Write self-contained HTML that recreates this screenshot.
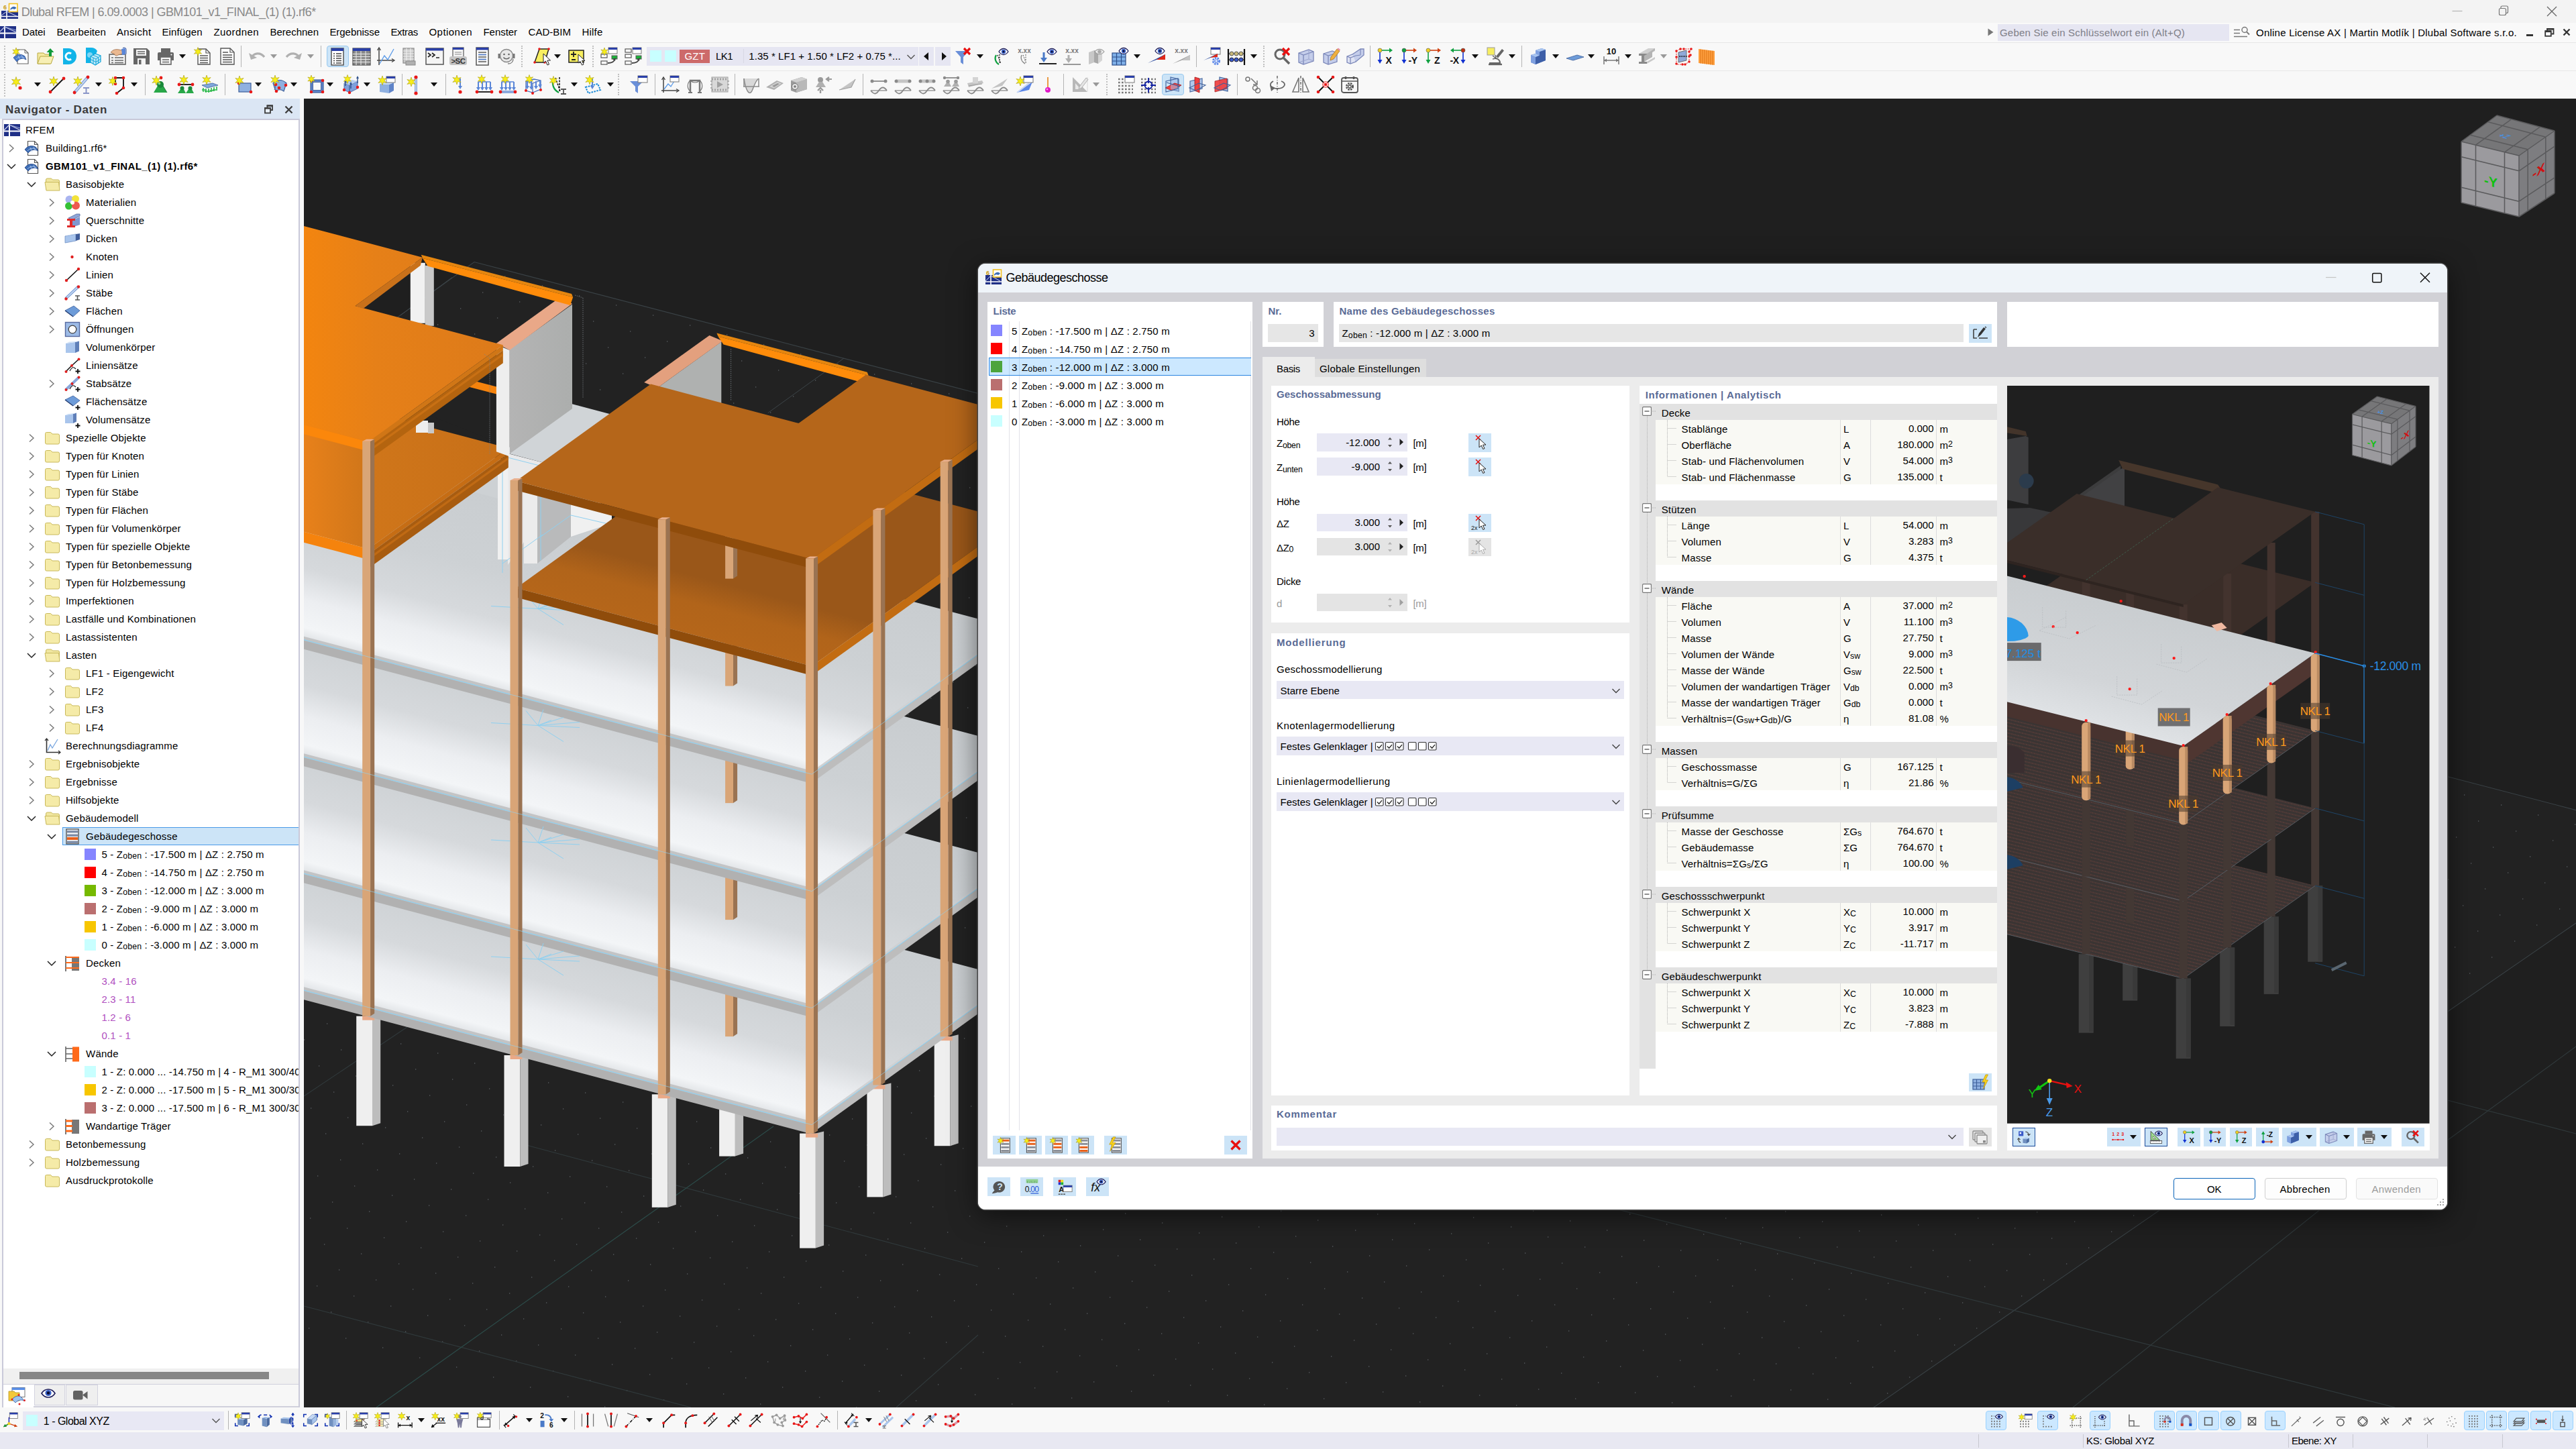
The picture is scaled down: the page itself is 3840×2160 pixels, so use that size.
<!DOCTYPE html>
<html lang="de"><head><meta charset="utf-8"><title>Dlubal RFEM</title><style>
html,body{margin:0;padding:0;background:#202020;}
body{width:3840px;height:2160px;position:relative;overflow:hidden;font-family:"Liberation Sans",sans-serif;}
.a{position:absolute;display:block;}
.t{position:absolute;white-space:pre;display:block;}
.t sub{font-size:82%;vertical-align:baseline;position:relative;top:0.12em;}
.t sup{font-size:82%;vertical-align:baseline;position:relative;top:-0.22em;}
svg{overflow:visible;}
svg text{font-family:"Liberation Sans",sans-serif;}
</style></head><body>
<!-- chrome -->
<div class="a" style="left:0px;top:0px;width:3840px;height:34px;background:#f3f3f3;"></div>
<div class="a" style="left:0px;top:34px;width:3840px;height:30px;background:#f9f9f9;"></div>
<div class="a" style="left:0px;top:63px;width:3840px;height:1px;background:#e6e6e6;"></div>
<div class="a" style="left:0px;top:64px;width:3840px;height:83px;background:#f8f8f8;"></div>
<div class="a" style="left:0px;top:105px;width:3840px;height:1px;background:#e9e9e9;"></div>
<svg class="a" style="left:2px;top:4px;width:26px;height:26px" viewBox="0 0 26 26"><rect x="0" y="12" width="25" height="12" fill="#1f2f86"/><path d="M0 20.500h25M8 12v12" stroke="#fff" stroke-width="1.600"/><path d="M8 13l15 7M8 13L0 19" stroke="#cfd6f0" stroke-width="1"/><rect x="11.500" y="1.500" width="12.500" height="12" fill="#fff" stroke="#f0c020" stroke-width="1.600"/><path d="M13.500 9c3-4 7-4 9-1l-3 2c-2-1-4-1-6 1z" fill="#3d6db5"/><text x="3" y="10" font-size="9" font-weight="bold" fill="#c89a10">6</text></svg>
<svg class="a" style="left:0px;top:39px;width:25px;height:19px" viewBox="0 0 25 19"><rect x="0" y="0" width="24" height="18" fill="#1f2f86"/><path d="M0 10.500h24M7 0v18" stroke="#fff" stroke-width="1.800"/><path d="M7 1l17 8M7 1L0 8" stroke="#cfd6f0" stroke-width="1.100"/><path d="M7 1l17 5" stroke="#9fb0e0" stroke-width=".9"/></svg>
<span class="t" style="left:31.8px;top:5.66px;font-size:18px;line-height:24px;height:24px;color:#8a8a8a;letter-spacing:-0.568px;">Dlubal RFEM | 6.09.0003 | GBM101_v1_FINAL_(1) (1).rf6*</span>
<svg class="a" style="left:3640px;top:0;width:200px;height:34px" viewBox="0 0 200 34"><path d="M15.5 16.5h15" stroke="#b5b5b5" stroke-width="1.2" fill="none"/><rect x="85.5" y="12.5" width="10" height="10" rx="2" fill="none" stroke="#777" stroke-width="1.2"/><path d="M88 12.5v-1.5a2 2 0 0 1 2-2h6.5a2 2 0 0 1 2 2v6.5a2 2 0 0 1-2 2h-1" fill="none" stroke="#777" stroke-width="1.2"/><path d="M157 10l14 14M171 10l-14 14" stroke="#666" stroke-width="1.3" fill="none"/></svg>
<span class="t" style="left:33px;top:38.4px;font-size:15px;line-height:20px;height:20px;color:#000;letter-spacing:-0.103px;">Datei</span>
<span class="t" style="left:84.5px;top:38.4px;font-size:15px;line-height:20px;height:20px;color:#000;letter-spacing:0.094px;">Bearbeiten</span>
<span class="t" style="left:174px;top:38.4px;font-size:15px;line-height:20px;height:20px;color:#000;letter-spacing:0.330px;">Ansicht</span>
<span class="t" style="left:241.5px;top:38.4px;font-size:15px;line-height:20px;height:20px;color:#000;letter-spacing:0.110px;">Einfügen</span>
<span class="t" style="left:318.5px;top:38.4px;font-size:15px;line-height:20px;height:20px;color:#000;letter-spacing:0.410px;">Zuordnen</span>
<span class="t" style="left:402.5px;top:38.4px;font-size:15px;line-height:20px;height:20px;color:#000;letter-spacing:-0.007px;">Berechnen</span>
<span class="t" style="left:491.4px;top:38.4px;font-size:15px;line-height:20px;height:20px;color:#000;letter-spacing:-0.045px;">Ergebnisse</span>
<span class="t" style="left:582.4px;top:38.4px;font-size:15px;line-height:20px;height:20px;color:#000;letter-spacing:-0.319px;">Extras</span>
<span class="t" style="left:639.5px;top:38.4px;font-size:15px;line-height:20px;height:20px;color:#000;letter-spacing:0.451px;">Optionen</span>
<span class="t" style="left:720.5px;top:38.4px;font-size:15px;line-height:20px;height:20px;color:#000;letter-spacing:-0.051px;">Fenster</span>
<span class="t" style="left:787.6px;top:38.4px;font-size:15px;line-height:20px;height:20px;color:#000;letter-spacing:0.010px;">CAD-BIM</span>
<span class="t" style="left:867.6px;top:38.4px;font-size:15px;line-height:20px;height:20px;color:#000;letter-spacing:0.160px;">Hilfe</span>
<svg class="a" style="left:2962px;top:41px;width:12px;height:14px" viewBox="0 0 12 14"><path d="M1.5 1.5l8 5.5-8 5.5z" fill="#777"/></svg>
<div class="a" style="left:2977.5px;top:35.5px;width:345px;height:25px;background:#e6e6f2;"></div>
<span class="t" style="left:2981px;top:38.8px;font-size:15px;line-height:20px;height:20px;color:#7f7f88;letter-spacing:0.203px;">Geben Sie ein Schlüsselwort ein (Alt+Q)</span>
<svg class="a" style="left:3328px;top:38px;width:28px;height:22px" viewBox="0 0 28 22"><path d="M2 6.5h9M2 11.5h9M2 16.5h20" stroke="#777" stroke-width="1.6" fill="none"/><circle cx="18" cy="6.5" r="4" fill="none" stroke="#777" stroke-width="1.5"/><path d="M21 9.5l4 4" stroke="#777" stroke-width="1.8"/></svg>
<span class="t" style="left:3363px;top:38.8px;font-size:15px;line-height:20px;height:20px;color:#000;letter-spacing:0.232px;">Online License AX | Martin Motlík | Dlubal Software s.r.o.</span>
<svg class="a" style="left:3760px;top:38px;width:80px;height:22px" viewBox="0 0 80 22"><rect x="6" y="13" width="10" height="3" fill="#333"/><rect x="34.2" y="8.2" width="8.6" height="7.6" fill="none" stroke="#333" stroke-width="1.8"/><path d="M37 8V5h9.5v7.5h-3" fill="none" stroke="#333" stroke-width="1.8"/><rect x="34" y="7.5" width="9" height="2.6" fill="#333"/><rect x="37" y="4" width="10" height="2.6" fill="#333"/><path d="M61.5 5.5l9 9M70.5 5.5l-9 9" stroke="#333" stroke-width="2.4"/></svg>
<!-- nav -->
<div class="a" style="left:0px;top:147px;width:5px;height:1951px;background:#f8f8f8;"></div>
<div class="a" style="left:0px;top:147px;width:447px;height:30px;background:#dbe6f4;"></div>
<span class="t" style="left:8px;top:151.81px;font-size:17px;line-height:23px;height:23px;color:#3a3a3a;letter-spacing:0.663px;font-weight:bold;">Navigator - Daten</span>
<svg class="a" style="left:390px;top:152px;width:52px;height:22px" viewBox="0 0 52 22"><rect x="5" y="9" width="8" height="7.500" fill="#e8f0fa" stroke="#3c3c3c" stroke-width="1.800"/><path d="M8.500 9V5.500h7.500V12h-3" fill="none" stroke="#3c3c3c" stroke-width="1.800"/><rect x="4.100" y="8" width="9.800" height="2.600" fill="#3c3c3c"/><rect x="7.600" y="4.500" width="9.300" height="2.400" fill="#3c3c3c"/><path d="M35.500 6.500l10 10M45.500 6.500l-10 10" stroke="#3c3c3c" stroke-width="2.300"/></svg>
<div class="a" style="left:3px;top:177px;width:444px;height:1921px;background:#c9c9d9;"></div>
<div class="a" style="left:5px;top:178.5px;width:440px;height:1884.5px;background:#fff;"></div>
<div class="a" style="left:5px;top:2040px;width:440px;height:23.5px;background:#f0f0f0;"></div>
<div class="a" style="left:29px;top:2045px;width:372px;height:11px;background:#878787;"></div>
<div class="a" style="left:5px;top:2063.5px;width:440px;height:33px;background:#f7f7f7;"></div>
<div class="a" style="left:5px;top:2063px;width:440px;height:1px;background:#d0d0dc;"></div>
<div class="a" style="left:5px;top:2064px;width:45.5px;height:33.5px;background:#fff;"></div>
<div class="a" style="left:50.5px;top:2064px;width:46px;height:30.5px;background:#efefef;border:1px solid #d3d3df;box-sizing:border-box;"></div>
<div class="a" style="left:97.5px;top:2064px;width:48.5px;height:30.5px;background:#efefef;border:1px solid #d3d3df;box-sizing:border-box;"></div>
<div class="a" style="left:50px;top:2096px;width:395px;height:1.5px;background:#d0d0dc;"></div>
<svg class="a" style="left:12px;top:2067px;width:28px;height:28px" viewBox="0 0 28 28"><rect x="6" y="1.500" width="19" height="14" fill="#fff" stroke="#777"/><rect x="6" y="1.500" width="19" height="3.500" fill="#5a8fe8"/><path d="M1 7h8l2 2h6v12H1z" fill="#f3c83a" stroke="#b8941f" stroke-width=".8"/><path d="M6 19c5-6 11-6 14-3l4 5c-4-2-9-1-13 3z" fill="#9cc3ee" stroke="#36589a" stroke-width=".8"/><circle cx="6" cy="19" r="1.500" fill="#e02020"/><circle cx="16" cy="12.500" r="1.500" fill="#e02020"/><circle cx="24.500" cy="20.500" r="1.500" fill="#e02020"/><circle cx="17" cy="26" r="1.500" fill="#e02020"/></svg>
<svg class="a" style="left:61px;top:2069px;width:22px;height:16px" viewBox="0 0 22 16"><path d="M1 8c5-8 15-8 20 0-5 8-15 8-20 0z" fill="#fff" stroke="#1d1d5a" stroke-width="1.600"/><circle cx="11" cy="7.500" r="4.600" fill="#3a62c8"/><circle cx="11" cy="7.500" r="2.300" fill="#0a0a30"/></svg>
<svg class="a" style="left:108px;top:2072px;width:24px;height:16px" viewBox="0 0 24 16"><rect x="1" y="1" width="14.500" height="13.500" rx="2.500" fill="#616161"/><path d="M15 7.500l7.500-5.500v11.500z" fill="#616161"/></svg>
<svg class="a" style="left:6px;top:181.5px;width:24px;height:24px" viewBox="0 0 24 24"><rect x="0" y="3" width="24" height="18" fill="#1f2f86"/><path d="M0 13.5h24M8 3v18" stroke="#fff" stroke-width="2"/><path d="M8 4L24 12M8 4L0 12" stroke="#cfd6f0" stroke-width="1.2"/><path d="M8 4l16 5" stroke="#9fb0e0" stroke-width="1"/></svg>
<span class="t" style="left:38px;top:183.8px;font-size:15px;line-height:20px;height:20px;color:#000;letter-spacing:0.266px;">RFEM</span>
<svg class="a" style="left:11px;top:212.5px;width:12px;height:16px" viewBox="0 0 12 16"><path d="M3 2.500l6 5.500-6 5.500" fill="none" stroke="#777" stroke-width="1.400"/></svg>
<svg class="a" style="left:36px;top:208.5px;width:24px;height:24px" viewBox="0 0 24 24"><path d="M5.5 1.5h10l5 5v16h-15z" fill="#fff" stroke="#555" stroke-width="1.2"/><path d="M15.5 1.5v5h5" fill="none" stroke="#555" stroke-width="1.2"/><path d="M1 14c4-6 12-7 17-3l3 5c-5-3-11-2-15 3z" fill="#3d6db5" stroke="#1d3f80" stroke-width=".8"/><path d="M5 16c3-4 9-5 13-2M9 11l3 7M14 10l3 6" stroke="#bcd3f2" stroke-width=".8" fill="none"/></svg>
<span class="t" style="left:68px;top:210.8px;font-size:15px;line-height:20px;height:20px;color:#000;letter-spacing:0.159px;">Building1.rf6*</span>
<svg class="a" style="left:9px;top:241.5px;width:16px;height:12px" viewBox="0 0 16 12"><path d="M2 3l6 6 6-6" fill="none" stroke="#222" stroke-width="1.500"/></svg>
<svg class="a" style="left:36px;top:235.5px;width:24px;height:24px" viewBox="0 0 24 24"><path d="M5.5 1.5h10l5 5v16h-15z" fill="#fff" stroke="#555" stroke-width="1.2"/><path d="M15.5 1.5v5h5" fill="none" stroke="#555" stroke-width="1.2"/><path d="M1 14c4-6 12-7 17-3l3 5c-5-3-11-2-15 3z" fill="#3d6db5" stroke="#1d3f80" stroke-width=".8"/><path d="M5 16c3-4 9-5 13-2M9 11l3 7M14 10l3 6" stroke="#bcd3f2" stroke-width=".8" fill="none"/></svg>
<span class="t" style="left:68px;top:237.8px;font-size:15px;line-height:20px;height:20px;color:#000;letter-spacing:0.386px;font-weight:bold;">GBM101_v1_FINAL_(1) (1).rf6*</span>
<svg class="a" style="left:39px;top:268.5px;width:16px;height:12px" viewBox="0 0 16 12"><path d="M2 3l6 6 6-6" fill="none" stroke="#222" stroke-width="1.500"/></svg>
<svg class="a" style="left:66px;top:262.5px;width:24px;height:24px" viewBox="0 0 24 24"><path d="M2.5 5a2 2 0 0 1 2-2h6l2 2h8a2 2 0 0 1 2 2v12h-20z" fill="#f0e6a0" stroke="#c9b95a"/><path d="M1 8.5h20.5l1.5 12.5h-20z" fill="#f5eba8" stroke="#c9b95a" stroke-linejoin="round"/></svg>
<span class="t" style="left:98px;top:264.8px;font-size:15px;line-height:20px;height:20px;color:#000;letter-spacing:0.177px;">Basisobjekte</span>
<svg class="a" style="left:71px;top:293.5px;width:12px;height:16px" viewBox="0 0 12 16"><path d="M3 2.500l6 5.500-6 5.500" fill="none" stroke="#777" stroke-width="1.400"/></svg>
<svg class="a" style="left:96px;top:289.5px;width:24px;height:24px" viewBox="0 0 24 24"><circle cx="7.5" cy="7.5" r="6" fill="#a9b4f0"/><circle cx="16.5" cy="6.5" r="5.5" fill="#f3e33a"/><circle cx="6.5" cy="17" r="5.5" fill="#35c135"/><circle cx="17" cy="16.5" r="6" fill="#ee5a4f"/><circle cx="12" cy="12" r="3" fill="#fff"/></svg>
<span class="t" style="left:128px;top:291.8px;font-size:15px;line-height:20px;height:20px;color:#000;letter-spacing:0.167px;">Materialien</span>
<svg class="a" style="left:71px;top:320.5px;width:12px;height:16px" viewBox="0 0 12 16"><path d="M3 2.500l6 5.500-6 5.500" fill="none" stroke="#777" stroke-width="1.400"/></svg>
<svg class="a" style="left:96px;top:316.5px;width:24px;height:24px" viewBox="0 0 24 24"><path d="M6 8l12-6h5v3l-12 6z" fill="#8ea5d8" stroke="#56699e" stroke-width=".8"/><path d="M11 12l12-6v12l-12 4z" fill="#7f97cf"/><path d="M4 9h12v3h-4v7h4v3H4v-3h4v-7H4z" fill="#e02a2a"/></svg>
<span class="t" style="left:128px;top:318.8px;font-size:15px;line-height:20px;height:20px;color:#000;letter-spacing:0.177px;">Querschnitte</span>
<svg class="a" style="left:71px;top:347.5px;width:12px;height:16px" viewBox="0 0 12 16"><path d="M3 2.500l6 5.500-6 5.500" fill="none" stroke="#777" stroke-width="1.400"/></svg>
<svg class="a" style="left:96px;top:343.5px;width:24px;height:24px" viewBox="0 0 24 24"><path d="M1 8l16-3v10L1 18z" fill="#a9c5ec" stroke="#6f8fc4" stroke-width=".8"/><path d="M17 5l6-1v9l-6 2z" fill="#3f5d9a"/><path d="M1 8l6-2 16-2-6 1z" fill="#d4e4f7"/></svg>
<span class="t" style="left:128px;top:345.8px;font-size:15px;line-height:20px;height:20px;color:#000;letter-spacing:0.191px;">Dicken</span>
<svg class="a" style="left:71px;top:374.5px;width:12px;height:16px" viewBox="0 0 12 16"><path d="M3 2.500l6 5.500-6 5.500" fill="none" stroke="#777" stroke-width="1.400"/></svg>
<svg class="a" style="left:96px;top:370.5px;width:24px;height:24px" viewBox="0 0 24 24"><circle cx="11.5" cy="12" r="2.2" fill="#e02020"/></svg>
<span class="t" style="left:128px;top:372.8px;font-size:15px;line-height:20px;height:20px;color:#000;letter-spacing:0.198px;">Knoten</span>
<svg class="a" style="left:71px;top:401.5px;width:12px;height:16px" viewBox="0 0 12 16"><path d="M3 2.500l6 5.500-6 5.500" fill="none" stroke="#777" stroke-width="1.400"/></svg>
<svg class="a" style="left:96px;top:397.5px;width:24px;height:24px" viewBox="0 0 24 24"><path d="M3 20L21 3" stroke="#111" stroke-width="1.6"/><circle cx="3" cy="20" r="2.2" fill="#e02020"/><circle cx="21" cy="3" r="2.2" fill="#e02020"/></svg>
<span class="t" style="left:128px;top:399.8px;font-size:15px;line-height:20px;height:20px;color:#000;letter-spacing:0.167px;">Linien</span>
<svg class="a" style="left:71px;top:428.5px;width:12px;height:16px" viewBox="0 0 12 16"><path d="M3 2.500l6 5.500-6 5.500" fill="none" stroke="#777" stroke-width="1.400"/></svg>
<svg class="a" style="left:96px;top:424.5px;width:24px;height:24px" viewBox="0 0 24 24"><path d="M2 20L21 2" stroke="#7ea0d8" stroke-width="4"/><path d="M2 20L21 2" stroke="#cfe0f5" stroke-width="1.5"/><circle cx="2.5" cy="20.5" r="2.2" fill="#e02020"/><circle cx="21" cy="2.5" r="2.2" fill="#e02020"/><path d="M16 16h7M16 22h7M19.5 16v6" stroke="#555" stroke-width="1.6"/></svg>
<span class="t" style="left:128px;top:426.8px;font-size:15px;line-height:20px;height:20px;color:#000;letter-spacing:0.196px;">Stäbe</span>
<svg class="a" style="left:71px;top:455.5px;width:12px;height:16px" viewBox="0 0 12 16"><path d="M3 2.500l6 5.500-6 5.500" fill="none" stroke="#777" stroke-width="1.400"/></svg>
<svg class="a" style="left:96px;top:451.5px;width:24px;height:24px" viewBox="0 0 24 24"><path d="M1 11l13-7 9 7-10 9z" fill="#6d9bd8" stroke="#3d5f9a" stroke-width=".8"/><path d="M1 11l12 9" stroke="#2d4578" stroke-width="1.5"/></svg>
<span class="t" style="left:128px;top:453.8px;font-size:15px;line-height:20px;height:20px;color:#000;letter-spacing:0.191px;">Flächen</span>
<svg class="a" style="left:71px;top:482.5px;width:12px;height:16px" viewBox="0 0 12 16"><path d="M3 2.500l6 5.500-6 5.500" fill="none" stroke="#777" stroke-width="1.400"/></svg>
<svg class="a" style="left:96px;top:478.5px;width:24px;height:24px" viewBox="0 0 24 24"><rect x="1.500" y="1.500" width="21" height="21" fill="#9dbbe6" stroke="#56699e" stroke-width="1.4"/><circle cx="12" cy="12" r="5.8" fill="#fff" stroke="#444" stroke-width="1.3"/></svg>
<span class="t" style="left:128px;top:480.8px;font-size:15px;line-height:20px;height:20px;color:#000;letter-spacing:0.194px;">Öffnungen</span>
<svg class="a" style="left:96px;top:505.5px;width:24px;height:24px" viewBox="0 0 24 24"><path d="M2 6l14-2v16H2z" fill="#a9c5ec"/><path d="M16 4l6-1.500v15L16 20z" fill="#5f7fb8"/><path d="M2 6l5-2.500 15-1-6 1.500z" fill="#d4e4f7"/></svg>
<span class="t" style="left:128px;top:507.8px;font-size:15px;line-height:20px;height:20px;color:#000;letter-spacing:0.194px;">Volumenkörper</span>
<svg class="a" style="left:96px;top:532.5px;width:24px;height:24px" viewBox="0 0 24 24"><path d="M2 21L11 12 22 2" stroke="#111" stroke-width="1.5" fill="none"/><path d="M8 20c4-8 7-5 9-3" stroke="#111" stroke-width="1.2" fill="none"/><circle cx="2.500" cy="21" r="2" fill="#e02020"/><circle cx="11" cy="12" r="2" fill="#e02020"/><circle cx="21.500" cy="2.500" r="2" fill="#e02020"/><path d="M16.500 20.500h7M20 17v7" stroke="#111" stroke-width="1.8"/></svg>
<span class="t" style="left:128px;top:534.8px;font-size:15px;line-height:20px;height:20px;color:#000;letter-spacing:0.172px;">Liniensätze</span>
<svg class="a" style="left:71px;top:563.5px;width:12px;height:16px" viewBox="0 0 12 16"><path d="M3 2.500l6 5.500-6 5.500" fill="none" stroke="#777" stroke-width="1.400"/></svg>
<svg class="a" style="left:96px;top:559.5px;width:24px;height:24px" viewBox="0 0 24 24"><path d="M2 21L21 3" stroke="#8aa8dc" stroke-width="4"/><path d="M8 20c4-8 7-5 9-3" stroke="#111" stroke-width="1.2" fill="none"/><circle cx="2.500" cy="21" r="2" fill="#e02020"/><circle cx="11.500" cy="12" r="2" fill="#e02020"/><circle cx="21.500" cy="2.500" r="2" fill="#e02020"/><path d="M16.500 20.500h7M20 17v7" stroke="#111" stroke-width="1.800"/></svg>
<span class="t" style="left:128px;top:561.8px;font-size:15px;line-height:20px;height:20px;color:#000;letter-spacing:0.185px;">Stabsätze</span>
<svg class="a" style="left:96px;top:586.5px;width:24px;height:24px" viewBox="0 0 24 24"><path d="M1 9l12-6 10 7-10 8z" fill="#6d9bd8" stroke="#3d5f9a" stroke-width=".8"/><path d="M1 9l12 9" stroke="#2d4578" stroke-width="1.500"/><path d="M16.500 20.500h7M20 17v7" stroke="#111" stroke-width="1.800"/></svg>
<span class="t" style="left:128px;top:588.8px;font-size:15px;line-height:20px;height:20px;color:#000;letter-spacing:0.186px;">Flächensätze</span>
<svg class="a" style="left:96px;top:613.5px;width:24px;height:24px" viewBox="0 0 24 24"><path d="M1 5l12-2v14H1z" fill="#a9c5ec"/><path d="M13 3l5-1.500v13L13 17z" fill="#5f7fb8"/><path d="M1 5l4-2 13-1.500-5 1.500z" fill="#d4e4f7"/><path d="M16.500 20.500h7M20 17v7" stroke="#111" stroke-width="1.800"/></svg>
<span class="t" style="left:128px;top:615.8px;font-size:15px;line-height:20px;height:20px;color:#000;letter-spacing:0.196px;">Volumensätze</span>
<svg class="a" style="left:41px;top:644.5px;width:12px;height:16px" viewBox="0 0 12 16"><path d="M3 2.500l6 5.500-6 5.500" fill="none" stroke="#777" stroke-width="1.400"/></svg>
<svg class="a" style="left:66px;top:640.5px;width:24px;height:24px" viewBox="0 0 24 24"><path d="M1.5 5.5a2 2 0 0 1 2-2h6l2.5 2.5h8.5a2 2 0 0 1 2 2V19a2 2 0 0 1-2 2h-17a2 2 0 0 1-2-2z" fill="#f5eba8" stroke="#c9b95a" stroke-width="1"/></svg>
<span class="t" style="left:98px;top:642.8px;font-size:15px;line-height:20px;height:20px;color:#000;letter-spacing:0.172px;">Spezielle Objekte</span>
<svg class="a" style="left:41px;top:671.5px;width:12px;height:16px" viewBox="0 0 12 16"><path d="M3 2.500l6 5.500-6 5.500" fill="none" stroke="#777" stroke-width="1.400"/></svg>
<svg class="a" style="left:66px;top:667.5px;width:24px;height:24px" viewBox="0 0 24 24"><path d="M1.5 5.5a2 2 0 0 1 2-2h6l2.5 2.5h8.5a2 2 0 0 1 2 2V19a2 2 0 0 1-2 2h-17a2 2 0 0 1-2-2z" fill="#f5eba8" stroke="#c9b95a" stroke-width="1"/></svg>
<span class="t" style="left:98px;top:669.8px;font-size:15px;line-height:20px;height:20px;color:#000;letter-spacing:0.179px;">Typen für Knoten</span>
<svg class="a" style="left:41px;top:698.5px;width:12px;height:16px" viewBox="0 0 12 16"><path d="M3 2.500l6 5.500-6 5.500" fill="none" stroke="#777" stroke-width="1.400"/></svg>
<svg class="a" style="left:66px;top:694.5px;width:24px;height:24px" viewBox="0 0 24 24"><path d="M1.5 5.5a2 2 0 0 1 2-2h6l2.5 2.5h8.5a2 2 0 0 1 2 2V19a2 2 0 0 1-2 2h-17a2 2 0 0 1-2-2z" fill="#f5eba8" stroke="#c9b95a" stroke-width="1"/></svg>
<span class="t" style="left:98px;top:696.8px;font-size:15px;line-height:20px;height:20px;color:#000;letter-spacing:0.167px;">Typen für Linien</span>
<svg class="a" style="left:41px;top:725.5px;width:12px;height:16px" viewBox="0 0 12 16"><path d="M3 2.500l6 5.500-6 5.500" fill="none" stroke="#777" stroke-width="1.400"/></svg>
<svg class="a" style="left:66px;top:721.5px;width:24px;height:24px" viewBox="0 0 24 24"><path d="M1.5 5.5a2 2 0 0 1 2-2h6l2.5 2.5h8.5a2 2 0 0 1 2 2V19a2 2 0 0 1-2 2h-17a2 2 0 0 1-2-2z" fill="#f5eba8" stroke="#c9b95a" stroke-width="1"/></svg>
<span class="t" style="left:98px;top:723.8px;font-size:15px;line-height:20px;height:20px;color:#000;letter-spacing:0.177px;">Typen für Stäbe</span>
<svg class="a" style="left:41px;top:752.5px;width:12px;height:16px" viewBox="0 0 12 16"><path d="M3 2.500l6 5.500-6 5.500" fill="none" stroke="#777" stroke-width="1.400"/></svg>
<svg class="a" style="left:66px;top:748.5px;width:24px;height:24px" viewBox="0 0 24 24"><path d="M1.5 5.5a2 2 0 0 1 2-2h6l2.5 2.5h8.5a2 2 0 0 1 2 2V19a2 2 0 0 1-2 2h-17a2 2 0 0 1-2-2z" fill="#f5eba8" stroke="#c9b95a" stroke-width="1"/></svg>
<span class="t" style="left:98px;top:750.8px;font-size:15px;line-height:20px;height:20px;color:#000;letter-spacing:0.177px;">Typen für Flächen</span>
<svg class="a" style="left:41px;top:779.5px;width:12px;height:16px" viewBox="0 0 12 16"><path d="M3 2.500l6 5.500-6 5.500" fill="none" stroke="#777" stroke-width="1.400"/></svg>
<svg class="a" style="left:66px;top:775.5px;width:24px;height:24px" viewBox="0 0 24 24"><path d="M1.5 5.5a2 2 0 0 1 2-2h6l2.5 2.5h8.5a2 2 0 0 1 2 2V19a2 2 0 0 1-2 2h-17a2 2 0 0 1-2-2z" fill="#f5eba8" stroke="#c9b95a" stroke-width="1"/></svg>
<span class="t" style="left:98px;top:777.8px;font-size:15px;line-height:20px;height:20px;color:#000;letter-spacing:0.182px;">Typen für Volumenkörper</span>
<svg class="a" style="left:41px;top:806.5px;width:12px;height:16px" viewBox="0 0 12 16"><path d="M3 2.500l6 5.500-6 5.500" fill="none" stroke="#777" stroke-width="1.400"/></svg>
<svg class="a" style="left:66px;top:802.5px;width:24px;height:24px" viewBox="0 0 24 24"><path d="M1.5 5.5a2 2 0 0 1 2-2h6l2.5 2.5h8.5a2 2 0 0 1 2 2V19a2 2 0 0 1-2 2h-17a2 2 0 0 1-2-2z" fill="#f5eba8" stroke="#c9b95a" stroke-width="1"/></svg>
<span class="t" style="left:98px;top:804.8px;font-size:15px;line-height:20px;height:20px;color:#000;letter-spacing:0.168px;">Typen für spezielle Objekte</span>
<svg class="a" style="left:41px;top:833.5px;width:12px;height:16px" viewBox="0 0 12 16"><path d="M3 2.500l6 5.500-6 5.500" fill="none" stroke="#777" stroke-width="1.400"/></svg>
<svg class="a" style="left:66px;top:829.5px;width:24px;height:24px" viewBox="0 0 24 24"><path d="M1.5 5.5a2 2 0 0 1 2-2h6l2.5 2.5h8.5a2 2 0 0 1 2 2V19a2 2 0 0 1-2 2h-17a2 2 0 0 1-2-2z" fill="#f5eba8" stroke="#c9b95a" stroke-width="1"/></svg>
<span class="t" style="left:98px;top:831.8px;font-size:15px;line-height:20px;height:20px;color:#000;letter-spacing:0.191px;">Typen für Betonbemessung</span>
<svg class="a" style="left:41px;top:860.5px;width:12px;height:16px" viewBox="0 0 12 16"><path d="M3 2.500l6 5.500-6 5.500" fill="none" stroke="#777" stroke-width="1.400"/></svg>
<svg class="a" style="left:66px;top:856.5px;width:24px;height:24px" viewBox="0 0 24 24"><path d="M1.5 5.5a2 2 0 0 1 2-2h6l2.5 2.5h8.5a2 2 0 0 1 2 2V19a2 2 0 0 1-2 2h-17a2 2 0 0 1-2-2z" fill="#f5eba8" stroke="#c9b95a" stroke-width="1"/></svg>
<span class="t" style="left:98px;top:858.8px;font-size:15px;line-height:20px;height:20px;color:#000;letter-spacing:0.189px;">Typen für Holzbemessung</span>
<svg class="a" style="left:41px;top:887.5px;width:12px;height:16px" viewBox="0 0 12 16"><path d="M3 2.500l6 5.500-6 5.500" fill="none" stroke="#777" stroke-width="1.400"/></svg>
<svg class="a" style="left:66px;top:883.5px;width:24px;height:24px" viewBox="0 0 24 24"><path d="M1.5 5.5a2 2 0 0 1 2-2h6l2.5 2.5h8.5a2 2 0 0 1 2 2V19a2 2 0 0 1-2 2h-17a2 2 0 0 1-2-2z" fill="#f5eba8" stroke="#c9b95a" stroke-width="1"/></svg>
<span class="t" style="left:98px;top:885.8px;font-size:15px;line-height:20px;height:20px;color:#000;letter-spacing:0.177px;">Imperfektionen</span>
<svg class="a" style="left:41px;top:914.5px;width:12px;height:16px" viewBox="0 0 12 16"><path d="M3 2.500l6 5.500-6 5.500" fill="none" stroke="#777" stroke-width="1.400"/></svg>
<svg class="a" style="left:66px;top:910.5px;width:24px;height:24px" viewBox="0 0 24 24"><path d="M1.5 5.5a2 2 0 0 1 2-2h6l2.5 2.5h8.5a2 2 0 0 1 2 2V19a2 2 0 0 1-2 2h-17a2 2 0 0 1-2-2z" fill="#f5eba8" stroke="#c9b95a" stroke-width="1"/></svg>
<span class="t" style="left:98px;top:912.8px;font-size:15px;line-height:20px;height:20px;color:#000;letter-spacing:0.175px;">Lastfälle und Kombinationen</span>
<svg class="a" style="left:41px;top:941.5px;width:12px;height:16px" viewBox="0 0 12 16"><path d="M3 2.500l6 5.500-6 5.500" fill="none" stroke="#777" stroke-width="1.400"/></svg>
<svg class="a" style="left:66px;top:937.5px;width:24px;height:24px" viewBox="0 0 24 24"><path d="M1.5 5.5a2 2 0 0 1 2-2h6l2.5 2.5h8.5a2 2 0 0 1 2 2V19a2 2 0 0 1-2 2h-17a2 2 0 0 1-2-2z" fill="#f5eba8" stroke="#c9b95a" stroke-width="1"/></svg>
<span class="t" style="left:98px;top:939.8px;font-size:15px;line-height:20px;height:20px;color:#000;letter-spacing:0.174px;">Lastassistenten</span>
<svg class="a" style="left:39px;top:970.5px;width:16px;height:12px" viewBox="0 0 16 12"><path d="M2 3l6 6 6-6" fill="none" stroke="#222" stroke-width="1.500"/></svg>
<svg class="a" style="left:66px;top:964.5px;width:24px;height:24px" viewBox="0 0 24 24"><path d="M2.5 5a2 2 0 0 1 2-2h6l2 2h8a2 2 0 0 1 2 2v12h-20z" fill="#f0e6a0" stroke="#c9b95a"/><path d="M1 8.5h20.5l1.5 12.5h-20z" fill="#f5eba8" stroke="#c9b95a" stroke-linejoin="round"/></svg>
<span class="t" style="left:98px;top:966.8px;font-size:15px;line-height:20px;height:20px;color:#000;letter-spacing:0.188px;">Lasten</span>
<svg class="a" style="left:71px;top:995.5px;width:12px;height:16px" viewBox="0 0 12 16"><path d="M3 2.500l6 5.500-6 5.500" fill="none" stroke="#777" stroke-width="1.400"/></svg>
<svg class="a" style="left:96px;top:991.5px;width:24px;height:24px" viewBox="0 0 24 24"><path d="M1.5 5.5a2 2 0 0 1 2-2h6l2.5 2.5h8.5a2 2 0 0 1 2 2V19a2 2 0 0 1-2 2h-17a2 2 0 0 1-2-2z" fill="#f5eba8" stroke="#c9b95a" stroke-width="1"/></svg>
<span class="t" style="left:128px;top:993.8px;font-size:15px;line-height:20px;height:20px;color:#000;letter-spacing:0.178px;">LF1 - Eigengewicht</span>
<svg class="a" style="left:71px;top:1022.5px;width:12px;height:16px" viewBox="0 0 12 16"><path d="M3 2.500l6 5.500-6 5.500" fill="none" stroke="#777" stroke-width="1.400"/></svg>
<svg class="a" style="left:96px;top:1018.5px;width:24px;height:24px" viewBox="0 0 24 24"><path d="M1.5 5.5a2 2 0 0 1 2-2h6l2.5 2.5h8.5a2 2 0 0 1 2 2V19a2 2 0 0 1-2 2h-17a2 2 0 0 1-2-2z" fill="#f5eba8" stroke="#c9b95a" stroke-width="1"/></svg>
<span class="t" style="left:128px;top:1020.8px;font-size:15px;line-height:20px;height:20px;color:#000;letter-spacing:0.215px;">LF2</span>
<svg class="a" style="left:71px;top:1049.5px;width:12px;height:16px" viewBox="0 0 12 16"><path d="M3 2.500l6 5.500-6 5.500" fill="none" stroke="#777" stroke-width="1.400"/></svg>
<svg class="a" style="left:96px;top:1045.5px;width:24px;height:24px" viewBox="0 0 24 24"><path d="M1.5 5.5a2 2 0 0 1 2-2h6l2.5 2.5h8.5a2 2 0 0 1 2 2V19a2 2 0 0 1-2 2h-17a2 2 0 0 1-2-2z" fill="#f5eba8" stroke="#c9b95a" stroke-width="1"/></svg>
<span class="t" style="left:128px;top:1047.8px;font-size:15px;line-height:20px;height:20px;color:#000;letter-spacing:0.215px;">LF3</span>
<svg class="a" style="left:71px;top:1076.5px;width:12px;height:16px" viewBox="0 0 12 16"><path d="M3 2.500l6 5.500-6 5.500" fill="none" stroke="#777" stroke-width="1.400"/></svg>
<svg class="a" style="left:96px;top:1072.5px;width:24px;height:24px" viewBox="0 0 24 24"><path d="M1.5 5.5a2 2 0 0 1 2-2h6l2.5 2.5h8.5a2 2 0 0 1 2 2V19a2 2 0 0 1-2 2h-17a2 2 0 0 1-2-2z" fill="#f5eba8" stroke="#c9b95a" stroke-width="1"/></svg>
<span class="t" style="left:128px;top:1074.8px;font-size:15px;line-height:20px;height:20px;color:#000;letter-spacing:0.215px;">LF4</span>
<svg class="a" style="left:66px;top:1099.5px;width:24px;height:24px" viewBox="0 0 24 24"><path d="M3.500 1v20.500H24" stroke="#333" stroke-width="1.600" fill="none"/><path d="M1 4l2.500-3 2.500 3M21 19l3 2.500-3 2.500" stroke="#333" stroke-width="1.200" fill="none"/><path d="M5 19l4-9 3 5 8-13" stroke="#7aa7e0" stroke-width="1.300" fill="none"/></svg>
<span class="t" style="left:98px;top:1101.8px;font-size:15px;line-height:20px;height:20px;color:#000;letter-spacing:0.204px;">Berechnungsdiagramme</span>
<svg class="a" style="left:41px;top:1130.5px;width:12px;height:16px" viewBox="0 0 12 16"><path d="M3 2.500l6 5.500-6 5.500" fill="none" stroke="#777" stroke-width="1.400"/></svg>
<svg class="a" style="left:66px;top:1126.5px;width:24px;height:24px" viewBox="0 0 24 24"><path d="M1.5 5.5a2 2 0 0 1 2-2h6l2.5 2.5h8.5a2 2 0 0 1 2 2V19a2 2 0 0 1-2 2h-17a2 2 0 0 1-2-2z" fill="#f5eba8" stroke="#c9b95a" stroke-width="1"/></svg>
<span class="t" style="left:98px;top:1128.8px;font-size:15px;line-height:20px;height:20px;color:#000;letter-spacing:0.179px;">Ergebnisobjekte</span>
<svg class="a" style="left:41px;top:1157.5px;width:12px;height:16px" viewBox="0 0 12 16"><path d="M3 2.500l6 5.500-6 5.500" fill="none" stroke="#777" stroke-width="1.400"/></svg>
<svg class="a" style="left:66px;top:1153.5px;width:24px;height:24px" viewBox="0 0 24 24"><path d="M1.5 5.5a2 2 0 0 1 2-2h6l2.5 2.5h8.5a2 2 0 0 1 2 2V19a2 2 0 0 1-2 2h-17a2 2 0 0 1-2-2z" fill="#f5eba8" stroke="#c9b95a" stroke-width="1"/></svg>
<span class="t" style="left:98px;top:1155.8px;font-size:15px;line-height:20px;height:20px;color:#000;letter-spacing:0.188px;">Ergebnisse</span>
<svg class="a" style="left:41px;top:1184.5px;width:12px;height:16px" viewBox="0 0 12 16"><path d="M3 2.500l6 5.500-6 5.500" fill="none" stroke="#777" stroke-width="1.400"/></svg>
<svg class="a" style="left:66px;top:1180.5px;width:24px;height:24px" viewBox="0 0 24 24"><path d="M1.5 5.5a2 2 0 0 1 2-2h6l2.5 2.5h8.5a2 2 0 0 1 2 2V19a2 2 0 0 1-2 2h-17a2 2 0 0 1-2-2z" fill="#f5eba8" stroke="#c9b95a" stroke-width="1"/></svg>
<span class="t" style="left:98px;top:1182.8px;font-size:15px;line-height:20px;height:20px;color:#000;letter-spacing:0.162px;">Hilfsobjekte</span>
<svg class="a" style="left:39px;top:1213.5px;width:16px;height:12px" viewBox="0 0 16 12"><path d="M2 3l6 6 6-6" fill="none" stroke="#222" stroke-width="1.500"/></svg>
<svg class="a" style="left:66px;top:1207.5px;width:24px;height:24px" viewBox="0 0 24 24"><path d="M2.5 5a2 2 0 0 1 2-2h6l2 2h8a2 2 0 0 1 2 2v12h-20z" fill="#f0e6a0" stroke="#c9b95a"/><path d="M1 8.5h20.5l1.5 12.5h-20z" fill="#f5eba8" stroke="#c9b95a" stroke-linejoin="round"/></svg>
<span class="t" style="left:98px;top:1209.8px;font-size:15px;line-height:20px;height:20px;color:#000;letter-spacing:0.204px;">Gebäudemodell</span>
<div class="a" style="left:93px;top:1233px;width:352px;height:27px;background:#cce4f7;border:1px solid #4a9ae8;border-right:none;box-sizing:border-box;"></div>
<svg class="a" style="left:69px;top:1240.5px;width:16px;height:12px" viewBox="0 0 16 12"><path d="M2 3l6 6 6-6" fill="none" stroke="#222" stroke-width="1.500"/></svg>
<svg class="a" style="left:96px;top:1234.5px;width:24px;height:24px" viewBox="0 0 24 24"><rect x="3" y="1" width="18" height="22" fill="#fff" stroke="#555" stroke-width="1.400"/><rect x="4" y="3" width="16" height="3.500" fill="#7f8ea8"/><rect x="4" y="8.500" width="16" height="3.500" fill="#7f8ea8"/><rect x="4" y="13" width="16" height="4" fill="#e8601a"/><rect x="4" y="18.500" width="16" height="3.500" fill="#7f8ea8"/></svg>
<span class="t" style="left:128px;top:1236.8px;font-size:15px;line-height:20px;height:20px;color:#000;letter-spacing:0.209px;">Gebäudegeschosse</span>
<div class="a" style="left:125.8px;top:1265px;width:17px;height:17px;background:#8585ff;"></div>
<span class="t" style="left:151.5px;top:1263.8px;font-size:15px;line-height:20px;height:20px;color:#000;letter-spacing:0.164px;">5 - Z<sub>oben</sub> : -17.500 m | ΔZ : 2.750 m</span>
<div class="a" style="left:125.8px;top:1292px;width:17px;height:17px;background:#ff0000;"></div>
<span class="t" style="left:151.5px;top:1290.8px;font-size:15px;line-height:20px;height:20px;color:#000;letter-spacing:0.164px;">4 - Z<sub>oben</sub> : -14.750 m | ΔZ : 2.750 m</span>
<div class="a" style="left:125.8px;top:1319px;width:17px;height:17px;background:#76b900;"></div>
<span class="t" style="left:151.5px;top:1317.8px;font-size:15px;line-height:20px;height:20px;color:#000;letter-spacing:0.164px;">3 - Z<sub>oben</sub> : -12.000 m | ΔZ : 3.000 m</span>
<div class="a" style="left:125.8px;top:1346px;width:17px;height:17px;background:#ba6f6f;"></div>
<span class="t" style="left:151.5px;top:1344.8px;font-size:15px;line-height:20px;height:20px;color:#000;letter-spacing:0.163px;">2 - Z<sub>oben</sub> : -9.000 m | ΔZ : 3.000 m</span>
<div class="a" style="left:125.8px;top:1373px;width:17px;height:17px;background:#f7c600;"></div>
<span class="t" style="left:151.5px;top:1371.8px;font-size:15px;line-height:20px;height:20px;color:#000;letter-spacing:0.163px;">1 - Z<sub>oben</sub> : -6.000 m | ΔZ : 3.000 m</span>
<div class="a" style="left:125.8px;top:1400px;width:17px;height:17px;background:#c8ffff;"></div>
<span class="t" style="left:151.5px;top:1398.8px;font-size:15px;line-height:20px;height:20px;color:#000;letter-spacing:0.163px;">0 - Z<sub>oben</sub> : -3.000 m | ΔZ : 3.000 m</span>
<svg class="a" style="left:69px;top:1429.5px;width:16px;height:12px" viewBox="0 0 16 12"><path d="M2 3l6 6 6-6" fill="none" stroke="#222" stroke-width="1.500"/></svg>
<svg class="a" style="left:96px;top:1423.5px;width:24px;height:24px" viewBox="0 0 24 24"><rect x="11" y="2" width="11" height="21" fill="#777"/><path d="M2 1v23" stroke="#555" stroke-width="1.600"/><path d="M2 3h20M2 11h20M2 19h20" stroke="#ff6a1a" stroke-width="2.200"/></svg>
<span class="t" style="left:128px;top:1425.8px;font-size:15px;line-height:20px;height:20px;color:#000;letter-spacing:0.212px;">Decken</span>
<span class="t" style="left:151.5px;top:1452.8px;font-size:15px;line-height:20px;height:20px;color:#b050c0;letter-spacing:0.159px;">3.4 - 16</span>
<span class="t" style="left:151.5px;top:1479.8px;font-size:15px;line-height:20px;height:20px;color:#b050c0;letter-spacing:0.156px;">2.3 - 11</span>
<span class="t" style="left:151.5px;top:1506.8px;font-size:15px;line-height:20px;height:20px;color:#b050c0;letter-spacing:0.152px;">1.2 - 6</span>
<span class="t" style="left:151.5px;top:1533.8px;font-size:15px;line-height:20px;height:20px;color:#b050c0;letter-spacing:0.152px;">0.1 - 1</span>
<svg class="a" style="left:69px;top:1564.5px;width:16px;height:12px" viewBox="0 0 16 12"><path d="M2 3l6 6 6-6" fill="none" stroke="#222" stroke-width="1.500"/></svg>
<svg class="a" style="left:96px;top:1558.5px;width:24px;height:24px" viewBox="0 0 24 24"><path d="M2 1v23M2 4h10M2 12h10M2 19h10" stroke="#666" stroke-width="1.600" fill="none"/><rect x="12" y="1.500" width="10" height="22" fill="#ff6a1a"/></svg>
<span class="t" style="left:128px;top:1560.8px;font-size:15px;line-height:20px;height:20px;color:#000;letter-spacing:0.238px;">Wände</span>
<div class="a" style="left:125.8px;top:1589px;width:17px;height:17px;background:#c8ffff;"></div>
<span class="t" style="left:151.5px;top:1587.8px;font-size:15px;line-height:20px;height:20px;color:#000;letter-spacing:0.165px;">1 - Z: 0.000 ... -14.750 m | 4 - R_M1 300/400</span>
<div class="a" style="left:125.8px;top:1616px;width:17px;height:17px;background:#f7c600;"></div>
<span class="t" style="left:151.5px;top:1614.8px;font-size:15px;line-height:20px;height:20px;color:#000;letter-spacing:0.165px;">2 - Z: 0.000 ... -17.500 m | 5 - R_M1 300/300</span>
<div class="a" style="left:125.8px;top:1643px;width:17px;height:17px;background:#ba6f6f;"></div>
<span class="t" style="left:151.5px;top:1641.8px;font-size:15px;line-height:20px;height:20px;color:#000;letter-spacing:0.165px;">3 - Z: 0.000 ... -17.500 m | 6 - R_M1 300/300</span>
<svg class="a" style="left:71px;top:1670.5px;width:12px;height:16px" viewBox="0 0 12 16"><path d="M3 2.500l6 5.500-6 5.500" fill="none" stroke="#777" stroke-width="1.400"/></svg>
<svg class="a" style="left:96px;top:1666.5px;width:24px;height:24px" viewBox="0 0 24 24"><path d="M2 1v23" stroke="#555" stroke-width="1.600"/><rect x="11" y="2" width="11" height="21" fill="#777"/><path d="M2 4h10M2 11.500h10M2 19h10" stroke="#ff6a1a" stroke-width="3"/></svg>
<span class="t" style="left:128px;top:1668.8px;font-size:15px;line-height:20px;height:20px;color:#000;letter-spacing:0.182px;">Wandartige Träger</span>
<svg class="a" style="left:41px;top:1697.5px;width:12px;height:16px" viewBox="0 0 12 16"><path d="M3 2.500l6 5.500-6 5.500" fill="none" stroke="#777" stroke-width="1.400"/></svg>
<svg class="a" style="left:66px;top:1693.5px;width:24px;height:24px" viewBox="0 0 24 24"><path d="M1.5 5.5a2 2 0 0 1 2-2h6l2.5 2.5h8.5a2 2 0 0 1 2 2V19a2 2 0 0 1-2 2h-17a2 2 0 0 1-2-2z" fill="#f5eba8" stroke="#c9b95a" stroke-width="1"/></svg>
<span class="t" style="left:98px;top:1695.8px;font-size:15px;line-height:20px;height:20px;color:#000;letter-spacing:0.209px;">Betonbemessung</span>
<svg class="a" style="left:41px;top:1724.5px;width:12px;height:16px" viewBox="0 0 12 16"><path d="M3 2.500l6 5.500-6 5.500" fill="none" stroke="#777" stroke-width="1.400"/></svg>
<svg class="a" style="left:66px;top:1720.5px;width:24px;height:24px" viewBox="0 0 24 24"><path d="M1.5 5.5a2 2 0 0 1 2-2h6l2.5 2.5h8.5a2 2 0 0 1 2 2V19a2 2 0 0 1-2 2h-17a2 2 0 0 1-2-2z" fill="#f5eba8" stroke="#c9b95a" stroke-width="1"/></svg>
<span class="t" style="left:98px;top:1722.8px;font-size:15px;line-height:20px;height:20px;color:#000;letter-spacing:0.207px;">Holzbemessung</span>
<svg class="a" style="left:66px;top:1747.5px;width:24px;height:24px" viewBox="0 0 24 24"><path d="M1.5 5.5a2 2 0 0 1 2-2h6l2.5 2.5h8.5a2 2 0 0 1 2 2V19a2 2 0 0 1-2 2h-17a2 2 0 0 1-2-2z" fill="#f5eba8" stroke="#c9b95a" stroke-width="1"/></svg>
<span class="t" style="left:98px;top:1749.8px;font-size:15px;line-height:20px;height:20px;color:#000;letter-spacing:0.177px;">Ausdruckprotokolle</span>
<div class="a" style="left:445px;top:178.5px;width:2px;height:1919px;background:#c9c9d9;"></div>
<div class="a" style="left:447px;top:147px;width:6px;height:1951px;background:#f8f8f8;"></div>
<!-- view -->
<svg class="a" style="left:453px;top:147px;width:3387px;height:1951px;overflow:hidden" viewBox="453 147 3387 1951">
<defs>
<linearGradient id="gf0" gradientUnits="userSpaceOnUse" x1="769.5" y1="717.0" x2="842.7" y2="440.5"><stop offset="0" stop-color="#dfe2e5"/><stop offset="0.06" stop-color="#f3f5f7"/><stop offset="0.2" stop-color="#eceef1"/><stop offset="0.36" stop-color="#d6d9dc"/><stop offset="0.6" stop-color="#cdd1d4"/><stop offset="1" stop-color="#c9cdd0"/></linearGradient>
<linearGradient id="go0" gradientUnits="userSpaceOnUse" x1="769.5" y1="717.0" x2="842.7" y2="440.5"><stop offset="0" stop-color="#b5661a"/><stop offset="0.16" stop-color="#b1641a"/><stop offset="0.3" stop-color="#9a5719"/><stop offset="1" stop-color="#9a5719"/></linearGradient>
<linearGradient id="gf1" gradientUnits="userSpaceOnUse" x1="769.5" y1="876.5" x2="842.7" y2="600.0"><stop offset="0" stop-color="#dfe2e5"/><stop offset="0.06" stop-color="#f3f5f7"/><stop offset="0.2" stop-color="#eceef1"/><stop offset="0.36" stop-color="#d6d9dc"/><stop offset="0.6" stop-color="#cdd1d4"/><stop offset="1" stop-color="#c9cdd0"/></linearGradient>
<linearGradient id="go1" gradientUnits="userSpaceOnUse" x1="769.5" y1="876.5" x2="842.7" y2="600.0"><stop offset="0" stop-color="#b5661a"/><stop offset="0.16" stop-color="#b1641a"/><stop offset="0.3" stop-color="#9a5719"/><stop offset="1" stop-color="#9a5719"/></linearGradient>
<linearGradient id="gf2" gradientUnits="userSpaceOnUse" x1="769.5" y1="1036.5" x2="842.7" y2="760.0"><stop offset="0" stop-color="#dfe2e5"/><stop offset="0.06" stop-color="#f3f5f7"/><stop offset="0.2" stop-color="#eceef1"/><stop offset="0.36" stop-color="#d6d9dc"/><stop offset="0.6" stop-color="#cdd1d4"/><stop offset="1" stop-color="#c9cdd0"/></linearGradient>
<linearGradient id="go2" gradientUnits="userSpaceOnUse" x1="769.5" y1="1036.5" x2="842.7" y2="760.0"><stop offset="0" stop-color="#b5661a"/><stop offset="0.16" stop-color="#b1641a"/><stop offset="0.3" stop-color="#9a5719"/><stop offset="1" stop-color="#9a5719"/></linearGradient>
<linearGradient id="gf3" gradientUnits="userSpaceOnUse" x1="769.5" y1="1211.0" x2="842.7" y2="934.5"><stop offset="0" stop-color="#dfe2e5"/><stop offset="0.06" stop-color="#f3f5f7"/><stop offset="0.2" stop-color="#eceef1"/><stop offset="0.36" stop-color="#d6d9dc"/><stop offset="0.6" stop-color="#cdd1d4"/><stop offset="1" stop-color="#c9cdd0"/></linearGradient>
<linearGradient id="go3" gradientUnits="userSpaceOnUse" x1="769.5" y1="1211.0" x2="842.7" y2="934.5"><stop offset="0" stop-color="#b5661a"/><stop offset="0.16" stop-color="#b1641a"/><stop offset="0.3" stop-color="#9a5719"/><stop offset="1" stop-color="#9a5719"/></linearGradient>
<linearGradient id="gf4" gradientUnits="userSpaceOnUse" x1="769.5" y1="1385.0" x2="842.7" y2="1108.5"><stop offset="0" stop-color="#dfe2e5"/><stop offset="0.06" stop-color="#f3f5f7"/><stop offset="0.2" stop-color="#eceef1"/><stop offset="0.36" stop-color="#d6d9dc"/><stop offset="0.6" stop-color="#cdd1d4"/><stop offset="1" stop-color="#c9cdd0"/></linearGradient>
<linearGradient id="go4" gradientUnits="userSpaceOnUse" x1="769.5" y1="1385.0" x2="842.7" y2="1108.5"><stop offset="0" stop-color="#b5661a"/><stop offset="0.16" stop-color="#b1641a"/><stop offset="0.3" stop-color="#9a5719"/><stop offset="1" stop-color="#9a5719"/></linearGradient>
<linearGradient id="gf5" gradientUnits="userSpaceOnUse" x1="769.5" y1="1559.0" x2="842.7" y2="1282.5"><stop offset="0" stop-color="#dfe2e5"/><stop offset="0.06" stop-color="#f3f5f7"/><stop offset="0.2" stop-color="#eceef1"/><stop offset="0.36" stop-color="#d6d9dc"/><stop offset="0.6" stop-color="#cdd1d4"/><stop offset="1" stop-color="#c9cdd0"/></linearGradient>
<linearGradient id="go5" gradientUnits="userSpaceOnUse" x1="769.5" y1="1559.0" x2="842.7" y2="1282.5"><stop offset="0" stop-color="#b5661a"/><stop offset="0.16" stop-color="#b1641a"/><stop offset="0.3" stop-color="#9a5719"/><stop offset="1" stop-color="#9a5719"/></linearGradient>
<linearGradient id="lroof" gradientUnits="userSpaceOnUse" x1="453" y1="0" x2="760" y2="0"><stop offset="0" stop-color="#f3850f"/><stop offset="0.35" stop-color="#e68018"/><stop offset="1" stop-color="#dc7a1a"/></linearGradient>
<linearGradient id="lsl1" gradientUnits="userSpaceOnUse" x1="453" y1="0" x2="760" y2="0"><stop offset="0" stop-color="#e8811a"/><stop offset="0.3" stop-color="#d0761a"/><stop offset="1" stop-color="#c66f18"/></linearGradient>
<linearGradient id="wallg" x1="0" y1="0" x2="1" y2="0"><stop offset="0" stop-color="#b4b4b4"/><stop offset="1" stop-color="#acaead"/></linearGradient>
<linearGradient id="rroof" gradientUnits="userSpaceOnUse" x1="1380" y1="0" x2="1460" y2="0"><stop offset="0" stop-color="#b5661a"/><stop offset="1" stop-color="#a85f1a"/></linearGradient>
</defs>
<rect x="453" y="147" width="3387" height="1951" fill="#1f1f1f"/>
<polygon points="707,390.5 3840,1207.6 3840,1376 2793,2098 453,2098 453,573.4" fill="#222222"/>
<path d="M453 573.4L707 390.5L3840 1207.6M3840 1376L2793 2098" stroke="#3a4246" stroke-width="1.1" fill="none"/>
<path d="M673.8 413.6L597 470M1258 534L1144.7 615.6" stroke="#3c4448" stroke-width="1" fill="none"/>
<path d="M485 604h1.3M519 580h1.3M552 556h1.3M585 532h1.3M619 508h1.3M652 484h1.3M686 460h1.3M719 436h1.3M752 412h1.3M474 667h1.3M507 643h1.3M540 619h1.3M574 595h1.3M607 571h1.3M640 547h1.3M674 522h1.3M707 498h1.3M741 474h1.3M774 450h1.3M808 426h1.3M462 730h1.3M495 706h1.3M529 681h1.3M562 657h1.3M595 633h1.3M629 609h1.3M662 585h1.3M696 561h1.3M729 537h1.3M762 513h1.3M796 489h1.3M829 465h1.3M863 441h1.3M484 768h1.3M517 744h1.3M550 720h1.3M584 696h1.3M617 672h1.3M650 648h1.3M684 624h1.3M717 600h1.3M751 576h1.3M784 552h1.3M818 528h1.3M851 504h1.3M884 479h1.3M918 455h1.3M472 831h1.3M505 807h1.3M539 783h1.3M572 759h1.3M605 735h1.3M639 711h1.3M672 687h1.3M706 663h1.3M739 638h1.3M772 614h1.3M806 590h1.3M839 566h1.3M873 542h1.3M906 518h1.3M939 494h1.3M973 470h1.3M460 894h1.3M493 870h1.3M527 846h1.3M560 822h1.3M594 798h1.3M627 773h1.3M660 749h1.3M694 725h1.3M727 701h1.3M761 677h1.3M794 653h1.3M827 629h1.3M861 605h1.3M894 581h1.3M928 557h1.3M961 533h1.3M994 509h1.3M1028 485h1.3M482 932h1.3M515 908h1.3M549 884h1.3M582 860h1.3M615 836h1.3M649 812h1.3M682 788h1.3M716 764h1.3M749 740h1.3M782 716h1.3M816 692h1.3M849 668h1.3M883 644h1.3M916 620h1.3M949 595h1.3M983 571h1.3M1016 547h1.3M1050 523h1.3M1083 499h1.3M470 995h1.3M503 971h1.3M537 947h1.3M570 923h1.3M604 899h1.3M637 875h1.3M670 851h1.3M704 827h1.3M737 803h1.3M771 779h1.3M804 754h1.3M837 730h1.3M871 706h1.3M904 682h1.3M938 658h1.3M971 634h1.3M1004 610h1.3M1038 586h1.3M1071 562h1.3M1105 538h1.3M1138 514h1.3M458 1058h1.3M492 1034h1.3M525 1010h1.3M559 986h1.3M592 962h1.3M625 938h1.3M659 914h1.3M692 889h1.3M726 865h1.3M759 841h1.3M792 817h1.3M826 793h1.3M859 769h1.3M893 745h1.3M926 721h1.3M959 697h1.3M993 673h1.3M1026 649h1.3M1060 625h1.3M1093 601h1.3M1126 577h1.3M1160 552h1.3M1193 528h1.3M480 1097h1.3M513 1073h1.3M547 1048h1.3M580 1024h1.3M614 1000h1.3M647 976h1.3M680 952h1.3M714 928h1.3M747 904h1.3M781 880h1.3M814 856h1.3M847 832h1.3M881 808h1.3M914 784h1.3M948 760h1.3M981 736h1.3M1014 711h1.3M1048 687h1.3M1081 663h1.3M1115 639h1.3M1148 615h1.3M1182 591h1.3M1215 567h1.3M1248 543h1.3M468 1159h1.3M502 1135h1.3M535 1111h1.3M569 1087h1.3M602 1063h1.3M635 1039h1.3M669 1015h1.3M702 991h1.3M736 967h1.3M769 943h1.3M802 919h1.3M836 895h1.3M869 871h1.3M903 846h1.3M936 822h1.3M969 798h1.3M1003 774h1.3M1036 750h1.3M1070 726h1.3M1103 702h1.3M1136 678h1.3M1170 654h1.3M1203 630h1.3M1237 606h1.3M1270 582h1.3M1303 558h1.3M457 1222h1.3M490 1198h1.3M524 1174h1.3M557 1150h1.3M590 1126h1.3M624 1102h1.3M657 1078h1.3M690 1054h1.3M724 1030h1.3M757 1005h1.3M791 981h1.3M824 957h1.3M858 933h1.3M891 909h1.3M924 885h1.3M958 861h1.3M991 837h1.3M1024 813h1.3M1058 789h1.3M1091 765h1.3M1125 741h1.3M1158 717h1.3M1192 693h1.3M1225 668h1.3M1258 644h1.3M1292 620h1.3M1325 596h1.3M1358 572h1.3M478 1261h1.3M512 1237h1.3M545 1213h1.3M579 1189h1.3M612 1164h1.3M645 1140h1.3M679 1116h1.3M712 1092h1.3M746 1068h1.3M779 1044h1.3M812 1020h1.3M846 996h1.3M879 972h1.3M913 948h1.3M946 924h1.3M979 900h1.3M1013 876h1.3M1046 852h1.3M1080 827h1.3M1113 803h1.3M1146 779h1.3M1180 755h1.3M1213 731h1.3M1247 707h1.3M1280 683h1.3M1313 659h1.3M1347 635h1.3M1380 611h1.3M1414 587h1.3M467 1324h1.3M500 1299h1.3M534 1275h1.3M567 1251h1.3M600 1227h1.3M634 1203h1.3M667 1179h1.3M700 1155h1.3M734 1131h1.3M767 1107h1.3M801 1083h1.3M834 1059h1.3M868 1035h1.3M901 1011h1.3M934 987h1.3M968 962h1.3M1001 938h1.3M1034 914h1.3M1068 890h1.3M1101 866h1.3M1135 842h1.3M1168 818h1.3M1202 794h1.3M1235 770h1.3M1268 746h1.3M1302 722h1.3M1335 698h1.3M1368 674h1.3M1402 650h1.3M1435 625h1.3M1469 601h1.3M455 1386h1.3M488 1362h1.3M522 1338h1.3M555 1314h1.3M589 1290h1.3M622 1266h1.3M655 1242h1.3M689 1218h1.3M722 1194h1.3M756 1170h1.3M789 1146h1.3M822 1121h1.3M856 1097h1.3M889 1073h1.3M923 1049h1.3M956 1025h1.3M989 1001h1.3M1023 977h1.3M1056 953h1.3M1090 929h1.3M1123 905h1.3M1156 881h1.3M1190 857h1.3M1223 833h1.3M1257 809h1.3M1290 784h1.3M1323 760h1.3M1357 736h1.3M1390 712h1.3M1424 688h1.3M1457 664h1.3M1490 640h1.3M1524 616h1.3M477 1425h1.3M510 1401h1.3M543 1377h1.3M577 1353h1.3M610 1329h1.3M644 1305h1.3M677 1280h1.3M710 1256h1.3M744 1232h1.3M777 1208h1.3M811 1184h1.3M844 1160h1.3M877 1136h1.3M911 1112h1.3M944 1088h1.3M978 1064h1.3M1011 1040h1.3M1044 1016h1.3M1078 992h1.3M1111 968h1.3M1145 944h1.3M1178 919h1.3M1211 895h1.3M1245 871h1.3M1278 847h1.3M1312 823h1.3M1345 799h1.3M1378 775h1.3M1412 751h1.3M1445 727h1.3M1479 703h1.3M1512 679h1.3M1545 655h1.3M1579 631h1.3M465 1488h1.3M498 1464h1.3M532 1440h1.3M565 1415h1.3M599 1391h1.3M632 1367h1.3M665 1343h1.3M699 1319h1.3M732 1295h1.3M766 1271h1.3M799 1247h1.3M832 1223h1.3M866 1199h1.3M899 1175h1.3M933 1151h1.3M966 1127h1.3M999 1103h1.3M1033 1078h1.3M1066 1054h1.3M1100 1030h1.3M1133 1006h1.3M1166 982h1.3M1200 958h1.3M1233 934h1.3M1267 910h1.3M1300 886h1.3M1333 862h1.3M1367 838h1.3M1400 814h1.3M1434 790h1.3M1467 766h1.3M1500 741h1.3M1534 717h1.3M1567 693h1.3M1601 669h1.3M1634 645h1.3M453 1550h1.3M487 1526h1.3M520 1502h1.3M553 1478h1.3M587 1454h1.3M620 1430h1.3M654 1406h1.3M687 1382h1.3M720 1358h1.3M754 1334h1.3M787 1310h1.3M821 1286h1.3M854 1262h1.3M887 1237h1.3M921 1213h1.3M954 1189h1.3M988 1165h1.3M1021 1141h1.3M1054 1117h1.3M1088 1093h1.3M1121 1069h1.3M1155 1045h1.3M1188 1021h1.3M1222 997h1.3M1255 973h1.3M1288 949h1.3M1322 925h1.3M1355 900h1.3M1388 876h1.3M1422 852h1.3M1455 828h1.3M1489 804h1.3M1522 780h1.3M1555 756h1.3M1589 732h1.3M1622 708h1.3M1656 684h1.3M1689 660h1.3M475 1589h1.3M508 1565h1.3M542 1541h1.3M575 1517h1.3M609 1493h1.3M642 1469h1.3M675 1445h1.3M709 1421h1.3M742 1396h1.3M776 1372h1.3M809 1348h1.3M842 1324h1.3M876 1300h1.3M909 1276h1.3M943 1252h1.3M976 1228h1.3M1009 1204h1.3M1043 1180h1.3M1076 1156h1.3M1110 1132h1.3M1143 1108h1.3M1176 1084h1.3M1210 1060h1.3M1243 1035h1.3M1277 1011h1.3M1310 987h1.3M1343 963h1.3M1377 939h1.3M1410 915h1.3M1444 891h1.3M1477 867h1.3M1510 843h1.3M1544 819h1.3M1577 795h1.3M1611 771h1.3M1644 747h1.3M1677 723h1.3M1711 698h1.3M1744 674h1.3M463 1652h1.3M497 1628h1.3M530 1604h1.3M564 1580h1.3M597 1556h1.3M630 1531h1.3M664 1507h1.3M697 1483h1.3M730 1459h1.3M764 1435h1.3M797 1411h1.3M831 1387h1.3M864 1363h1.3M898 1339h1.3M931 1315h1.3M964 1291h1.3M998 1267h1.3M1031 1243h1.3M1064 1219h1.3M1098 1194h1.3M1131 1170h1.3M1165 1146h1.3M1198 1122h1.3M1232 1098h1.3M1265 1074h1.3M1298 1050h1.3M1332 1026h1.3M1365 1002h1.3M1398 978h1.3M1432 954h1.3M1465 930h1.3M1499 906h1.3M1532 882h1.3M1566 857h1.3M1599 833h1.3M1632 809h1.3M1666 785h1.3M1699 761h1.3M1732 737h1.3M1766 713h1.3M1799 689h1.3M485 1690h1.3M518 1666h1.3M552 1642h1.3M585 1618h1.3M619 1594h1.3M652 1570h1.3M685 1546h1.3M719 1522h1.3M752 1498h1.3M786 1474h1.3M819 1450h1.3M852 1426h1.3M886 1402h1.3M919 1378h1.3M953 1353h1.3M986 1329h1.3M1019 1305h1.3M1053 1281h1.3M1086 1257h1.3M1120 1233h1.3M1153 1209h1.3M1186 1185h1.3M1220 1161h1.3M1253 1137h1.3M1287 1113h1.3M1320 1089h1.3M1353 1065h1.3M1387 1041h1.3M1420 1017h1.3M1454 992h1.3M1487 968h1.3M1520 944h1.3M1554 920h1.3M1587 896h1.3M1621 872h1.3M1654 848h1.3M1687 824h1.3M1721 800h1.3M1754 776h1.3M1788 752h1.3M1821 728h1.3M1854 704h1.3M473 1753h1.3M507 1729h1.3M540 1705h1.3M574 1681h1.3M607 1657h1.3M640 1633h1.3M674 1609h1.3M707 1585h1.3M740 1561h1.3M774 1537h1.3M807 1513h1.3M841 1488h1.3M874 1464h1.3M908 1440h1.3M941 1416h1.3M974 1392h1.3M1008 1368h1.3M1041 1344h1.3M1074 1320h1.3M1108 1296h1.3M1141 1272h1.3M1175 1248h1.3M1208 1224h1.3M1242 1200h1.3M1275 1176h1.3M1308 1151h1.3M1342 1127h1.3M1375 1103h1.3M1408 1079h1.3M1442 1055h1.3M1475 1031h1.3M1509 1007h1.3M1542 983h1.3M1576 959h1.3M1609 935h1.3M1642 911h1.3M1676 887h1.3M1709 863h1.3M1742 839h1.3M1776 814h1.3M1809 790h1.3M1843 766h1.3M1876 742h1.3M1910 718h1.3M462 1816h1.3M495 1792h1.3M528 1768h1.3M562 1744h1.3M595 1720h1.3M629 1696h1.3M662 1672h1.3M695 1647h1.3M729 1623h1.3M762 1599h1.3M796 1575h1.3M829 1551h1.3M862 1527h1.3M896 1503h1.3M929 1479h1.3M963 1455h1.3M996 1431h1.3M1029 1407h1.3M1063 1383h1.3M1096 1359h1.3M1130 1335h1.3M1163 1310h1.3M1196 1286h1.3M1230 1262h1.3M1263 1238h1.3M1297 1214h1.3M1330 1190h1.3M1363 1166h1.3M1397 1142h1.3M1430 1118h1.3M1464 1094h1.3M1497 1070h1.3M1530 1046h1.3M1564 1022h1.3M1597 998h1.3M1631 973h1.3M1664 949h1.3M1697 925h1.3M1731 901h1.3M1764 877h1.3M1798 853h1.3M1831 829h1.3M1864 805h1.3M1898 781h1.3M1931 757h1.3M1965 733h1.3M483 1855h1.3M517 1831h1.3M550 1806h1.3M584 1782h1.3M617 1758h1.3M650 1734h1.3M684 1710h1.3M717 1686h1.3M750 1662h1.3M784 1638h1.3M817 1614h1.3M851 1590h1.3M884 1566h1.3M917 1542h1.3M951 1518h1.3M984 1494h1.3M1018 1470h1.3M1051 1445h1.3M1084 1421h1.3M1118 1397h1.3M1151 1373h1.3M1185 1349h1.3M1218 1325h1.3M1252 1301h1.3M1285 1277h1.3M1318 1253h1.3M1352 1229h1.3M1385 1205h1.3M1418 1181h1.3M1452 1157h1.3M1485 1133h1.3M1519 1108h1.3M1552 1084h1.3M1586 1060h1.3M1619 1036h1.3M1652 1012h1.3M1686 988h1.3M1719 964h1.3M1752 940h1.3M1786 916h1.3M1819 892h1.3M1853 868h1.3M1886 844h1.3M1920 820h1.3M1953 796h1.3M1986 771h1.3M2020 747h1.3M472 1917h1.3M505 1893h1.3M538 1869h1.3M572 1845h1.3M605 1821h1.3M639 1797h1.3M672 1773h1.3M705 1749h1.3M739 1725h1.3M772 1701h1.3M806 1677h1.3M839 1653h1.3M872 1629h1.3M906 1604h1.3M939 1580h1.3M973 1556h1.3M1006 1532h1.3M1039 1508h1.3M1073 1484h1.3M1106 1460h1.3M1140 1436h1.3M1173 1412h1.3M1206 1388h1.3M1240 1364h1.3M1273 1340h1.3M1307 1316h1.3M1340 1292h1.3M1373 1267h1.3M1407 1243h1.3M1440 1219h1.3M1474 1195h1.3M1507 1171h1.3M1540 1147h1.3M1574 1123h1.3M1607 1099h1.3M1641 1075h1.3M1674 1051h1.3M1707 1027h1.3M1741 1003h1.3M1774 979h1.3M1808 955h1.3M1841 930h1.3M1874 906h1.3M1908 882h1.3M1941 858h1.3M1975 834h1.3M2008 810h1.3M2041 786h1.3M2075 762h1.3M460 1980h1.3M493 1956h1.3M527 1932h1.3M560 1908h1.3M594 1884h1.3M627 1860h1.3M660 1836h1.3M694 1812h1.3M727 1788h1.3M760 1763h1.3M794 1739h1.3M827 1715h1.3M861 1691h1.3M894 1667h1.3M928 1643h1.3M961 1619h1.3M994 1595h1.3M1028 1571h1.3M1061 1547h1.3M1094 1523h1.3M1128 1499h1.3M1161 1475h1.3M1195 1451h1.3M1228 1426h1.3M1262 1402h1.3M1295 1378h1.3M1328 1354h1.3M1362 1330h1.3M1395 1306h1.3M1428 1282h1.3M1462 1258h1.3M1495 1234h1.3M1529 1210h1.3M1562 1186h1.3M1596 1162h1.3M1629 1138h1.3M1662 1114h1.3M1696 1090h1.3M1729 1065h1.3M1762 1041h1.3M1796 1017h1.3M1829 993h1.3M1863 969h1.3M1896 945h1.3M1930 921h1.3M1963 897h1.3M1996 873h1.3M2030 849h1.3M2063 825h1.3M2096 801h1.3M2130 777h1.3M515 1995h1.3M548 1971h1.3M582 1947h1.3M615 1922h1.3M649 1898h1.3M682 1874h1.3M715 1850h1.3M749 1826h1.3M782 1802h1.3M816 1778h1.3M849 1754h1.3M882 1730h1.3M916 1706h1.3M949 1682h1.3M983 1658h1.3M1016 1634h1.3M1049 1610h1.3M1083 1586h1.3M1116 1561h1.3M1150 1537h1.3M1183 1513h1.3M1216 1489h1.3M1250 1465h1.3M1283 1441h1.3M1317 1417h1.3M1350 1393h1.3M1383 1369h1.3M1417 1345h1.3M1450 1321h1.3M1484 1297h1.3M1517 1273h1.3M1550 1249h1.3M1584 1224h1.3M1617 1200h1.3M1651 1176h1.3M1684 1152h1.3M1717 1128h1.3M1751 1104h1.3M1784 1080h1.3M1818 1056h1.3M1851 1032h1.3M1884 1008h1.3M1918 984h1.3M1951 960h1.3M1985 936h1.3M2018 912h1.3M2051 887h1.3M2085 863h1.3M2118 839h1.3M2152 815h1.3M2185 791h1.3M570 2009h1.3M604 1985h1.3M637 1961h1.3M670 1937h1.3M704 1913h1.3M737 1889h1.3M770 1865h1.3M804 1841h1.3M837 1817h1.3M871 1793h1.3M904 1769h1.3M937 1745h1.3M971 1720h1.3M1004 1696h1.3M1038 1672h1.3M1071 1648h1.3M1104 1624h1.3M1138 1600h1.3M1171 1576h1.3M1205 1552h1.3M1238 1528h1.3M1272 1504h1.3M1305 1480h1.3M1338 1456h1.3M1372 1432h1.3M1405 1408h1.3M1438 1383h1.3M1472 1359h1.3M1505 1335h1.3M1539 1311h1.3M1572 1287h1.3M1606 1263h1.3M1639 1239h1.3M1672 1215h1.3M1706 1191h1.3M1739 1167h1.3M1772 1143h1.3M1806 1119h1.3M1839 1095h1.3M1873 1071h1.3M1906 1046h1.3M1939 1022h1.3M1973 998h1.3M2006 974h1.3M2040 950h1.3M2073 926h1.3M2106 902h1.3M2140 878h1.3M2173 854h1.3M2207 830h1.3M2240 806h1.3M625 2024h1.3M659 2000h1.3M692 1976h1.3M725 1952h1.3M759 1928h1.3M792 1904h1.3M826 1879h1.3M859 1855h1.3M892 1831h1.3M926 1807h1.3M959 1783h1.3M993 1759h1.3M1026 1735h1.3M1059 1711h1.3M1093 1687h1.3M1126 1663h1.3M1160 1639h1.3M1193 1615h1.3M1226 1591h1.3M1260 1567h1.3M1293 1542h1.3M1327 1518h1.3M1360 1494h1.3M1393 1470h1.3M1427 1446h1.3M1460 1422h1.3M1494 1398h1.3M1527 1374h1.3M1560 1350h1.3M1594 1326h1.3M1627 1302h1.3M1661 1278h1.3M1694 1254h1.3M1727 1230h1.3M1761 1206h1.3M1794 1181h1.3M1828 1157h1.3M1861 1133h1.3M1894 1109h1.3M1928 1085h1.3M1961 1061h1.3M1995 1037h1.3M2028 1013h1.3M2061 989h1.3M2095 965h1.3M2128 941h1.3M2162 917h1.3M2195 893h1.3M2228 869h1.3M2262 844h1.3M2295 820h1.3M680 2038h1.3M714 2014h1.3M747 1990h1.3M780 1966h1.3M814 1942h1.3M847 1918h1.3M881 1894h1.3M914 1870h1.3M948 1846h1.3M981 1822h1.3M1014 1798h1.3M1048 1774h1.3M1081 1750h1.3M1114 1726h1.3M1148 1702h1.3M1181 1677h1.3M1215 1653h1.3M1248 1629h1.3M1282 1605h1.3M1315 1581h1.3M1348 1557h1.3M1382 1533h1.3M1415 1509h1.3M1448 1485h1.3M1482 1461h1.3M1515 1437h1.3M1549 1413h1.3M1582 1389h1.3M1616 1365h1.3M1649 1340h1.3M1682 1316h1.3M1716 1292h1.3M1749 1268h1.3M1782 1244h1.3M1816 1220h1.3M1849 1196h1.3M1883 1172h1.3M1916 1148h1.3M1950 1124h1.3M1983 1100h1.3M2016 1076h1.3M2050 1052h1.3M2083 1028h1.3M2116 1003h1.3M2150 979h1.3M2183 955h1.3M2217 931h1.3M2250 907h1.3M2284 883h1.3M2317 859h1.3M2350 835h1.3M735 2053h1.3M769 2029h1.3M802 2005h1.3M836 1981h1.3M869 1957h1.3M902 1933h1.3M936 1909h1.3M969 1885h1.3M1003 1861h1.3M1036 1836h1.3M1069 1812h1.3M1103 1788h1.3M1136 1764h1.3M1170 1740h1.3M1203 1716h1.3M1236 1692h1.3M1270 1668h1.3M1303 1644h1.3M1337 1620h1.3M1370 1596h1.3M1403 1572h1.3M1437 1548h1.3M1470 1524h1.3M1504 1499h1.3M1537 1475h1.3M1570 1451h1.3M1604 1427h1.3M1637 1403h1.3M1671 1379h1.3M1704 1355h1.3M1737 1331h1.3M1771 1307h1.3M1804 1283h1.3M1838 1259h1.3M1871 1235h1.3M1904 1211h1.3M1938 1187h1.3M1971 1163h1.3M2005 1138h1.3M2038 1114h1.3M2071 1090h1.3M2105 1066h1.3M2138 1042h1.3M2172 1018h1.3M2205 994h1.3M2238 970h1.3M2272 946h1.3M2305 922h1.3M2339 898h1.3M2372 874h1.3M2405 850h1.3M790 2068h1.3M824 2044h1.3M857 2020h1.3M891 1995h1.3M924 1971h1.3M958 1947h1.3M991 1923h1.3M1024 1899h1.3M1058 1875h1.3M1091 1851h1.3M1124 1827h1.3M1158 1803h1.3M1191 1779h1.3M1225 1755h1.3M1258 1731h1.3M1292 1707h1.3M1325 1683h1.3M1358 1659h1.3M1392 1634h1.3M1425 1610h1.3M1458 1586h1.3M1492 1562h1.3M1525 1538h1.3M1559 1514h1.3M1592 1490h1.3M1626 1466h1.3M1659 1442h1.3M1692 1418h1.3M1726 1394h1.3M1759 1370h1.3M1792 1346h1.3M1826 1322h1.3M1859 1297h1.3M1893 1273h1.3M1926 1249h1.3M1960 1225h1.3M1993 1201h1.3M2026 1177h1.3M2060 1153h1.3M2093 1129h1.3M2126 1105h1.3M2160 1081h1.3M2193 1057h1.3M2227 1033h1.3M2260 1009h1.3M2294 985h1.3M2327 960h1.3M2360 936h1.3M2394 912h1.3M2427 888h1.3M2460 864h1.3M846 2082h1.3M879 2058h1.3M912 2034h1.3M946 2010h1.3M979 1986h1.3M1013 1962h1.3M1046 1938h1.3M1079 1914h1.3M1113 1890h1.3M1146 1866h1.3M1180 1842h1.3M1213 1818h1.3M1246 1793h1.3M1280 1769h1.3M1313 1745h1.3M1347 1721h1.3M1380 1697h1.3M1413 1673h1.3M1447 1649h1.3M1480 1625h1.3M1514 1601h1.3M1547 1577h1.3M1580 1553h1.3M1614 1529h1.3M1647 1505h1.3M1681 1481h1.3M1714 1456h1.3M1747 1432h1.3M1781 1408h1.3M1814 1384h1.3M1848 1360h1.3M1881 1336h1.3M1914 1312h1.3M1948 1288h1.3M1981 1264h1.3M2015 1240h1.3M2048 1216h1.3M2081 1192h1.3M2115 1168h1.3M2148 1144h1.3M2182 1120h1.3M2215 1095h1.3M2248 1071h1.3M2282 1047h1.3M2315 1023h1.3M2349 999h1.3M2382 975h1.3M2415 951h1.3M2449 927h1.3M2482 903h1.3M2516 879h1.3M901 2097h1.3M934 2073h1.3M968 2049h1.3M1001 2025h1.3M1034 2001h1.3M1068 1977h1.3M1101 1952h1.3M1134 1928h1.3M1168 1904h1.3M1201 1880h1.3M1235 1856h1.3M1268 1832h1.3M1302 1808h1.3M1335 1784h1.3M1368 1760h1.3M1402 1736h1.3M1435 1712h1.3M1468 1688h1.3M1502 1664h1.3M1535 1640h1.3M1569 1616h1.3M1602 1591h1.3M1636 1567h1.3M1669 1543h1.3M1702 1519h1.3M1736 1495h1.3M1769 1471h1.3M1802 1447h1.3M1836 1423h1.3M1869 1399h1.3M1903 1375h1.3M1936 1351h1.3M1970 1327h1.3M2003 1303h1.3M2036 1279h1.3M2070 1254h1.3M2103 1230h1.3M2136 1206h1.3M2170 1182h1.3M2203 1158h1.3M2237 1134h1.3M2270 1110h1.3M2304 1086h1.3M2337 1062h1.3M2370 1038h1.3M2404 1014h1.3M2437 990h1.3M2470 966h1.3M2504 942h1.3M2537 917h1.3M2571 893h1.3M989 2087h1.3M1023 2063h1.3M1056 2039h1.3M1089 2015h1.3M1123 1991h1.3M1156 1967h1.3M1190 1943h1.3M1223 1919h1.3M1256 1895h1.3M1290 1871h1.3M1323 1847h1.3M1357 1823h1.3M1390 1799h1.3M1423 1775h1.3M1457 1750h1.3M1490 1726h1.3M1524 1702h1.3M1557 1678h1.3M1590 1654h1.3M1624 1630h1.3M1657 1606h1.3M1691 1582h1.3M1724 1558h1.3M1757 1534h1.3M1791 1510h1.3M1824 1486h1.3M1858 1462h1.3M1891 1438h1.3M1924 1413h1.3M1958 1389h1.3M1991 1365h1.3M2025 1341h1.3M2058 1317h1.3M2091 1293h1.3M2125 1269h1.3M2158 1245h1.3M2192 1221h1.3M2225 1197h1.3M2258 1173h1.3M2292 1149h1.3M2325 1125h1.3M2359 1101h1.3M2392 1076h1.3M2425 1052h1.3M2459 1028h1.3M2492 1004h1.3M2526 980h1.3M2559 956h1.3M2592 932h1.3M2626 908h1.3M1078 2078h1.3M1111 2054h1.3M1144 2030h1.3M1178 2006h1.3M1211 1982h1.3M1245 1958h1.3M1278 1934h1.3M1312 1909h1.3M1345 1885h1.3M1378 1861h1.3M1412 1837h1.3M1445 1813h1.3M1478 1789h1.3M1512 1765h1.3M1545 1741h1.3M1579 1717h1.3M1612 1693h1.3M1646 1669h1.3M1679 1645h1.3M1712 1621h1.3M1746 1597h1.3M1779 1572h1.3M1812 1548h1.3M1846 1524h1.3M1879 1500h1.3M1913 1476h1.3M1946 1452h1.3M1980 1428h1.3M2013 1404h1.3M2046 1380h1.3M2080 1356h1.3M2113 1332h1.3M2146 1308h1.3M2180 1284h1.3M2213 1260h1.3M2247 1236h1.3M2280 1211h1.3M2314 1187h1.3M2347 1163h1.3M2380 1139h1.3M2414 1115h1.3M2447 1091h1.3M2480 1067h1.3M2514 1043h1.3M2547 1019h1.3M2581 995h1.3M2614 971h1.3M2648 947h1.3M2681 923h1.3M1133 2093h1.3M1166 2068h1.3M1200 2044h1.3M1233 2020h1.3M1266 1996h1.3M1300 1972h1.3M1333 1948h1.3M1367 1924h1.3M1400 1900h1.3M1433 1876h1.3M1467 1852h1.3M1500 1828h1.3M1534 1804h1.3M1567 1780h1.3M1600 1756h1.3M1634 1732h1.3M1667 1707h1.3M1701 1683h1.3M1734 1659h1.3M1767 1635h1.3M1801 1611h1.3M1834 1587h1.3M1868 1563h1.3M1901 1539h1.3M1934 1515h1.3M1968 1491h1.3M2001 1467h1.3M2035 1443h1.3M2068 1419h1.3M2101 1395h1.3M2135 1370h1.3M2168 1346h1.3M2202 1322h1.3M2235 1298h1.3M2268 1274h1.3M2302 1250h1.3M2335 1226h1.3M2369 1202h1.3M2402 1178h1.3M2435 1154h1.3M2469 1130h1.3M2502 1106h1.3M2536 1082h1.3M2569 1058h1.3M2602 1033h1.3M2636 1009h1.3M2669 985h1.3M2703 961h1.3M2736 937h1.3M1221 2083h1.3M1255 2059h1.3M1288 2035h1.3M1322 2011h1.3M1355 1987h1.3M1388 1963h1.3M1422 1939h1.3M1455 1915h1.3M1488 1891h1.3M1522 1866h1.3M1555 1842h1.3M1589 1818h1.3M1622 1794h1.3M1656 1770h1.3M1689 1746h1.3M1722 1722h1.3M1756 1698h1.3M1789 1674h1.3M1822 1650h1.3M1856 1626h1.3M1889 1602h1.3M1923 1578h1.3M1956 1554h1.3M1990 1529h1.3M2023 1505h1.3M2056 1481h1.3M2090 1457h1.3M2123 1433h1.3M2156 1409h1.3M2190 1385h1.3M2223 1361h1.3M2257 1337h1.3M2290 1313h1.3M2324 1289h1.3M2357 1265h1.3M2390 1241h1.3M2424 1217h1.3M2457 1192h1.3M2490 1168h1.3M2524 1144h1.3M2557 1120h1.3M2591 1096h1.3M2624 1072h1.3M2658 1048h1.3M2691 1024h1.3M2724 1000h1.3M2758 976h1.3M2791 952h1.3M1276 2098h1.3M1310 2074h1.3M1343 2050h1.3M1377 2025h1.3M1410 2001h1.3M1443 1977h1.3M1477 1953h1.3M1510 1929h1.3M1544 1905h1.3M1577 1881h1.3M1610 1857h1.3M1644 1833h1.3M1677 1809h1.3M1711 1785h1.3M1744 1761h1.3M1777 1737h1.3M1811 1713h1.3M1844 1688h1.3M1878 1664h1.3M1911 1640h1.3M1944 1616h1.3M1978 1592h1.3M2011 1568h1.3M2045 1544h1.3M2078 1520h1.3M2111 1496h1.3M2145 1472h1.3M2178 1448h1.3M2212 1424h1.3M2245 1400h1.3M2278 1376h1.3M2312 1352h1.3M2345 1327h1.3M2379 1303h1.3M2412 1279h1.3M2445 1255h1.3M2479 1231h1.3M2512 1207h1.3M2546 1183h1.3M2579 1159h1.3M2612 1135h1.3M2646 1111h1.3M2679 1087h1.3M2713 1063h1.3M2746 1039h1.3M2779 1015h1.3M2813 990h1.3M2846 966h1.3M1365 2088h1.3M1398 2064h1.3M1432 2040h1.3M1465 2016h1.3M1498 1992h1.3M1532 1968h1.3M1565 1944h1.3M1599 1920h1.3M1632 1896h1.3M1666 1872h1.3M1699 1848h1.3M1732 1823h1.3M1766 1799h1.3M1799 1775h1.3M1832 1751h1.3M1866 1727h1.3M1899 1703h1.3M1933 1679h1.3M1966 1655h1.3M2000 1631h1.3M2033 1607h1.3M2066 1583h1.3M2100 1559h1.3M2133 1535h1.3M2166 1511h1.3M2200 1486h1.3M2233 1462h1.3M2267 1438h1.3M2300 1414h1.3M2334 1390h1.3M2367 1366h1.3M2400 1342h1.3M2434 1318h1.3M2467 1294h1.3M2500 1270h1.3M2534 1246h1.3M2567 1222h1.3M2601 1198h1.3M2634 1174h1.3M2668 1149h1.3M2701 1125h1.3M2734 1101h1.3M2768 1077h1.3M2801 1053h1.3M2834 1029h1.3M2868 1005h1.3M2901 981h1.3M1453 2079h1.3M1487 2055h1.3M1520 2031h1.3M1554 2007h1.3M1587 1982h1.3M1620 1958h1.3M1654 1934h1.3M1687 1910h1.3M1721 1886h1.3M1754 1862h1.3M1787 1838h1.3M1821 1814h1.3M1854 1790h1.3M1888 1766h1.3M1921 1742h1.3M1954 1718h1.3M1988 1694h1.3M2021 1670h1.3M2055 1645h1.3M2088 1621h1.3M2121 1597h1.3M2155 1573h1.3M2188 1549h1.3M2222 1525h1.3M2255 1501h1.3M2288 1477h1.3M2322 1453h1.3M2355 1429h1.3M2389 1405h1.3M2422 1381h1.3M2455 1357h1.3M2489 1333h1.3M2522 1309h1.3M2556 1284h1.3M2589 1260h1.3M2622 1236h1.3M2656 1212h1.3M2689 1188h1.3M2723 1164h1.3M2756 1140h1.3M2789 1116h1.3M2823 1092h1.3M2856 1068h1.3M2890 1044h1.3M2923 1020h1.3M2956 996h1.3M1508 2093h1.3M1542 2069h1.3M1575 2045h1.3M1609 2021h1.3M1642 1997h1.3M1676 1973h1.3M1709 1949h1.3M1742 1925h1.3M1776 1901h1.3M1809 1877h1.3M1842 1853h1.3M1876 1829h1.3M1909 1805h1.3M1943 1780h1.3M1976 1756h1.3M2010 1732h1.3M2043 1708h1.3M2076 1684h1.3M2110 1660h1.3M2143 1636h1.3M2176 1612h1.3M2210 1588h1.3M2243 1564h1.3M2277 1540h1.3M2310 1516h1.3M2344 1492h1.3M2377 1468h1.3M2410 1443h1.3M2444 1419h1.3M2477 1395h1.3M2510 1371h1.3M2544 1347h1.3M2577 1323h1.3M2611 1299h1.3M2644 1275h1.3M2678 1251h1.3M2711 1227h1.3M2744 1203h1.3M2778 1179h1.3M2811 1155h1.3M2844 1131h1.3M2878 1106h1.3M2911 1082h1.3M2945 1058h1.3M2978 1034h1.3M3012 1010h1.3M1597 2084h1.3M1630 2060h1.3M1664 2036h1.3M1697 2012h1.3M1731 1988h1.3M1764 1964h1.3M1797 1939h1.3M1831 1915h1.3M1864 1891h1.3M1898 1867h1.3M1931 1843h1.3M1964 1819h1.3M1998 1795h1.3M2031 1771h1.3M2065 1747h1.3M2098 1723h1.3M2131 1699h1.3M2165 1675h1.3M2198 1651h1.3M2232 1627h1.3M2265 1602h1.3M2298 1578h1.3M2332 1554h1.3M2365 1530h1.3M2399 1506h1.3M2432 1482h1.3M2465 1458h1.3M2499 1434h1.3M2532 1410h1.3M2566 1386h1.3M2599 1362h1.3M2632 1338h1.3M2666 1314h1.3M2699 1290h1.3M2733 1266h1.3M2766 1241h1.3M2799 1217h1.3M2833 1193h1.3M2866 1169h1.3M2900 1145h1.3M2933 1121h1.3M2966 1097h1.3M3000 1073h1.3M3033 1049h1.3M3067 1025h1.3M1686 2074h1.3M1719 2050h1.3M1752 2026h1.3M1786 2002h1.3M1819 1978h1.3M1852 1954h1.3M1886 1930h1.3M1919 1906h1.3M1953 1882h1.3M1986 1858h1.3M2020 1834h1.3M2053 1810h1.3M2086 1786h1.3M2120 1762h1.3M2153 1737h1.3M2186 1713h1.3M2220 1689h1.3M2253 1665h1.3M2287 1641h1.3M2320 1617h1.3M2354 1593h1.3M2387 1569h1.3M2420 1545h1.3M2454 1521h1.3M2487 1497h1.3M2520 1473h1.3M2554 1449h1.3M2587 1425h1.3M2621 1400h1.3M2654 1376h1.3M2688 1352h1.3M2721 1328h1.3M2754 1304h1.3M2788 1280h1.3M2821 1256h1.3M2854 1232h1.3M2888 1208h1.3M2921 1184h1.3M2955 1160h1.3M2988 1136h1.3M3022 1112h1.3M3055 1088h1.3M3088 1063h1.3M3122 1039h1.3M1741 2089h1.3M1774 2065h1.3M1807 2041h1.3M1841 2017h1.3M1874 1993h1.3M1908 1969h1.3M1941 1945h1.3M1974 1921h1.3M2008 1896h1.3M2041 1872h1.3M2075 1848h1.3M2108 1824h1.3M2141 1800h1.3M2175 1776h1.3M2208 1752h1.3M2242 1728h1.3M2275 1704h1.3M2308 1680h1.3M2342 1656h1.3M2375 1632h1.3M2409 1608h1.3M2442 1584h1.3M2475 1559h1.3M2509 1535h1.3M2542 1511h1.3M2576 1487h1.3M2609 1463h1.3M2642 1439h1.3M2676 1415h1.3M2709 1391h1.3M2743 1367h1.3M2776 1343h1.3M2809 1319h1.3M2843 1295h1.3M2876 1271h1.3M2910 1247h1.3M2943 1222h1.3M2976 1198h1.3M3010 1174h1.3M3043 1150h1.3M3077 1126h1.3M3110 1102h1.3M3143 1078h1.3M3177 1054h1.3M1829 2080h1.3M1862 2055h1.3M1896 2031h1.3M1929 2007h1.3M1963 1983h1.3M1996 1959h1.3M2030 1935h1.3M2063 1911h1.3M2096 1887h1.3M2130 1863h1.3M2163 1839h1.3M2196 1815h1.3M2230 1791h1.3M2263 1767h1.3M2297 1743h1.3M2330 1718h1.3M2364 1694h1.3M2397 1670h1.3M2430 1646h1.3M2464 1622h1.3M2497 1598h1.3M2530 1574h1.3M2564 1550h1.3M2597 1526h1.3M2631 1502h1.3M2664 1478h1.3M2698 1454h1.3M2731 1430h1.3M2764 1406h1.3M2798 1382h1.3M2831 1357h1.3M2864 1333h1.3M2898 1309h1.3M2931 1285h1.3M2965 1261h1.3M2998 1237h1.3M3032 1213h1.3M3065 1189h1.3M3098 1165h1.3M3132 1141h1.3M3165 1117h1.3M3198 1093h1.3M3232 1069h1.3M1884 2094h1.3M1918 2070h1.3M1951 2046h1.3M1984 2022h1.3M2018 1998h1.3M2051 1974h1.3M2085 1950h1.3M2118 1926h1.3M2151 1902h1.3M2185 1878h1.3M2218 1853h1.3M2252 1829h1.3M2285 1805h1.3M2318 1781h1.3M2352 1757h1.3M2385 1733h1.3M2419 1709h1.3M2452 1685h1.3M2485 1661h1.3M2519 1637h1.3M2552 1613h1.3M2586 1589h1.3M2619 1565h1.3M2652 1541h1.3M2686 1516h1.3M2719 1492h1.3M2753 1468h1.3M2786 1444h1.3M2819 1420h1.3M2853 1396h1.3M2886 1372h1.3M2920 1348h1.3M2953 1324h1.3M2986 1300h1.3M3020 1276h1.3M3053 1252h1.3M3087 1228h1.3M3120 1204h1.3M3153 1179h1.3M3187 1155h1.3M3220 1131h1.3M3254 1107h1.3M3287 1083h1.3M1973 2085h1.3M2006 2061h1.3M2040 2037h1.3M2073 2012h1.3M2106 1988h1.3M2140 1964h1.3M2173 1940h1.3M2206 1916h1.3M2240 1892h1.3M2273 1868h1.3M2307 1844h1.3M2340 1820h1.3M2374 1796h1.3M2407 1772h1.3M2440 1748h1.3M2474 1724h1.3M2507 1700h1.3M2540 1675h1.3M2574 1651h1.3M2607 1627h1.3M2641 1603h1.3M2674 1579h1.3M2708 1555h1.3M2741 1531h1.3M2774 1507h1.3M2808 1483h1.3M2841 1459h1.3M2874 1435h1.3M2908 1411h1.3M2941 1387h1.3M2975 1363h1.3M3008 1338h1.3M3042 1314h1.3M3075 1290h1.3M3108 1266h1.3M3142 1242h1.3M3175 1218h1.3M3208 1194h1.3M3242 1170h1.3M3275 1146h1.3M3309 1122h1.3M3342 1098h1.3M2061 2075h1.3M2095 2051h1.3M2128 2027h1.3M2161 2003h1.3M2195 1979h1.3M2228 1955h1.3M2262 1931h1.3M2295 1907h1.3M2328 1883h1.3M2362 1859h1.3M2395 1834h1.3M2429 1810h1.3M2462 1786h1.3M2495 1762h1.3M2529 1738h1.3M2562 1714h1.3M2596 1690h1.3M2629 1666h1.3M2662 1642h1.3M2696 1618h1.3M2729 1594h1.3M2763 1570h1.3M2796 1546h1.3M2829 1522h1.3M2863 1498h1.3M2896 1473h1.3M2930 1449h1.3M2963 1425h1.3M2996 1401h1.3M3030 1377h1.3M3063 1353h1.3M3097 1329h1.3M3130 1305h1.3M3163 1281h1.3M3197 1257h1.3M3230 1233h1.3M3264 1209h1.3M3297 1185h1.3M3330 1161h1.3M3364 1136h1.3M3397 1112h1.3M2116 2090h1.3M2150 2066h1.3M2183 2042h1.3M2216 2018h1.3M2250 1994h1.3M2283 1969h1.3M2317 1945h1.3M2350 1921h1.3M2384 1897h1.3M2417 1873h1.3M2450 1849h1.3M2484 1825h1.3M2517 1801h1.3M2550 1777h1.3M2584 1753h1.3M2617 1729h1.3M2651 1705h1.3M2684 1681h1.3M2718 1657h1.3M2751 1632h1.3M2784 1608h1.3M2818 1584h1.3M2851 1560h1.3M2884 1536h1.3M2918 1512h1.3M2951 1488h1.3M2985 1464h1.3M3018 1440h1.3M3052 1416h1.3M3085 1392h1.3M3118 1368h1.3M3152 1344h1.3M3185 1320h1.3M3218 1295h1.3M3252 1271h1.3M3285 1247h1.3M3319 1223h1.3M3352 1199h1.3M3386 1175h1.3M3419 1151h1.3M3452 1127h1.3M2205 2080h1.3M2238 2056h1.3M2272 2032h1.3M2305 2008h1.3M2338 1984h1.3M2372 1960h1.3M2405 1936h1.3M2439 1912h1.3M2472 1888h1.3M2505 1864h1.3M2539 1840h1.3M2572 1816h1.3M2606 1791h1.3M2639 1767h1.3M2672 1743h1.3M2706 1719h1.3M2739 1695h1.3M2773 1671h1.3M2806 1647h1.3M2839 1623h1.3M2873 1599h1.3M2906 1575h1.3M2940 1551h1.3M2973 1527h1.3M3006 1503h1.3M3040 1479h1.3M3073 1455h1.3M3107 1430h1.3M3140 1406h1.3M3173 1382h1.3M3207 1358h1.3M3240 1334h1.3M3274 1310h1.3M3307 1286h1.3M3340 1262h1.3M3374 1238h1.3M3407 1214h1.3M3441 1190h1.3M3474 1166h1.3M3507 1142h1.3M2260 2095h1.3M2293 2071h1.3M2327 2047h1.3M2360 2023h1.3M2394 1999h1.3M2427 1975h1.3M2460 1951h1.3M2494 1926h1.3M2527 1902h1.3M2560 1878h1.3M2594 1854h1.3M2627 1830h1.3M2661 1806h1.3M2694 1782h1.3M2728 1758h1.3M2761 1734h1.3M2794 1710h1.3M2828 1686h1.3M2861 1662h1.3M2894 1638h1.3M2928 1614h1.3M2961 1589h1.3M2995 1565h1.3M3028 1541h1.3M3062 1517h1.3M3095 1493h1.3M3128 1469h1.3M3162 1445h1.3M3195 1421h1.3M3228 1397h1.3M3262 1373h1.3M3295 1349h1.3M3329 1325h1.3M3362 1301h1.3M3396 1277h1.3M3429 1252h1.3M3462 1228h1.3M3496 1204h1.3M3529 1180h1.3M3562 1156h1.3M2348 2085h1.3M2382 2061h1.3M2415 2037h1.3M2449 2013h1.3M2482 1989h1.3M2515 1965h1.3M2549 1941h1.3M2582 1917h1.3M2616 1893h1.3M2649 1869h1.3M2682 1845h1.3M2716 1821h1.3M2749 1797h1.3M2783 1773h1.3M2816 1748h1.3M2849 1724h1.3M2883 1700h1.3M2916 1676h1.3M2950 1652h1.3M2983 1628h1.3M3016 1604h1.3M3050 1580h1.3M3083 1556h1.3M3117 1532h1.3M3150 1508h1.3M3183 1484h1.3M3217 1460h1.3M3250 1436h1.3M3284 1412h1.3M3317 1387h1.3M3350 1363h1.3M3384 1339h1.3M3417 1315h1.3M3451 1291h1.3M3484 1267h1.3M3517 1243h1.3M3551 1219h1.3M3584 1195h1.3M3618 1171h1.3M2437 2076h1.3M2470 2052h1.3M2504 2028h1.3M2537 2004h1.3M2570 1980h1.3M2604 1956h1.3M2637 1932h1.3M2671 1907h1.3M2704 1883h1.3M2738 1859h1.3M2771 1835h1.3M2804 1811h1.3M2838 1787h1.3M2871 1763h1.3M2904 1739h1.3M2938 1715h1.3M2971 1691h1.3M3005 1667h1.3M3038 1643h1.3M3072 1619h1.3M3105 1595h1.3M3138 1571h1.3M3172 1546h1.3M3205 1522h1.3M3238 1498h1.3M3272 1474h1.3M3305 1450h1.3M3339 1426h1.3M3372 1402h1.3M3406 1378h1.3M3439 1354h1.3M3472 1330h1.3M3506 1306h1.3M3539 1282h1.3M3572 1258h1.3M3606 1234h1.3M3639 1209h1.3M3673 1185h1.3M2492 2091h1.3M2525 2067h1.3M2559 2042h1.3M2592 2018h1.3M2626 1994h1.3M2659 1970h1.3M2692 1946h1.3M2726 1922h1.3M2759 1898h1.3M2793 1874h1.3M2826 1850h1.3M2859 1826h1.3M2893 1802h1.3M2926 1778h1.3M2960 1754h1.3M2993 1730h1.3M3026 1705h1.3M3060 1681h1.3M3093 1657h1.3M3127 1633h1.3M3160 1609h1.3M3193 1585h1.3M3227 1561h1.3M3260 1537h1.3M3294 1513h1.3M3327 1489h1.3M3360 1465h1.3M3394 1441h1.3M3427 1417h1.3M3461 1393h1.3M3494 1368h1.3M3527 1344h1.3M3561 1320h1.3M3594 1296h1.3M3628 1272h1.3M3661 1248h1.3M3694 1224h1.3M3728 1200h1.3M2580 2081h1.3M2614 2057h1.3M2647 2033h1.3M2681 2009h1.3M2714 1985h1.3M2748 1961h1.3M2781 1937h1.3M2814 1913h1.3M2848 1889h1.3M2881 1864h1.3M2914 1840h1.3M2948 1816h1.3M2981 1792h1.3M3015 1768h1.3M3048 1744h1.3M3082 1720h1.3M3115 1696h1.3M3148 1672h1.3M3182 1648h1.3M3215 1624h1.3M3248 1600h1.3M3282 1576h1.3M3315 1552h1.3M3349 1528h1.3M3382 1503h1.3M3416 1479h1.3M3449 1455h1.3M3482 1431h1.3M3516 1407h1.3M3549 1383h1.3M3582 1359h1.3M3616 1335h1.3M3649 1311h1.3M3683 1287h1.3M3716 1263h1.3M3750 1239h1.3M3783 1215h1.3M2636 2096h1.3M2669 2072h1.3M2702 2048h1.3M2736 2024h1.3M2769 1999h1.3M2803 1975h1.3M2836 1951h1.3M2869 1927h1.3M2903 1903h1.3M2936 1879h1.3M2970 1855h1.3M3003 1831h1.3M3036 1807h1.3M3070 1783h1.3M3103 1759h1.3M3137 1735h1.3M3170 1711h1.3M3203 1687h1.3M3237 1662h1.3M3270 1638h1.3M3304 1614h1.3M3337 1590h1.3M3370 1566h1.3M3404 1542h1.3M3437 1518h1.3M3471 1494h1.3M3504 1470h1.3M3537 1446h1.3M3571 1422h1.3M3604 1398h1.3M3638 1374h1.3M3671 1350h1.3M3704 1325h1.3M3738 1301h1.3M3771 1277h1.3M3805 1253h1.3M3838 1229h1.3M2724 2086h1.3M2758 2062h1.3M2791 2038h1.3M2824 2014h1.3M2858 1990h1.3M2891 1966h1.3M2925 1942h1.3M2958 1918h1.3M2991 1894h1.3M3025 1870h1.3M3058 1846h1.3M3092 1821h1.3M3125 1797h1.3M3158 1773h1.3M3192 1749h1.3M3225 1725h1.3M3259 1701h1.3M3292 1677h1.3M3325 1653h1.3M3359 1629h1.3M3392 1605h1.3M3426 1581h1.3M3459 1557h1.3M3492 1533h1.3M3526 1509h1.3M3559 1484h1.3M3592 1460h1.3M3626 1436h1.3M3659 1412h1.3M3693 1388h1.3M3726 1364h1.3M3760 1340h1.3M3793 1316h1.3M3826 1292h1.3M2813 2077h1.3M2846 2053h1.3M2879 2029h1.3M2913 2005h1.3M2946 1980h1.3M2980 1956h1.3M3013 1932h1.3M3046 1908h1.3M3080 1884h1.3M3113 1860h1.3M3147 1836h1.3M3180 1812h1.3M3213 1788h1.3M3247 1764h1.3M3280 1740h1.3M3314 1716h1.3M3347 1692h1.3M3380 1668h1.3M3414 1644h1.3M3447 1619h1.3M3481 1595h1.3M3514 1571h1.3M3547 1547h1.3M3581 1523h1.3M3614 1499h1.3M3648 1475h1.3M3681 1451h1.3M3714 1427h1.3M3748 1403h1.3M3781 1379h1.3M3815 1355h1.3" stroke="#6d7278" stroke-width="1.2" fill="none"/>
<path d="M453 1947L1030 2098" stroke="#30393b" stroke-width="1.2"/>
<path d="M453 1634L607 1531" stroke="#30393b" stroke-width="1.2"/>
<path d="M781 1706L1458 1888" stroke="#30393b" stroke-width="1.2"/>
<path d="M1458 1560L3570 2098" stroke="#30393b" stroke-width="1.2"/>
<path d="M1458 1990L1336 2098" stroke="#30393b" stroke-width="1.2"/>
<path d="M3090 2098L3460 1802" stroke="#30393b" stroke-width="1.2"/>
<path d="M3648 1640L3840 1690" stroke="#30393b" stroke-width="1.2"/>
<path d="M3648 1700L3840 1560" stroke="#30393b" stroke-width="1.2"/>
<path d="M561 2098L1153 1679" stroke="#2c4a48" stroke-width="1.3"/>
<rect x="1493.0" y="1473.0" width="23.8" height="159.0" fill="#efefef"/><polygon points="1516.8,1473.0 1529.0,1470.0 1529.0,1628.0 1516.8,1632.0" fill="#bdbdbd"/>
<rect x="1502.0" y="1473.0" width="18" height="6" fill="#e9a987"/>
<rect x="1392.7" y="1545.2" width="23.8" height="163.0" fill="#efefef"/><polygon points="1416.5,1545.2 1428.7,1542.2 1428.7,1704.2 1416.5,1708.2" fill="#bdbdbd"/>
<rect x="1401.7" y="1545.2" width="18" height="6" fill="#e9a987"/>
<rect x="1072.1" y="1559.1" width="23.8" height="164.5" fill="#efefef"/><polygon points="1095.9,1559.1 1108.1,1556.1 1108.1,1719.6 1095.9,1723.6" fill="#bdbdbd"/>
<rect x="1081.1" y="1559.1" width="18" height="6" fill="#e9a987"/>
<rect x="1292.4" y="1617.4" width="23.8" height="167.0" fill="#efefef"/><polygon points="1316.2,1617.4 1328.4,1614.4 1328.4,1780.4 1316.2,1784.4" fill="#bdbdbd"/>
<rect x="1301.4" y="1617.4" width="18" height="6" fill="#e9a987"/>
<rect x="531.2" y="1514.7" width="23.8" height="163.5" fill="#efefef"/><polygon points="555.0,1514.7 567.2,1511.7 567.2,1674.2 555.0,1678.2" fill="#bdbdbd"/>
<rect x="540.2" y="1514.7" width="18" height="6" fill="#e9a987"/>
<rect x="751.5" y="1573.0" width="23.8" height="166.0" fill="#efefef"/><polygon points="775.3,1573.0 787.5,1570.0 787.5,1735.0 775.3,1739.0" fill="#bdbdbd"/>
<rect x="760.5" y="1573.0" width="18" height="6" fill="#e9a987"/>
<rect x="971.8" y="1631.3" width="23.8" height="168.5" fill="#efefef"/><polygon points="995.6,1631.3 1007.8,1628.3 1007.8,1795.8 995.6,1799.8" fill="#bdbdbd"/>
<rect x="980.8" y="1631.3" width="18" height="6" fill="#e9a987"/>
<rect x="1192.1" y="1689.6" width="23.8" height="171.0" fill="#efefef"/><polygon points="1215.9,1689.6 1228.1,1686.6 1228.1,1856.6 1215.9,1860.6" fill="#bdbdbd"/>
<rect x="1201.1" y="1689.6" width="18" height="6" fill="#e9a987"/>
<polygon points="64.5,1372.4 1210.1,1675.6 1511.0,1459.0 365.4,1155.8" fill="url(#gf5)" />
<polygon points="64.5,1372.4 1210.1,1675.6 1210.1,1690.6 64.5,1387.4" fill="#b1b1b1" />
<polygon points="64.5,1368.4 1210.1,1671.6 1210.1,1677.6 64.5,1374.4" fill="#c3c4c5" />
<polygon points="1210.1,1675.6 1511.0,1459.0 1511.0,1473.0 1210.1,1689.6" fill="#bdbdbd" />
<polygon points="1210.1,1672.6 1511.0,1456.0 1511.0,1460.0 1210.1,1676.6" fill="#cfd1d3" />
<path d="M64.5 1373.4L1210.1 1676.6L1511.0 1460.0" stroke="#8fd0f0" stroke-width="1" fill="none"/>
<rect x="1081.1" y="1371.1" width="11.9" height="174.0" fill="#d9a577"/><polygon points="1093.0,1371.1 1099.1,1368.1 1099.1,1541.1 1093.0,1545.1" fill="#9a7352"/>
<polygon points="64.5,1198.4 1210.1,1501.6 1511.0,1285.0 365.4,981.8" fill="url(#gf4)" />
<polygon points="64.5,1198.4 1210.1,1501.6 1210.1,1516.6 64.5,1213.4" fill="#b1b1b1" />
<polygon points="64.5,1194.4 1210.1,1497.6 1210.1,1503.6 64.5,1200.4" fill="#c3c4c5" />
<polygon points="1210.1,1501.6 1511.0,1285.0 1511.0,1299.0 1210.1,1515.6" fill="#bdbdbd" />
<polygon points="1210.1,1498.6 1511.0,1282.0 1511.0,1286.0 1210.1,1502.6" fill="#cfd1d3" />
<path d="M64.5 1199.4L1210.1 1502.6L1511.0 1286.0" stroke="#8fd0f0" stroke-width="1" fill="none"/>
<rect x="1081.1" y="1197.1" width="11.9" height="174.0" fill="#d9a577"/><polygon points="1093.0,1197.1 1099.1,1194.1 1099.1,1367.1 1093.0,1371.1" fill="#9a7352"/>
<polygon points="64.5,1024.4 1210.1,1327.6 1511.0,1111.0 365.4,807.8" fill="url(#gf3)" />
<polygon points="64.5,1024.4 1210.1,1327.6 1210.1,1342.6 64.5,1039.4" fill="#b1b1b1" />
<polygon points="64.5,1020.4 1210.1,1323.6 1210.1,1329.6 64.5,1026.4" fill="#c3c4c5" />
<polygon points="1210.1,1327.6 1511.0,1111.0 1511.0,1125.0 1210.1,1341.6" fill="#bdbdbd" />
<polygon points="1210.1,1324.6 1511.0,1108.0 1511.0,1112.0 1210.1,1328.6" fill="#cfd1d3" />
<path d="M64.5 1025.4L1210.1 1328.6L1511.0 1112.0" stroke="#8fd0f0" stroke-width="1" fill="none"/>
<rect x="1081.1" y="1022.6" width="11.9" height="174.5" fill="#d9a577"/><polygon points="1093.0,1022.6 1099.1,1019.6 1099.1,1193.1 1093.0,1197.1" fill="#9a7352"/>
<polygon points="64.5,849.9 1210.1,1153.1 1511.0,936.5 365.4,633.3" fill="url(#gf2)" />
<polygon points="355.4,640.6 862.1,774.6 922.3,731.3 415.6,597.2" fill="#cdd1d4" />
<polygon points="64.5,849.9 1210.1,1153.1 1210.1,1168.1 64.5,864.9" fill="#b1b1b1" />
<polygon points="64.5,845.9 1210.1,1149.1 1210.1,1155.1 64.5,851.9" fill="#c3c4c5" />
<polygon points="1210.1,1153.1 1511.0,936.5 1511.0,950.5 1210.1,1167.1" fill="#bdbdbd" />
<polygon points="1210.1,1150.1 1511.0,933.5 1511.0,937.5 1210.1,1154.1" fill="#cfd1d3" />
<path d="M64.5 850.9L1210.1 1154.1L1511.0 937.5" stroke="#8fd0f0" stroke-width="1" fill="none"/>
<rect x="1081.1" y="862.6" width="11.9" height="160.0" fill="#d9a577"/><polygon points="1093.0,862.6 1099.1,859.6 1099.1,1018.6 1093.0,1022.6" fill="#9a7352"/>
<path d="M802 907.5l-70 -4M802 907.5l-18 -22M802 907.5l8 -24M802 907.5l38 -12M802 907.5l62 -5M802 907.5l62 3M802 907.5l38 24M802 907.5l20 -8" stroke="#8fd0f0" stroke-width="1" fill="none"/>
<path d="M802 1081.5l-70 -4M802 1081.5l-18 -22M802 1081.5l8 -24M802 1081.5l38 -12M802 1081.5l62 -5M802 1081.5l62 3M802 1081.5l38 24M802 1081.5l20 -8" stroke="#8fd0f0" stroke-width="1" fill="none"/>
<path d="M802 1256.0l-70 -4M802 1256.0l-18 -22M802 1256.0l8 -24M802 1256.0l38 -12M802 1256.0l62 -5M802 1256.0l62 3M802 1256.0l38 24M802 1256.0l20 -8" stroke="#8fd0f0" stroke-width="1" fill="none"/>
<path d="M802 1430.0l-70 -4M802 1430.0l-18 -22M802 1430.0l8 -24M802 1430.0l38 -12M802 1430.0l62 -5M802 1430.0l62 3M802 1430.0l38 24M802 1430.0l20 -8" stroke="#8fd0f0" stroke-width="1" fill="none"/>
<polygon points="757.0,676.0 815.0,691.0 815.0,760.0 757.0,842.0" fill="#e9e9ea" />
<rect x="742" y="684" width="15.5" height="150" fill="#f0f0f0"/>
<rect x="781" y="733" width="20" height="107" fill="#ececec"/>
<polygon points="801.0,735.0 851.0,748.0 851.0,800.0 801.0,840.0" fill="#b9babb" />
<polygon points="851.0,748.0 912.0,764.0 912.0,780.0 851.0,800.0" fill="#f0f0f0" />
<path d="M749 680l55 14M749 680v174M749 840l60 -43M806 735v100M806 800l45-32 60 14" stroke="#8fd0f0" stroke-width="1" fill="none"/>
<polygon points="749.8,673.8 1014.2,743.8 1114.5,671.6 850.1,601.6" fill="#d0d4d7" />
<polygon points="64.5,689.9 549.2,818.2 757.8,668.0 273.2,539.8" fill="url(#lsl1)" />
<polygon points="64.5,689.9 549.2,818.2 549.2,834.2 64.5,705.9" fill="#f5830d" />
<polygon points="549.2,818.2 757.8,668.0 757.8,676.0 549.2,826.2" fill="#c66d14" />
<polygon points="549.2,826.2 757.8,676.0 757.8,697.0 549.2,847.2" fill="#a85c10" />
<polygon points="549.2,831.2 757.8,681.0 757.8,685.0 549.2,835.2" fill="#c06a14" />
<polygon points="769.5,876.5 1210.1,993.1 1511.0,776.5 1070.4,659.9" fill="url(#go1)" />
<polygon points="769.5,876.5 1210.1,993.1 1210.1,1007.1 769.5,890.5" fill="#8f4c0b" />
<polygon points="1210.1,993.1 1511.0,776.5 1511.0,790.5 1210.1,1007.1" fill="#c26c12" />
<rect x="1181.4" y="630.9" width="11.9" height="159.5" fill="#d9a577"/><polygon points="1193.3,630.9 1199.4,627.9 1199.4,786.4 1193.3,790.4" fill="#9a7352"/>
<rect x="1081.1" y="703.1" width="11.9" height="159.5" fill="#d9a577"/><polygon points="1093.0,703.1 1099.1,700.1 1099.1,858.6 1093.0,862.6" fill="#9a7352"/>
<polygon points="625.6,503.5 757.8,538.5 757.8,666.0 625.6,613.0" fill="#222" />
<polygon points="700.0,566.0 742.0,577.0 742.0,588.0 700.0,577.0" fill="#f5830d" />
<rect x="620" y="627" width="18" height="18" fill="#eee"/><rect x="638" y="630" width="9" height="16" fill="#c8c8c8"/>
<polygon points="759.7,520.9 853.0,453.8 853.0,609.3 759.7,676.4" fill="url(#wallg)" />
<polygon points="739.9,511.7 833.2,444.5 853.0,452.8 759.7,521.9" fill="#e9a888" />
<polygon points="739.9,513.7 759.7,521.9 759.7,680.4 739.9,673.2" fill="#eeeeee" />
<polygon points="980.0,578.2 1075.3,509.6 1075.3,666.1 980.0,734.7" fill="#afb1b0" />
<polygon points="960.2,570.0 1057.5,499.9 1077.3,508.2 980.0,578.2" fill="#e3a07e" />
<rect x="611.8" y="391.8" width="22" height="90" fill="#f1f1f1"/><rect x="633.8" y="395.8" width="13" height="90" fill="#c9c9c9"/>
<polygon points="64.5,530.4 549.2,658.7 749.8,514.3 529.5,456.0 629.8,383.8 365.4,313.8" fill="url(#lroof)" />
<polygon points="629.8,383.8 529.5,456.0 529.5,456.0 541.5,460.0 626.8,395.8" fill="#c9711a" />
<polygon points="64.5,530.4 549.2,658.7 549.2,672.7 64.5,544.4" fill="#fb870b" />
<polygon points="549.2,658.7 749.8,514.3 749.8,522.3 549.2,666.7" fill="#d07616" />
<polygon points="549.2,666.7 749.8,522.3 749.8,541.3 549.2,685.7" fill="#b4640f" />
<polygon points="549.2,670.7 749.8,526.3 749.8,530.3 549.2,674.7" fill="#c87014" />
<polygon points="627.8,379.8 852.1,438.1 854.1,443.1 629.8,384.8" fill="#e5860f" /><polygon points="629.8,384.8 854.1,443.1 850.1,455.1 637.8,396.8" fill="#ff8c0a" />
<polygon points="1068.4,496.4 1292.7,554.7 1294.7,559.7 1070.4,501.4" fill="#e5860f" /><polygon points="1070.4,501.4 1294.7,559.7 1290.7,571.7 1078.4,513.4" fill="#ff8c0a" />
<polygon points="769.5,717.0 1210.1,833.6 1511.0,617.0 1290.7,558.7 1190.4,630.9 970.1,572.6" fill="#b5661a" />
<polygon points="769.5,717.0 1210.1,833.6 1210.1,847.6 769.5,731.0" fill="#8f4c0b" />
<polygon points="1210.1,833.6 1511.0,617.0 1511.0,631.0 1210.1,847.6" fill="#c26c12" />
<rect x="540.2" y="657.7" width="11.9" height="857.0" fill="#d9a577"/><polygon points="552.1,657.7 558.2,654.7 558.2,1510.7 552.1,1514.7" fill="#9a7352"/><polygon points="540.2,657.7 552.1,657.7 558.2,654.7 546.3,654.7" fill="#e9b08e"/>
<rect x="760.5" y="716.0" width="11.9" height="857.0" fill="#d9a577"/><polygon points="772.4,716.0 778.5,713.0 778.5,1569.0 772.4,1573.0" fill="#9a7352"/><polygon points="760.5,716.0 772.4,716.0 778.5,713.0 766.6,713.0" fill="#e9b08e"/>
<rect x="980.8" y="774.3" width="11.9" height="857.0" fill="#d9a577"/><polygon points="992.7,774.3 998.8,771.3 998.8,1627.3 992.7,1631.3" fill="#9a7352"/><polygon points="980.8,774.3 992.7,774.3 998.8,771.3 986.9,771.3" fill="#e9b08e"/>
<rect x="1201.1" y="832.6" width="11.9" height="857.0" fill="#d9a577"/><polygon points="1213.0,832.6 1219.1,829.6 1219.1,1685.6 1213.0,1689.6" fill="#9a7352"/><polygon points="1201.1,832.6 1213.0,832.6 1219.1,829.6 1207.2,829.6" fill="#e9b08e"/>
<rect x="1301.4" y="760.4" width="11.9" height="857.0" fill="#d9a577"/><polygon points="1313.3,760.4 1319.4,757.4 1319.4,1613.4 1313.3,1617.4" fill="#9a7352"/><polygon points="1301.4,760.4 1313.3,760.4 1319.4,757.4 1307.5,757.4" fill="#e9b08e"/>
<rect x="1401.7" y="688.2" width="11.9" height="857.0" fill="#d9a577"/><polygon points="1413.6,688.2 1419.7,685.2 1419.7,1541.2 1413.6,1545.2" fill="#9a7352"/><polygon points="1401.7,688.2 1413.6,688.2 1419.7,685.2 1407.8,685.2" fill="#e9b08e"/>
<path d="M64.5 850.9L1210.1 1154.1L1511.0 937.5" stroke="#8fd0f0" stroke-width=".8" fill="none" opacity=".8"/>
<path d="M64.5 1025.4L1210.1 1328.6L1511.0 1112.0" stroke="#8fd0f0" stroke-width=".8" fill="none" opacity=".8"/>
<path d="M64.5 1199.4L1210.1 1502.6L1511.0 1286.0" stroke="#8fd0f0" stroke-width=".8" fill="none" opacity=".8"/>
<path d="M64.5 1373.4L1210.1 1676.6L1511.0 1460.0" stroke="#8fd0f0" stroke-width=".8" fill="none" opacity=".8"/>
<path d="M869 444V594M857 440l12 4M1089.6 520V597M730 534V677M722 528l8 6" stroke="#7a8086" stroke-width=".8" stroke-dasharray="1.5 1.5" fill="none"/>
<polygon points="3722.0,172.0 3808.0,195.0 3755.0,232.0 3669.0,211.0" fill="#767678" /><polygon points="3669.0,211.0 3755.0,232.0 3755.0,323.0 3669.0,302.0" fill="#9b9a9e" /><polygon points="3755.0,232.0 3808.0,195.0 3808.0,288.0 3755.0,323.0" fill="#7d7d80" /><path d="M3743.5 177.8L3690.5 216.2M3708.8 181.8L3794.8 204.2M3690.5 216.2L3690.5 307.2M3669.0 233.8L3755.0 254.8M3768.2 222.8L3768.2 314.2M3755.0 254.8L3808.0 218.2M3786.5 189.2L3733.5 226.8M3682.2 201.2L3768.2 222.8M3733.5 226.8L3733.5 317.8M3669.0 279.2L3755.0 300.2M3794.8 204.2L3794.8 296.8M3755.0 300.2L3808.0 264.8M3722.0 172.0L3808.0 195.0M3808.0 195.0L3755.0 232.0M3755.0 232.0L3669.0 211.0M3669.0 211.0L3722.0 172.0M3669.0 211.0L3755.0 232.0M3755.0 232.0L3755.0 323.0M3755.0 323.0L3669.0 302.0M3669.0 302.0L3669.0 211.0M3755.0 232.0L3808.0 195.0M3808.0 195.0L3808.0 288.0M3808.0 288.0L3755.0 323.0M3755.0 323.0L3755.0 232.0" stroke="#5a5a5c" stroke-width="1.5" fill="none"/><text x="3703" y="275" font-size="20" font-weight="bold" fill="#10c010" transform="skewY(15)" style="transform-origin:3703px 275px">-Y</text><text x="3775" y="267" font-size="19" font-weight="bold" fill="#d01010" transform="skewY(-33)" style="transform-origin:3775px 267px">-X</text><text x="3724" y="207" font-size="12" font-weight="bold" fill="#4a90e0" transform="matrix(1,0.25,-0.9,0.55,0,0)" style="transform-origin:3735px 205px">+Z</text>
</svg>
<!-- dialog -->
<div class="a" style="left:1458px;top:393px;width:2190px;height:1409.5px;border-radius:11px;background:#d1d1d6;box-shadow:0 0 0 1.5px #454545,0 8px 40px rgba(0,0,0,.55);overflow:hidden;"><div class="a" style="left:0;top:0;width:2192px;height:43px;background:#eff4f9"></div><div class="a" style="left:0;top:1346px;width:2192px;height:64px;background:#fff"></div></div>
<svg class="a" style="left:1469px;top:401px;width:25px;height:24px" viewBox="0 0 25 24"><rect x="0" y="9" width="24" height="14" fill="#1f2f86"/><path d="M0 19h24M8 9v14" stroke="#fff" stroke-width="1.6"/><path d="M8 10l14 8M8 10L0 18" stroke="#cfd6f0" stroke-width="1"/><rect x="11.500" y="1" width="12" height="11" fill="#fff" stroke="#f0c020" stroke-width="1.600"/><path d="M13 8c3-4 7-4 9-1l-3 2c-2-1-4-1-6 1z" fill="#3d6db5"/><text x="1" y="9" font-size="9" font-weight="bold" fill="#c89a10">6</text></svg>
<span class="t" style="left:1499.6px;top:401.96px;font-size:18px;line-height:24px;height:24px;color:#000;letter-spacing:-0.511px;">Gebäudegeschosse</span>
<svg class="a" style="left:3460px;top:392px;width:188px;height:44px" viewBox="3460 392 188 44"><path d="M3467 413.500h15.500" stroke="#c4c4c4" stroke-width="1.200"/><rect x="3536.700" y="407.500" width="13.200" height="13.200" rx="1.500" fill="none" stroke="#111" stroke-width="1.500"/><path d="M3608 406.800l14 14M3622 406.800l-14 14" stroke="#111" stroke-width="1.500" fill="none"/></svg>
<div class="a" style="left:1472px;top:450px;width:395px;height:1277px;background:#fff;"></div>
<span class="t" style="left:1480.5px;top:454.1px;font-size:15px;line-height:20px;height:20px;color:#5a6b96;letter-spacing:-0.203px;font-weight:bold;">Liste</span>
<div class="a" style="left:1504px;top:479px;width:1px;height:1206px;background:#e3e3e8;"></div>
<div class="a" style="left:1519px;top:479px;width:1px;height:1206px;background:#e3e3e8;"></div>
<div class="a" style="left:1864px;top:479px;width:1px;height:1206px;background:#e3e3e8;"></div>
<div class="a" style="left:1477px;top:484.0px;width:17px;height:17px;background:#8585ff;"></div>
<span class="t" style="left:1508px;top:483.7px;font-size:15px;line-height:20px;height:20px;color:#000;letter-spacing:-0.292px;">5</span>
<span class="t" style="left:1523px;top:483.7px;font-size:15px;line-height:20px;height:20px;color:#000;letter-spacing:0.195px;">Z<sub>oben</sub> : -17.500 m | ΔZ : 2.750 m</span>
<div class="a" style="left:1477px;top:511.0px;width:17px;height:17px;background:#ff0000;"></div>
<span class="t" style="left:1508px;top:510.7px;font-size:15px;line-height:20px;height:20px;color:#000;letter-spacing:-0.292px;">4</span>
<span class="t" style="left:1523px;top:510.7px;font-size:15px;line-height:20px;height:20px;color:#000;letter-spacing:0.195px;">Z<sub>oben</sub> : -14.750 m | ΔZ : 2.750 m</span>
<div class="a" style="left:1474px;top:533.0px;width:1391px;height:27px;background:#cce8ff;width:391px;border:1.500px solid #2a84e0;border-right:none;box-sizing:border-box;"></div>
<div class="a" style="left:1504px;top:534.5px;width:1px;height:24px;background:#b5d4ee;"></div>
<div class="a" style="left:1519px;top:534.5px;width:1px;height:24px;background:#b5d4ee;"></div>
<div class="a" style="left:1477px;top:538.0px;width:17px;height:17px;background:#4da43c;"></div>
<span class="t" style="left:1508px;top:537.7px;font-size:15px;line-height:20px;height:20px;color:#000;letter-spacing:-0.292px;">3</span>
<span class="t" style="left:1523px;top:537.7px;font-size:15px;line-height:20px;height:20px;color:#000;letter-spacing:0.195px;">Z<sub>oben</sub> : -12.000 m | ΔZ : 3.000 m</span>
<div class="a" style="left:1477px;top:565.0px;width:17px;height:17px;background:#ba6f6f;"></div>
<span class="t" style="left:1508px;top:564.7px;font-size:15px;line-height:20px;height:20px;color:#000;letter-spacing:-0.292px;">2</span>
<span class="t" style="left:1523px;top:564.7px;font-size:15px;line-height:20px;height:20px;color:#000;letter-spacing:0.180px;">Z<sub>oben</sub> : -9.000 m | ΔZ : 3.000 m</span>
<div class="a" style="left:1477px;top:592.0px;width:17px;height:17px;background:#f7c600;"></div>
<span class="t" style="left:1508px;top:591.7px;font-size:15px;line-height:20px;height:20px;color:#000;letter-spacing:-0.292px;">1</span>
<span class="t" style="left:1523px;top:591.7px;font-size:15px;line-height:20px;height:20px;color:#000;letter-spacing:0.180px;">Z<sub>oben</sub> : -6.000 m | ΔZ : 3.000 m</span>
<div class="a" style="left:1477px;top:619.0px;width:17px;height:17px;background:#c8ffff;"></div>
<span class="t" style="left:1508px;top:618.7px;font-size:15px;line-height:20px;height:20px;color:#000;letter-spacing:-0.292px;">0</span>
<span class="t" style="left:1523px;top:618.7px;font-size:15px;line-height:20px;height:20px;color:#000;letter-spacing:0.180px;">Z<sub>oben</sub> : -3.000 m | ΔZ : 3.000 m</span>
<div class="a" style="left:1480.3px;top:1693px;width:33.5px;height:27.5px;background:#cce4f7;"></div>
<div class="a" style="left:1519px;top:1693px;width:33.5px;height:27.5px;background:#cce4f7;"></div>
<div class="a" style="left:1558px;top:1693px;width:33.5px;height:27.5px;background:#cce4f7;"></div>
<div class="a" style="left:1597px;top:1693px;width:33.5px;height:27.5px;background:#cce4f7;"></div>
<div class="a" style="left:1646px;top:1693px;width:33.5px;height:27.5px;background:#cce4f7;"></div>
<div class="a" style="left:1825px;top:1693px;width:33.5px;height:27.5px;background:#cce4f7;"></div>
<div class="a" style="left:1472px;top:1755px;width:33.5px;height:27.5px;background:#cce4f7;"></div>
<div class="a" style="left:1521px;top:1755px;width:33.5px;height:27.5px;background:#cce4f7;"></div>
<div class="a" style="left:1570px;top:1755px;width:33.5px;height:27.5px;background:#cce4f7;"></div>
<div class="a" style="left:1619px;top:1755px;width:33.5px;height:27.5px;background:#cce4f7;"></div>
<div class="a" style="left:1882px;top:450px;width:91px;height:67px;background:#fff;"></div>
<span class="t" style="left:1890.5px;top:454.1px;font-size:15px;line-height:20px;height:20px;color:#5a6b96;letter-spacing:-0.005px;font-weight:bold;">Nr.</span>
<div class="a" style="left:1890px;top:483px;width:75px;height:27px;background:#e6e6e6;"></div>
<span class="t" style="right:1880.71px;top:486.5px;font-size:15px;line-height:20px;height:20px;color:#000;letter-spacing:-0.292px;">3</span>
<div class="a" style="left:1987.5px;top:450px;width:989.5px;height:67px;background:#fff;"></div>
<span class="t" style="left:1996.5px;top:454.1px;font-size:15px;line-height:20px;height:20px;color:#5a6b96;letter-spacing:0.266px;font-weight:bold;">Name des Gebäudegeschosses</span>
<div class="a" style="left:1996px;top:483px;width:931px;height:27px;background:#e6e6e6;"></div>
<span class="t" style="left:2000.5px;top:487.3px;font-size:15px;line-height:20px;height:20px;color:#000;letter-spacing:0.195px;">Z<sub>oben</sub> : -12.000 m | ΔZ : 3.000 m</span>
<div class="a" style="left:2935px;top:483px;width:34px;height:28px;background:#cce4f7;"></div>
<svg class="a" style="left:2939px;top:485px;width:26px;height:24px" viewBox="0 0 26 24"><path d="M3 6v13h5M3 6h5" stroke="#444" stroke-width="1.600" fill="none"/><path d="M11 19h13" stroke="#444" stroke-width="1.600"/><path d="M9 18l2-6 7-9 3 2-7 9z" fill="#333"/><path d="M20 2l2 1.500" stroke="#333" stroke-width="1.500"/></svg>
<div class="a" style="left:2992.3px;top:450px;width:642.7px;height:67px;background:#fff;"></div>
<div class="a" style="left:1882px;top:561.7px;width:1753px;height:1165.3px;background:#ececec;"></div>
<div class="a" style="left:1882px;top:532px;width:77.7px;height:30px;background:#ececec;"></div>
<div class="a" style="left:1959.7px;top:534.5px;width:166px;height:27.2px;background:#dedede;"></div>
<span class="t" style="left:1903px;top:539.8px;font-size:15px;line-height:20px;height:20px;color:#000;letter-spacing:-0.334px;">Basis</span>
<span class="t" style="left:1967px;top:539.8px;font-size:15px;line-height:20px;height:20px;color:#000;letter-spacing:0.193px;">Globale Einstellungen</span>
<div class="a" style="left:1895px;top:575.3px;width:533.6px;height:353.2px;background:#fff;"></div>
<span class="t" style="left:1903px;top:578.2px;font-size:15px;line-height:20px;height:20px;color:#5a6b96;letter-spacing:0.038px;font-weight:bold;">Geschossabmessung</span>
<span class="t" style="left:1903px;top:619.1px;font-size:15px;line-height:20px;height:20px;color:#000;letter-spacing:-0.314px;">Höhe</span>
<span class="t" style="left:1903px;top:737.8px;font-size:15px;line-height:20px;height:20px;color:#000;letter-spacing:-0.314px;">Höhe</span>
<span class="t" style="left:1903px;top:857.0px;font-size:15px;line-height:20px;height:20px;color:#000;letter-spacing:-0.263px;">Dicke</span>
<div class="a" style="left:1962.8px;top:646.3px;width:135.1px;height:26.4px;background:#e8e8f4;"></div>
<span class="t" style="left:1903px;top:651.3px;font-size:15px;line-height:20px;height:20px;color:#000;letter-spacing:-0.256px;">Z<sub>oben</sub></span>
<span class="t" style="right:1783.00px;top:649.5px;font-size:15px;line-height:20px;height:20px;color:#000;letter-spacing:0.000px;">-12.000</span>
<svg class="a" style="left:2066px;top:649.3px;width:30px;height:21px" viewBox="0 0 30 21"><path d="M3 6.500l3-3.500 3 3.500zM3 14l3 3.500 3-3.500z" fill="#555"/><path d="M20.500 5l5.500 5-5.500 5z" fill="#222"/></svg>
<span class="t" style="left:2106.4px;top:651.3px;font-size:15px;line-height:20px;height:20px;color:#000;letter-spacing:-0.243px;">[m]</span>
<div class="a" style="left:2188.7px;top:646.3px;width:34.2px;height:27.6px;background:#cce4f7;"></div>
<svg class="a" style="left:2192px;top:647.3px;width:28px;height:26px" viewBox="0 0 28 26"><path d="M8 2l7 7M15 2L8 9" stroke="#e01010" stroke-width="1.500"/><path d="M13 7v13l3.200-3 2.500 5.500 2.300-1-2.500-5.300 4.500-.2z" fill="#fff" stroke="#222" stroke-width="1"/></svg>
<div class="a" style="left:1962.8px;top:682.4px;width:135.1px;height:26.4px;background:#e8e8f4;"></div>
<span class="t" style="left:1903px;top:687.4px;font-size:15px;line-height:20px;height:20px;color:#000;letter-spacing:-0.233px;">Z<sub>unten</sub></span>
<span class="t" style="right:1783.00px;top:685.6px;font-size:15px;line-height:20px;height:20px;color:#000;letter-spacing:0.000px;">-9.000</span>
<svg class="a" style="left:2066px;top:685.4px;width:30px;height:21px" viewBox="0 0 30 21"><path d="M3 6.500l3-3.500 3 3.500zM3 14l3 3.500 3-3.500z" fill="#555"/><path d="M20.500 5l5.500 5-5.500 5z" fill="#222"/></svg>
<span class="t" style="left:2106.4px;top:687.4px;font-size:15px;line-height:20px;height:20px;color:#000;letter-spacing:-0.243px;">[m]</span>
<div class="a" style="left:2188.7px;top:682.4px;width:34.2px;height:27.6px;background:#cce4f7;"></div>
<svg class="a" style="left:2192px;top:683.4px;width:28px;height:26px" viewBox="0 0 28 26"><path d="M8 2l7 7M15 2L8 9" stroke="#e01010" stroke-width="1.500"/><path d="M13 7v13l3.200-3 2.500 5.500 2.300-1-2.500-5.300 4.500-.2z" fill="#fff" stroke="#222" stroke-width="1"/></svg>
<div class="a" style="left:1962.8px;top:765.5px;width:135.1px;height:26.4px;background:#e8e8f4;"></div>
<span class="t" style="left:1903px;top:770.5px;font-size:15px;line-height:20px;height:20px;color:#000;letter-spacing:-0.336px;">ΔZ</span>
<span class="t" style="right:1783.00px;top:768.7px;font-size:15px;line-height:20px;height:20px;color:#000;letter-spacing:0.000px;">3.000</span>
<svg class="a" style="left:2066px;top:768.5px;width:30px;height:21px" viewBox="0 0 30 21"><path d="M3 6.500l3-3.500 3 3.500zM3 14l3 3.500 3-3.500z" fill="#555"/><path d="M20.500 5l5.500 5-5.500 5z" fill="#222"/></svg>
<span class="t" style="left:2106.4px;top:770.5px;font-size:15px;line-height:20px;height:20px;color:#000;letter-spacing:-0.243px;">[m]</span>
<div class="a" style="left:2188.7px;top:765.5px;width:34.2px;height:27.6px;background:#cce4f7;"></div>
<svg class="a" style="left:2192px;top:766.5px;width:28px;height:26px" viewBox="0 0 28 26"><path d="M8 2l7 7M15 2L8 9" stroke="#e01010" stroke-width="1.500"/><path d="M13 7v13l3.200-3 2.500 5.500 2.300-1-2.500-5.300 4.500-.2z" fill="#fff" stroke="#222" stroke-width="1"/><text x="1" y="23" font-size="9" fill="#222">2x</text></svg>
<div class="a" style="left:1962.8px;top:801.6px;width:135.1px;height:26.4px;background:#e4e4e4;"></div>
<span class="t" style="left:1903px;top:806.6px;font-size:15px;line-height:20px;height:20px;color:#000;letter-spacing:-0.304px;">ΔZ<sub>0</sub></span>
<span class="t" style="right:1783.00px;top:804.8000000000001px;font-size:15px;line-height:20px;height:20px;color:#000;letter-spacing:0.000px;">3.000</span>
<svg class="a" style="left:2066px;top:804.6px;width:30px;height:21px" viewBox="0 0 30 21"><path d="M3 6.500l3-3.500 3 3.500zM3 14l3 3.500 3-3.500z" fill="#b0b0b0"/><path d="M20.500 5l5.500 5-5.500 5z" fill="#222"/></svg>
<span class="t" style="left:2106.4px;top:806.6px;font-size:15px;line-height:20px;height:20px;color:#000;letter-spacing:-0.243px;">[m]</span>
<div class="a" style="left:2188.7px;top:801.6px;width:34.2px;height:27.6px;background:#e4e4e4;"></div>
<svg class="a" style="left:2192px;top:802.6px;width:28px;height:26px" viewBox="0 0 28 26"><path d="M8 2l7 7M15 2L8 9" stroke="#9a9a9a" stroke-width="1.500"/><path d="M13 7v13l3.200-3 2.500 5.500 2.300-1-2.500-5.300 4.500-.2z" fill="#fff" stroke="#aaa" stroke-width="1"/><text x="1" y="23" font-size="9" fill="#aaa">2x</text></svg>
<div class="a" style="left:1962.8px;top:884.7px;width:135.1px;height:26.4px;background:#e4e4e4;"></div>
<span class="t" style="left:1903px;top:889.7px;font-size:15px;line-height:20px;height:20px;color:#9a9a9a;letter-spacing:-0.292px;">d</span>
<svg class="a" style="left:2066px;top:887.7px;width:30px;height:21px" viewBox="0 0 30 21"><path d="M3 6.500l3-3.500 3 3.500zM3 14l3 3.500 3-3.500z" fill="#b0b0b0"/><path d="M20.500 5l5.500 5-5.500 5z" fill="#a0a0a0"/></svg>
<span class="t" style="left:2106.4px;top:889.7px;font-size:15px;line-height:20px;height:20px;color:#9a9a9a;letter-spacing:-0.243px;">[m]</span>
<div class="a" style="left:1895px;top:944px;width:533.6px;height:688.5px;background:#fff;"></div>
<span class="t" style="left:1903px;top:947.7px;font-size:15px;line-height:20px;height:20px;color:#5a6b96;letter-spacing:0.848px;font-weight:bold;">Modellierung</span>
<span class="t" style="left:1903px;top:988.4px;font-size:15px;line-height:20px;height:20px;color:#000;letter-spacing:0.250px;">Geschossmodellierung</span>
<div class="a" style="left:1903px;top:1015.3px;width:518px;height:27.2px;background:#e8e8f4;"></div>
<span class="t" style="left:1908.5px;top:1019.8px;font-size:15px;line-height:20px;height:20px;color:#000;letter-spacing:0.000px;">Starre Ebene</span>
<svg class="a" style="left:2402px;top:1024.8px;width:14px;height:10px" viewBox="0 0 14 10"><path d="M1.500 2l5.500 5.500 5.500-5.500" fill="none" stroke="#444" stroke-width="1.400"/></svg>
<span class="t" style="left:1903px;top:1071.5px;font-size:15px;line-height:20px;height:20px;color:#000;letter-spacing:0.426px;">Knotenlagermodellierung</span>
<div class="a" style="left:1903px;top:1098.4px;width:518px;height:27.2px;background:#e8e8f4;"></div>
<span class="t" style="left:1908.5px;top:1102.9px;font-size:15px;line-height:20px;height:20px;color:#000;letter-spacing:0.000px;">Festes Gelenklager |</span>
<svg class="a" style="left:2402px;top:1107.9px;width:14px;height:10px" viewBox="0 0 14 10"><path d="M1.500 2l5.500 5.500 5.500-5.500" fill="none" stroke="#444" stroke-width="1.400"/></svg>
<svg class="a" style="left:0;top:1098.4px;width:3840px;height:28px" viewBox="0 0 3840 28"><rect x="2050.5" y="8.500" width="11.500" height="11.500" rx="1.500" fill="#fff" stroke="#333" stroke-width="1.100"/><path d="M2053.0 14.5l2.700 2.700 4.300-5" fill="none" stroke="#222" stroke-width="1.300"/><rect x="2065.5" y="8.500" width="11.500" height="11.500" rx="1.500" fill="#fff" stroke="#333" stroke-width="1.100"/><path d="M2068.0 14.5l2.700 2.700 4.300-5" fill="none" stroke="#222" stroke-width="1.300"/><rect x="2080.5" y="8.500" width="11.500" height="11.500" rx="1.500" fill="#fff" stroke="#333" stroke-width="1.100"/><path d="M2083.0 14.5l2.700 2.700 4.300-5" fill="none" stroke="#222" stroke-width="1.300"/><rect x="2099.5" y="8.500" width="11.500" height="11.500" rx="1.500" fill="#fff" stroke="#333" stroke-width="1.100"/><rect x="2114.5" y="8.500" width="11.500" height="11.500" rx="1.500" fill="#fff" stroke="#333" stroke-width="1.100"/><rect x="2129.5" y="8.500" width="11.500" height="11.500" rx="1.500" fill="#fff" stroke="#333" stroke-width="1.100"/><path d="M2132.0 14.5l2.700 2.700 4.300-5" fill="none" stroke="#222" stroke-width="1.300"/></svg>
<span class="t" style="left:1903px;top:1154.6px;font-size:15px;line-height:20px;height:20px;color:#000;letter-spacing:0.449px;">Linienlagermodellierung</span>
<div class="a" style="left:1903px;top:1181.4px;width:518px;height:27.2px;background:#e8e8f4;"></div>
<span class="t" style="left:1908.5px;top:1185.9px;font-size:15px;line-height:20px;height:20px;color:#000;letter-spacing:0.000px;">Festes Gelenklager |</span>
<svg class="a" style="left:2402px;top:1190.9px;width:14px;height:10px" viewBox="0 0 14 10"><path d="M1.500 2l5.500 5.500 5.500-5.500" fill="none" stroke="#444" stroke-width="1.400"/></svg>
<svg class="a" style="left:0;top:1181.4px;width:3840px;height:28px" viewBox="0 0 3840 28"><rect x="2050.5" y="8.500" width="11.500" height="11.500" rx="1.500" fill="#fff" stroke="#333" stroke-width="1.100"/><path d="M2053.0 14.5l2.700 2.700 4.300-5" fill="none" stroke="#222" stroke-width="1.300"/><rect x="2065.5" y="8.500" width="11.500" height="11.500" rx="1.500" fill="#fff" stroke="#333" stroke-width="1.100"/><path d="M2068.0 14.5l2.700 2.700 4.300-5" fill="none" stroke="#222" stroke-width="1.300"/><rect x="2080.5" y="8.500" width="11.500" height="11.500" rx="1.500" fill="#fff" stroke="#333" stroke-width="1.100"/><path d="M2083.0 14.5l2.700 2.700 4.300-5" fill="none" stroke="#222" stroke-width="1.300"/><rect x="2099.5" y="8.500" width="11.500" height="11.500" rx="1.500" fill="#fff" stroke="#333" stroke-width="1.100"/><rect x="2114.5" y="8.500" width="11.500" height="11.500" rx="1.500" fill="#fff" stroke="#333" stroke-width="1.100"/><rect x="2129.5" y="8.500" width="11.500" height="11.500" rx="1.500" fill="#fff" stroke="#333" stroke-width="1.100"/><path d="M2132.0 14.5l2.700 2.700 4.300-5" fill="none" stroke="#222" stroke-width="1.300"/></svg>
<div class="a" style="left:1895px;top:1647.7px;width:1081.7px;height:67px;background:#fff;"></div>
<span class="t" style="left:1903px;top:1651.1px;font-size:15px;line-height:20px;height:20px;color:#5a6b96;letter-spacing:0.738px;font-weight:bold;">Kommentar</span>
<div class="a" style="left:1903px;top:1681px;width:1024px;height:27.2px;background:#e8e8f4;"></div>
<svg class="a" style="left:2903px;top:1690px;width:14px;height:10px" viewBox="0 0 14 10"><path d="M1.500 2l5.500 5.500 5.500-5.500" fill="none" stroke="#444" stroke-width="1.400"/></svg>
<div class="a" style="left:2935px;top:1681px;width:34.3px;height:28px;background:#e4e4e4;"></div>
<svg class="a" style="left:2939px;top:1684px;width:26px;height:22px" viewBox="0 0 26 22"><rect x="2" y="2" width="15" height="13" rx="1" fill="#e4e4e4" stroke="#8a8a8a" stroke-width="1.300"/><rect x="5" y="5" width="15" height="13" rx="1" fill="#e4e4e4" stroke="#8a8a8a" stroke-width="1.300"/><rect x="8" y="8" width="15" height="13" rx="1" fill="#eee" stroke="#8a8a8a" stroke-width="1.300"/><rect x="17" y="16" width="4" height="3.500" fill="#8a8a8a"/></svg>
<div class="a" style="left:2444px;top:574.9px;width:532.8000000000002px;height:1058px;background:#fff;"></div>
<span class="t" style="left:2452.8px;top:579.1px;font-size:15px;line-height:20px;height:20px;color:#5a6b96;letter-spacing:0.575px;font-weight:bold;">Informationen | Analytisch</span>
<div class="a" style="left:2444px;top:602px;width:24px;height:990.5px;background:#e2e2e2;"></div>
<div class="a" style="left:2444px;top:602px;width:532.8000000000002px;height:24px;background:#e2e2e2;"></div>
<svg class="a" style="left:2448px;top:606px;width:28px;height:15px" viewBox="0 0 28 15"><rect x=".6" y=".6" width="12.800" height="12.800" rx="1.500" fill="#fff" stroke="#777" stroke-width="1.100"/><path d="M3.500 7h7" stroke="#444" stroke-width="1.200"/><path d="M15 7h6" stroke="#aaa" stroke-width="1" stroke-dasharray="1 1"/></svg>
<span class="t" style="left:2476.7px;top:605.5px;font-size:15px;line-height:20px;height:20px;color:#000;letter-spacing:0.170px;">Decke</span>
<div class="a" style="left:2468px;top:626px;width:508.8000000000002px;height:24px;background:#f9f9f4;"></div>
<div class="a" style="left:2743.0px;top:626px;width:1px;height:24px;background:#dcdcdc;"></div>
<div class="a" style="left:2787.7px;top:626px;width:1px;height:24px;background:#dcdcdc;"></div>
<div class="a" style="left:2886.1px;top:626px;width:1px;height:24px;background:#dcdcdc;"></div>
<span class="t" style="left:2506.5px;top:629.5px;font-size:15px;line-height:20px;height:20px;color:#000;letter-spacing:0.150px;">Stablänge</span>
<span class="t" style="left:2748px;top:629.5px;font-size:15px;line-height:20px;height:20px;color:#000;letter-spacing:0.000px;">L</span>
<span class="t" style="right:957.50px;top:629.3px;font-size:15px;line-height:20px;height:20px;color:#000;letter-spacing:0.000px;">0.000</span>
<span class="t" style="left:2891.5px;top:629.5px;font-size:15px;line-height:20px;height:20px;color:#000;letter-spacing:0.000px;">m</span>
<svg class="a" style="left:2484px;top:626px;width:18px;height:24px" viewBox="0 0 18 24"><path d="M1.500 0v24M1.500 12.500h14" stroke="#b0b0b0" stroke-width="1" stroke-dasharray="1 1" fill="none"/></svg>
<div class="a" style="left:2468px;top:650px;width:508.8000000000002px;height:24px;background:#f9f9f4;"></div>
<div class="a" style="left:2743.0px;top:650px;width:1px;height:24px;background:#dcdcdc;"></div>
<div class="a" style="left:2787.7px;top:650px;width:1px;height:24px;background:#dcdcdc;"></div>
<div class="a" style="left:2886.1px;top:650px;width:1px;height:24px;background:#dcdcdc;"></div>
<span class="t" style="left:2506.5px;top:653.5px;font-size:15px;line-height:20px;height:20px;color:#000;letter-spacing:0.147px;">Oberfläche</span>
<span class="t" style="left:2748px;top:653.5px;font-size:15px;line-height:20px;height:20px;color:#000;letter-spacing:0.000px;">A</span>
<span class="t" style="right:957.50px;top:653.3px;font-size:15px;line-height:20px;height:20px;color:#000;letter-spacing:0.000px;">180.000</span>
<span class="t" style="left:2891.5px;top:653.5px;font-size:15px;line-height:20px;height:20px;color:#000;letter-spacing:0.000px;">m<sup>2</sup></span>
<svg class="a" style="left:2484px;top:650px;width:18px;height:24px" viewBox="0 0 18 24"><path d="M1.500 0v24M1.500 12.500h14" stroke="#b0b0b0" stroke-width="1" stroke-dasharray="1 1" fill="none"/></svg>
<div class="a" style="left:2468px;top:674px;width:508.8000000000002px;height:24px;background:#f9f9f4;"></div>
<div class="a" style="left:2743.0px;top:674px;width:1px;height:24px;background:#dcdcdc;"></div>
<div class="a" style="left:2787.7px;top:674px;width:1px;height:24px;background:#dcdcdc;"></div>
<div class="a" style="left:2886.1px;top:674px;width:1px;height:24px;background:#dcdcdc;"></div>
<span class="t" style="left:2506.5px;top:677.5px;font-size:15px;line-height:20px;height:20px;color:#000;letter-spacing:0.149px;">Stab- und Flächenvolumen</span>
<span class="t" style="left:2748px;top:677.5px;font-size:15px;line-height:20px;height:20px;color:#000;letter-spacing:0.000px;">V</span>
<span class="t" style="right:957.50px;top:677.3px;font-size:15px;line-height:20px;height:20px;color:#000;letter-spacing:0.000px;">54.000</span>
<span class="t" style="left:2891.5px;top:677.5px;font-size:15px;line-height:20px;height:20px;color:#000;letter-spacing:0.000px;">m<sup>3</sup></span>
<svg class="a" style="left:2484px;top:674px;width:18px;height:24px" viewBox="0 0 18 24"><path d="M1.500 0v24M1.500 12.500h14" stroke="#b0b0b0" stroke-width="1" stroke-dasharray="1 1" fill="none"/></svg>
<div class="a" style="left:2468px;top:698px;width:508.8000000000002px;height:24px;background:#f9f9f4;"></div>
<div class="a" style="left:2743.0px;top:698px;width:1px;height:24px;background:#dcdcdc;"></div>
<div class="a" style="left:2787.7px;top:698px;width:1px;height:24px;background:#dcdcdc;"></div>
<div class="a" style="left:2886.1px;top:698px;width:1px;height:24px;background:#dcdcdc;"></div>
<span class="t" style="left:2506.5px;top:701.5px;font-size:15px;line-height:20px;height:20px;color:#000;letter-spacing:0.152px;">Stab- und Flächenmasse</span>
<span class="t" style="left:2748px;top:701.5px;font-size:15px;line-height:20px;height:20px;color:#000;letter-spacing:0.000px;">G</span>
<span class="t" style="right:957.50px;top:701.3px;font-size:15px;line-height:20px;height:20px;color:#000;letter-spacing:0.000px;">135.000</span>
<span class="t" style="left:2891.5px;top:701.5px;font-size:15px;line-height:20px;height:20px;color:#000;letter-spacing:0.000px;">t</span>
<svg class="a" style="left:2484px;top:698px;width:18px;height:24px" viewBox="0 0 18 24"><path d="M1.500 0v12M1.500 12.500h14" stroke="#b0b0b0" stroke-width="1" stroke-dasharray="1 1" fill="none"/></svg>
<div class="a" style="left:2444px;top:746px;width:532.8000000000002px;height:24px;background:#e2e2e2;"></div>
<svg class="a" style="left:2448px;top:750px;width:28px;height:15px" viewBox="0 0 28 15"><rect x=".6" y=".6" width="12.800" height="12.800" rx="1.500" fill="#fff" stroke="#777" stroke-width="1.100"/><path d="M3.500 7h7" stroke="#444" stroke-width="1.200"/><path d="M15 7h6" stroke="#aaa" stroke-width="1" stroke-dasharray="1 1"/></svg>
<span class="t" style="left:2476.7px;top:749.5px;font-size:15px;line-height:20px;height:20px;color:#000;letter-spacing:0.145px;">Stützen</span>
<div class="a" style="left:2468px;top:770px;width:508.8000000000002px;height:24px;background:#f9f9f4;"></div>
<div class="a" style="left:2743.0px;top:770px;width:1px;height:24px;background:#dcdcdc;"></div>
<div class="a" style="left:2787.7px;top:770px;width:1px;height:24px;background:#dcdcdc;"></div>
<div class="a" style="left:2886.1px;top:770px;width:1px;height:24px;background:#dcdcdc;"></div>
<span class="t" style="left:2506.5px;top:773.5px;font-size:15px;line-height:20px;height:20px;color:#000;letter-spacing:0.167px;">Länge</span>
<span class="t" style="left:2748px;top:773.5px;font-size:15px;line-height:20px;height:20px;color:#000;letter-spacing:0.000px;">L</span>
<span class="t" style="right:957.50px;top:773.3px;font-size:15px;line-height:20px;height:20px;color:#000;letter-spacing:0.000px;">54.000</span>
<span class="t" style="left:2891.5px;top:773.5px;font-size:15px;line-height:20px;height:20px;color:#000;letter-spacing:0.000px;">m</span>
<svg class="a" style="left:2484px;top:770px;width:18px;height:24px" viewBox="0 0 18 24"><path d="M1.500 0v24M1.500 12.500h14" stroke="#b0b0b0" stroke-width="1" stroke-dasharray="1 1" fill="none"/></svg>
<div class="a" style="left:2468px;top:794px;width:508.8000000000002px;height:24px;background:#f9f9f4;"></div>
<div class="a" style="left:2743.0px;top:794px;width:1px;height:24px;background:#dcdcdc;"></div>
<div class="a" style="left:2787.7px;top:794px;width:1px;height:24px;background:#dcdcdc;"></div>
<div class="a" style="left:2886.1px;top:794px;width:1px;height:24px;background:#dcdcdc;"></div>
<span class="t" style="left:2506.5px;top:797.5px;font-size:15px;line-height:20px;height:20px;color:#000;letter-spacing:0.167px;">Volumen</span>
<span class="t" style="left:2748px;top:797.5px;font-size:15px;line-height:20px;height:20px;color:#000;letter-spacing:0.000px;">V</span>
<span class="t" style="right:957.50px;top:797.3px;font-size:15px;line-height:20px;height:20px;color:#000;letter-spacing:0.000px;">3.283</span>
<span class="t" style="left:2891.5px;top:797.5px;font-size:15px;line-height:20px;height:20px;color:#000;letter-spacing:0.000px;">m<sup>3</sup></span>
<svg class="a" style="left:2484px;top:794px;width:18px;height:24px" viewBox="0 0 18 24"><path d="M1.500 0v24M1.500 12.500h14" stroke="#b0b0b0" stroke-width="1" stroke-dasharray="1 1" fill="none"/></svg>
<div class="a" style="left:2468px;top:818px;width:508.8000000000002px;height:24px;background:#f9f9f4;"></div>
<div class="a" style="left:2743.0px;top:818px;width:1px;height:24px;background:#dcdcdc;"></div>
<div class="a" style="left:2787.7px;top:818px;width:1px;height:24px;background:#dcdcdc;"></div>
<div class="a" style="left:2886.1px;top:818px;width:1px;height:24px;background:#dcdcdc;"></div>
<span class="t" style="left:2506.5px;top:821.5px;font-size:15px;line-height:20px;height:20px;color:#000;letter-spacing:0.177px;">Masse</span>
<span class="t" style="left:2748px;top:821.5px;font-size:15px;line-height:20px;height:20px;color:#000;letter-spacing:0.000px;">G</span>
<span class="t" style="right:957.50px;top:821.3px;font-size:15px;line-height:20px;height:20px;color:#000;letter-spacing:0.000px;">4.375</span>
<span class="t" style="left:2891.5px;top:821.5px;font-size:15px;line-height:20px;height:20px;color:#000;letter-spacing:0.000px;">t</span>
<svg class="a" style="left:2484px;top:818px;width:18px;height:24px" viewBox="0 0 18 24"><path d="M1.500 0v12M1.500 12.500h14" stroke="#b0b0b0" stroke-width="1" stroke-dasharray="1 1" fill="none"/></svg>
<div class="a" style="left:2444px;top:866px;width:532.8000000000002px;height:24px;background:#e2e2e2;"></div>
<svg class="a" style="left:2448px;top:870px;width:28px;height:15px" viewBox="0 0 28 15"><rect x=".6" y=".6" width="12.800" height="12.800" rx="1.500" fill="#fff" stroke="#777" stroke-width="1.100"/><path d="M3.500 7h7" stroke="#444" stroke-width="1.200"/><path d="M15 7h6" stroke="#aaa" stroke-width="1" stroke-dasharray="1 1"/></svg>
<span class="t" style="left:2476.7px;top:869.5px;font-size:15px;line-height:20px;height:20px;color:#000;letter-spacing:0.190px;">Wände</span>
<div class="a" style="left:2468px;top:890px;width:508.8000000000002px;height:24px;background:#f9f9f4;"></div>
<div class="a" style="left:2743.0px;top:890px;width:1px;height:24px;background:#dcdcdc;"></div>
<div class="a" style="left:2787.7px;top:890px;width:1px;height:24px;background:#dcdcdc;"></div>
<div class="a" style="left:2886.1px;top:890px;width:1px;height:24px;background:#dcdcdc;"></div>
<span class="t" style="left:2506.5px;top:893.5px;font-size:15px;line-height:20px;height:20px;color:#000;letter-spacing:0.150px;">Fläche</span>
<span class="t" style="left:2748px;top:893.5px;font-size:15px;line-height:20px;height:20px;color:#000;letter-spacing:0.000px;">A</span>
<span class="t" style="right:957.50px;top:893.3px;font-size:15px;line-height:20px;height:20px;color:#000;letter-spacing:0.000px;">37.000</span>
<span class="t" style="left:2891.5px;top:893.5px;font-size:15px;line-height:20px;height:20px;color:#000;letter-spacing:0.000px;">m<sup>2</sup></span>
<svg class="a" style="left:2484px;top:890px;width:18px;height:24px" viewBox="0 0 18 24"><path d="M1.500 0v24M1.500 12.500h14" stroke="#b0b0b0" stroke-width="1" stroke-dasharray="1 1" fill="none"/></svg>
<div class="a" style="left:2468px;top:914px;width:508.8000000000002px;height:24px;background:#f9f9f4;"></div>
<div class="a" style="left:2743.0px;top:914px;width:1px;height:24px;background:#dcdcdc;"></div>
<div class="a" style="left:2787.7px;top:914px;width:1px;height:24px;background:#dcdcdc;"></div>
<div class="a" style="left:2886.1px;top:914px;width:1px;height:24px;background:#dcdcdc;"></div>
<span class="t" style="left:2506.5px;top:917.5px;font-size:15px;line-height:20px;height:20px;color:#000;letter-spacing:0.167px;">Volumen</span>
<span class="t" style="left:2748px;top:917.5px;font-size:15px;line-height:20px;height:20px;color:#000;letter-spacing:0.000px;">V</span>
<span class="t" style="right:957.50px;top:917.3px;font-size:15px;line-height:20px;height:20px;color:#000;letter-spacing:0.000px;">11.100</span>
<span class="t" style="left:2891.5px;top:917.5px;font-size:15px;line-height:20px;height:20px;color:#000;letter-spacing:0.000px;">m<sup>3</sup></span>
<svg class="a" style="left:2484px;top:914px;width:18px;height:24px" viewBox="0 0 18 24"><path d="M1.500 0v24M1.500 12.500h14" stroke="#b0b0b0" stroke-width="1" stroke-dasharray="1 1" fill="none"/></svg>
<div class="a" style="left:2468px;top:938px;width:508.8000000000002px;height:24px;background:#f9f9f4;"></div>
<div class="a" style="left:2743.0px;top:938px;width:1px;height:24px;background:#dcdcdc;"></div>
<div class="a" style="left:2787.7px;top:938px;width:1px;height:24px;background:#dcdcdc;"></div>
<div class="a" style="left:2886.1px;top:938px;width:1px;height:24px;background:#dcdcdc;"></div>
<span class="t" style="left:2506.5px;top:941.5px;font-size:15px;line-height:20px;height:20px;color:#000;letter-spacing:0.177px;">Masse</span>
<span class="t" style="left:2748px;top:941.5px;font-size:15px;line-height:20px;height:20px;color:#000;letter-spacing:0.000px;">G</span>
<span class="t" style="right:957.50px;top:941.3px;font-size:15px;line-height:20px;height:20px;color:#000;letter-spacing:0.000px;">27.750</span>
<span class="t" style="left:2891.5px;top:941.5px;font-size:15px;line-height:20px;height:20px;color:#000;letter-spacing:0.000px;">t</span>
<svg class="a" style="left:2484px;top:938px;width:18px;height:24px" viewBox="0 0 18 24"><path d="M1.500 0v24M1.500 12.500h14" stroke="#b0b0b0" stroke-width="1" stroke-dasharray="1 1" fill="none"/></svg>
<div class="a" style="left:2468px;top:962px;width:508.8000000000002px;height:24px;background:#f9f9f4;"></div>
<div class="a" style="left:2743.0px;top:962px;width:1px;height:24px;background:#dcdcdc;"></div>
<div class="a" style="left:2787.7px;top:962px;width:1px;height:24px;background:#dcdcdc;"></div>
<div class="a" style="left:2886.1px;top:962px;width:1px;height:24px;background:#dcdcdc;"></div>
<span class="t" style="left:2506.5px;top:965.5px;font-size:15px;line-height:20px;height:20px;color:#000;letter-spacing:0.160px;">Volumen der Wände</span>
<span class="t" style="left:2748px;top:965.5px;font-size:15px;line-height:20px;height:20px;color:#000;letter-spacing:0.000px;">V<sub>sw</sub></span>
<span class="t" style="right:957.50px;top:965.3px;font-size:15px;line-height:20px;height:20px;color:#000;letter-spacing:0.000px;">9.000</span>
<span class="t" style="left:2891.5px;top:965.5px;font-size:15px;line-height:20px;height:20px;color:#000;letter-spacing:0.000px;">m<sup>3</sup></span>
<svg class="a" style="left:2484px;top:962px;width:18px;height:24px" viewBox="0 0 18 24"><path d="M1.500 0v24M1.500 12.500h14" stroke="#b0b0b0" stroke-width="1" stroke-dasharray="1 1" fill="none"/></svg>
<div class="a" style="left:2468px;top:986px;width:508.8000000000002px;height:24px;background:#f9f9f4;"></div>
<div class="a" style="left:2743.0px;top:986px;width:1px;height:24px;background:#dcdcdc;"></div>
<div class="a" style="left:2787.7px;top:986px;width:1px;height:24px;background:#dcdcdc;"></div>
<div class="a" style="left:2886.1px;top:986px;width:1px;height:24px;background:#dcdcdc;"></div>
<span class="t" style="left:2506.5px;top:989.5px;font-size:15px;line-height:20px;height:20px;color:#000;letter-spacing:0.162px;">Masse der Wände</span>
<span class="t" style="left:2748px;top:989.5px;font-size:15px;line-height:20px;height:20px;color:#000;letter-spacing:0.000px;">G<sub>sw</sub></span>
<span class="t" style="right:957.50px;top:989.3px;font-size:15px;line-height:20px;height:20px;color:#000;letter-spacing:0.000px;">22.500</span>
<span class="t" style="left:2891.5px;top:989.5px;font-size:15px;line-height:20px;height:20px;color:#000;letter-spacing:0.000px;">t</span>
<svg class="a" style="left:2484px;top:986px;width:18px;height:24px" viewBox="0 0 18 24"><path d="M1.500 0v24M1.500 12.500h14" stroke="#b0b0b0" stroke-width="1" stroke-dasharray="1 1" fill="none"/></svg>
<div class="a" style="left:2468px;top:1010px;width:508.8000000000002px;height:24px;background:#f9f9f4;"></div>
<div class="a" style="left:2743.0px;top:1010px;width:1px;height:24px;background:#dcdcdc;"></div>
<div class="a" style="left:2787.7px;top:1010px;width:1px;height:24px;background:#dcdcdc;"></div>
<div class="a" style="left:2886.1px;top:1010px;width:1px;height:24px;background:#dcdcdc;"></div>
<span class="t" style="left:2506.5px;top:1013.5px;font-size:15px;line-height:20px;height:20px;color:#000;letter-spacing:0.145px;">Volumen der wandartigen Träger</span>
<span class="t" style="left:2748px;top:1013.5px;font-size:15px;line-height:20px;height:20px;color:#000;letter-spacing:0.000px;">V<sub>db</sub></span>
<span class="t" style="right:957.50px;top:1013.3px;font-size:15px;line-height:20px;height:20px;color:#000;letter-spacing:0.000px;">0.000</span>
<span class="t" style="left:2891.5px;top:1013.5px;font-size:15px;line-height:20px;height:20px;color:#000;letter-spacing:0.000px;">m<sup>3</sup></span>
<svg class="a" style="left:2484px;top:1010px;width:18px;height:24px" viewBox="0 0 18 24"><path d="M1.500 0v24M1.500 12.500h14" stroke="#b0b0b0" stroke-width="1" stroke-dasharray="1 1" fill="none"/></svg>
<div class="a" style="left:2468px;top:1034px;width:508.8000000000002px;height:24px;background:#f9f9f4;"></div>
<div class="a" style="left:2743.0px;top:1034px;width:1px;height:24px;background:#dcdcdc;"></div>
<div class="a" style="left:2787.7px;top:1034px;width:1px;height:24px;background:#dcdcdc;"></div>
<div class="a" style="left:2886.1px;top:1034px;width:1px;height:24px;background:#dcdcdc;"></div>
<span class="t" style="left:2506.5px;top:1037.5px;font-size:15px;line-height:20px;height:20px;color:#000;letter-spacing:0.145px;">Masse der wandartigen Träger</span>
<span class="t" style="left:2748px;top:1037.5px;font-size:15px;line-height:20px;height:20px;color:#000;letter-spacing:0.000px;">G<sub>db</sub></span>
<span class="t" style="right:957.50px;top:1037.3px;font-size:15px;line-height:20px;height:20px;color:#000;letter-spacing:0.000px;">0.000</span>
<span class="t" style="left:2891.5px;top:1037.5px;font-size:15px;line-height:20px;height:20px;color:#000;letter-spacing:0.000px;">t</span>
<svg class="a" style="left:2484px;top:1034px;width:18px;height:24px" viewBox="0 0 18 24"><path d="M1.500 0v24M1.500 12.500h14" stroke="#b0b0b0" stroke-width="1" stroke-dasharray="1 1" fill="none"/></svg>
<div class="a" style="left:2468px;top:1058px;width:508.8000000000002px;height:24px;background:#f9f9f4;"></div>
<div class="a" style="left:2743.0px;top:1058px;width:1px;height:24px;background:#dcdcdc;"></div>
<div class="a" style="left:2787.7px;top:1058px;width:1px;height:24px;background:#dcdcdc;"></div>
<div class="a" style="left:2886.1px;top:1058px;width:1px;height:24px;background:#dcdcdc;"></div>
<span class="t" style="left:2506.5px;top:1061.5px;font-size:15px;line-height:20px;height:20px;color:#000;letter-spacing:0.147px;">Verhältnis=(G<sub>sw</sub>+G<sub>db</sub>)/G</span>
<span class="t" style="left:2748px;top:1061.5px;font-size:15px;line-height:20px;height:20px;color:#000;letter-spacing:0.000px;">η</span>
<span class="t" style="right:957.50px;top:1061.3px;font-size:15px;line-height:20px;height:20px;color:#000;letter-spacing:0.000px;">81.08</span>
<span class="t" style="left:2891.5px;top:1061.5px;font-size:15px;line-height:20px;height:20px;color:#000;letter-spacing:0.000px;">%</span>
<svg class="a" style="left:2484px;top:1058px;width:18px;height:24px" viewBox="0 0 18 24"><path d="M1.500 0v12M1.500 12.500h14" stroke="#b0b0b0" stroke-width="1" stroke-dasharray="1 1" fill="none"/></svg>
<div class="a" style="left:2444px;top:1106px;width:532.8000000000002px;height:24px;background:#e2e2e2;"></div>
<svg class="a" style="left:2448px;top:1110px;width:28px;height:15px" viewBox="0 0 28 15"><rect x=".6" y=".6" width="12.800" height="12.800" rx="1.500" fill="#fff" stroke="#777" stroke-width="1.100"/><path d="M3.500 7h7" stroke="#444" stroke-width="1.200"/><path d="M15 7h6" stroke="#aaa" stroke-width="1" stroke-dasharray="1 1"/></svg>
<span class="t" style="left:2476.7px;top:1109.5px;font-size:15px;line-height:20px;height:20px;color:#000;letter-spacing:0.175px;">Massen</span>
<div class="a" style="left:2468px;top:1130px;width:508.8000000000002px;height:24px;background:#f9f9f4;"></div>
<div class="a" style="left:2743.0px;top:1130px;width:1px;height:24px;background:#dcdcdc;"></div>
<div class="a" style="left:2787.7px;top:1130px;width:1px;height:24px;background:#dcdcdc;"></div>
<div class="a" style="left:2886.1px;top:1130px;width:1px;height:24px;background:#dcdcdc;"></div>
<span class="t" style="left:2506.5px;top:1133.5px;font-size:15px;line-height:20px;height:20px;color:#000;letter-spacing:0.171px;">Geschossmasse</span>
<span class="t" style="left:2748px;top:1133.5px;font-size:15px;line-height:20px;height:20px;color:#000;letter-spacing:0.000px;">G</span>
<span class="t" style="right:957.50px;top:1133.3px;font-size:15px;line-height:20px;height:20px;color:#000;letter-spacing:0.000px;">167.125</span>
<span class="t" style="left:2891.5px;top:1133.5px;font-size:15px;line-height:20px;height:20px;color:#000;letter-spacing:0.000px;">t</span>
<svg class="a" style="left:2484px;top:1130px;width:18px;height:24px" viewBox="0 0 18 24"><path d="M1.500 0v24M1.500 12.500h14" stroke="#b0b0b0" stroke-width="1" stroke-dasharray="1 1" fill="none"/></svg>
<div class="a" style="left:2468px;top:1154px;width:508.8000000000002px;height:24px;background:#f9f9f4;"></div>
<div class="a" style="left:2743.0px;top:1154px;width:1px;height:24px;background:#dcdcdc;"></div>
<div class="a" style="left:2787.7px;top:1154px;width:1px;height:24px;background:#dcdcdc;"></div>
<div class="a" style="left:2886.1px;top:1154px;width:1px;height:24px;background:#dcdcdc;"></div>
<span class="t" style="left:2506.5px;top:1157.5px;font-size:15px;line-height:20px;height:20px;color:#000;letter-spacing:0.149px;">Verhältnis=G/ΣG</span>
<span class="t" style="left:2748px;top:1157.5px;font-size:15px;line-height:20px;height:20px;color:#000;letter-spacing:0.000px;">η</span>
<span class="t" style="right:957.50px;top:1157.3px;font-size:15px;line-height:20px;height:20px;color:#000;letter-spacing:0.000px;">21.86</span>
<span class="t" style="left:2891.5px;top:1157.5px;font-size:15px;line-height:20px;height:20px;color:#000;letter-spacing:0.000px;">%</span>
<svg class="a" style="left:2484px;top:1154px;width:18px;height:24px" viewBox="0 0 18 24"><path d="M1.500 0v12M1.500 12.500h14" stroke="#b0b0b0" stroke-width="1" stroke-dasharray="1 1" fill="none"/></svg>
<div class="a" style="left:2444px;top:1202px;width:532.8000000000002px;height:24px;background:#e2e2e2;"></div>
<svg class="a" style="left:2448px;top:1206px;width:28px;height:15px" viewBox="0 0 28 15"><rect x=".6" y=".6" width="12.800" height="12.800" rx="1.500" fill="#fff" stroke="#777" stroke-width="1.100"/><path d="M3.500 7h7" stroke="#444" stroke-width="1.200"/><path d="M15 7h6" stroke="#aaa" stroke-width="1" stroke-dasharray="1 1"/></svg>
<span class="t" style="left:2476.7px;top:1205.5px;font-size:15px;line-height:20px;height:20px;color:#000;letter-spacing:0.170px;">Prüfsumme</span>
<div class="a" style="left:2468px;top:1226px;width:508.8000000000002px;height:24px;background:#f9f9f4;"></div>
<div class="a" style="left:2743.0px;top:1226px;width:1px;height:24px;background:#dcdcdc;"></div>
<div class="a" style="left:2787.7px;top:1226px;width:1px;height:24px;background:#dcdcdc;"></div>
<div class="a" style="left:2886.1px;top:1226px;width:1px;height:24px;background:#dcdcdc;"></div>
<span class="t" style="left:2506.5px;top:1229.5px;font-size:15px;line-height:20px;height:20px;color:#000;letter-spacing:0.157px;">Masse der Geschosse</span>
<span class="t" style="left:2748px;top:1229.5px;font-size:15px;line-height:20px;height:20px;color:#000;letter-spacing:0.000px;">ΣG<sub>s</sub></span>
<span class="t" style="right:957.50px;top:1229.3px;font-size:15px;line-height:20px;height:20px;color:#000;letter-spacing:0.000px;">764.670</span>
<span class="t" style="left:2891.5px;top:1229.5px;font-size:15px;line-height:20px;height:20px;color:#000;letter-spacing:0.000px;">t</span>
<svg class="a" style="left:2484px;top:1226px;width:18px;height:24px" viewBox="0 0 18 24"><path d="M1.500 0v24M1.500 12.500h14" stroke="#b0b0b0" stroke-width="1" stroke-dasharray="1 1" fill="none"/></svg>
<div class="a" style="left:2468px;top:1250px;width:508.8000000000002px;height:24px;background:#f9f9f4;"></div>
<div class="a" style="left:2743.0px;top:1250px;width:1px;height:24px;background:#dcdcdc;"></div>
<div class="a" style="left:2787.7px;top:1250px;width:1px;height:24px;background:#dcdcdc;"></div>
<div class="a" style="left:2886.1px;top:1250px;width:1px;height:24px;background:#dcdcdc;"></div>
<span class="t" style="left:2506.5px;top:1253.5px;font-size:15px;line-height:20px;height:20px;color:#000;letter-spacing:0.177px;">Gebäudemasse</span>
<span class="t" style="left:2748px;top:1253.5px;font-size:15px;line-height:20px;height:20px;color:#000;letter-spacing:0.000px;">ΣG</span>
<span class="t" style="right:957.50px;top:1253.3px;font-size:15px;line-height:20px;height:20px;color:#000;letter-spacing:0.000px;">764.670</span>
<span class="t" style="left:2891.5px;top:1253.5px;font-size:15px;line-height:20px;height:20px;color:#000;letter-spacing:0.000px;">t</span>
<svg class="a" style="left:2484px;top:1250px;width:18px;height:24px" viewBox="0 0 18 24"><path d="M1.500 0v24M1.500 12.500h14" stroke="#b0b0b0" stroke-width="1" stroke-dasharray="1 1" fill="none"/></svg>
<div class="a" style="left:2468px;top:1274px;width:508.8000000000002px;height:24px;background:#f9f9f4;"></div>
<div class="a" style="left:2743.0px;top:1274px;width:1px;height:24px;background:#dcdcdc;"></div>
<div class="a" style="left:2787.7px;top:1274px;width:1px;height:24px;background:#dcdcdc;"></div>
<div class="a" style="left:2886.1px;top:1274px;width:1px;height:24px;background:#dcdcdc;"></div>
<span class="t" style="left:2506.5px;top:1277.5px;font-size:15px;line-height:20px;height:20px;color:#000;letter-spacing:0.149px;">Verhältnis=ΣG<sub>s</sub>/ΣG</span>
<span class="t" style="left:2748px;top:1277.5px;font-size:15px;line-height:20px;height:20px;color:#000;letter-spacing:0.000px;">η</span>
<span class="t" style="right:957.50px;top:1277.3px;font-size:15px;line-height:20px;height:20px;color:#000;letter-spacing:0.000px;">100.00</span>
<span class="t" style="left:2891.5px;top:1277.5px;font-size:15px;line-height:20px;height:20px;color:#000;letter-spacing:0.000px;">%</span>
<svg class="a" style="left:2484px;top:1274px;width:18px;height:24px" viewBox="0 0 18 24"><path d="M1.500 0v12M1.500 12.500h14" stroke="#b0b0b0" stroke-width="1" stroke-dasharray="1 1" fill="none"/></svg>
<div class="a" style="left:2444px;top:1322px;width:532.8000000000002px;height:24px;background:#e2e2e2;"></div>
<svg class="a" style="left:2448px;top:1326px;width:28px;height:15px" viewBox="0 0 28 15"><rect x=".6" y=".6" width="12.800" height="12.800" rx="1.500" fill="#fff" stroke="#777" stroke-width="1.100"/><path d="M3.500 7h7" stroke="#444" stroke-width="1.200"/><path d="M15 7h6" stroke="#aaa" stroke-width="1" stroke-dasharray="1 1"/></svg>
<span class="t" style="left:2476.7px;top:1325.5px;font-size:15px;line-height:20px;height:20px;color:#000;letter-spacing:0.159px;">Geschossschwerpunkt</span>
<div class="a" style="left:2468px;top:1346px;width:508.8000000000002px;height:24px;background:#f9f9f4;"></div>
<div class="a" style="left:2743.0px;top:1346px;width:1px;height:24px;background:#dcdcdc;"></div>
<div class="a" style="left:2787.7px;top:1346px;width:1px;height:24px;background:#dcdcdc;"></div>
<div class="a" style="left:2886.1px;top:1346px;width:1px;height:24px;background:#dcdcdc;"></div>
<span class="t" style="left:2506.5px;top:1349.5px;font-size:15px;line-height:20px;height:20px;color:#000;letter-spacing:0.155px;">Schwerpunkt X</span>
<span class="t" style="left:2748px;top:1349.5px;font-size:15px;line-height:20px;height:20px;color:#000;letter-spacing:0.000px;">X<sub>C</sub></span>
<span class="t" style="right:957.50px;top:1349.3px;font-size:15px;line-height:20px;height:20px;color:#000;letter-spacing:0.000px;">10.000</span>
<span class="t" style="left:2891.5px;top:1349.5px;font-size:15px;line-height:20px;height:20px;color:#000;letter-spacing:0.000px;">m</span>
<svg class="a" style="left:2484px;top:1346px;width:18px;height:24px" viewBox="0 0 18 24"><path d="M1.500 0v24M1.500 12.500h14" stroke="#b0b0b0" stroke-width="1" stroke-dasharray="1 1" fill="none"/></svg>
<div class="a" style="left:2468px;top:1370px;width:508.8000000000002px;height:24px;background:#f9f9f4;"></div>
<div class="a" style="left:2743.0px;top:1370px;width:1px;height:24px;background:#dcdcdc;"></div>
<div class="a" style="left:2787.7px;top:1370px;width:1px;height:24px;background:#dcdcdc;"></div>
<div class="a" style="left:2886.1px;top:1370px;width:1px;height:24px;background:#dcdcdc;"></div>
<span class="t" style="left:2506.5px;top:1373.5px;font-size:15px;line-height:20px;height:20px;color:#000;letter-spacing:0.155px;">Schwerpunkt Y</span>
<span class="t" style="left:2748px;top:1373.5px;font-size:15px;line-height:20px;height:20px;color:#000;letter-spacing:0.000px;">Y<sub>C</sub></span>
<span class="t" style="right:957.50px;top:1373.3px;font-size:15px;line-height:20px;height:20px;color:#000;letter-spacing:0.000px;">3.917</span>
<span class="t" style="left:2891.5px;top:1373.5px;font-size:15px;line-height:20px;height:20px;color:#000;letter-spacing:0.000px;">m</span>
<svg class="a" style="left:2484px;top:1370px;width:18px;height:24px" viewBox="0 0 18 24"><path d="M1.500 0v24M1.500 12.500h14" stroke="#b0b0b0" stroke-width="1" stroke-dasharray="1 1" fill="none"/></svg>
<div class="a" style="left:2468px;top:1394px;width:508.8000000000002px;height:24px;background:#f9f9f4;"></div>
<div class="a" style="left:2743.0px;top:1394px;width:1px;height:24px;background:#dcdcdc;"></div>
<div class="a" style="left:2787.7px;top:1394px;width:1px;height:24px;background:#dcdcdc;"></div>
<div class="a" style="left:2886.1px;top:1394px;width:1px;height:24px;background:#dcdcdc;"></div>
<span class="t" style="left:2506.5px;top:1397.5px;font-size:15px;line-height:20px;height:20px;color:#000;letter-spacing:0.154px;">Schwerpunkt Z</span>
<span class="t" style="left:2748px;top:1397.5px;font-size:15px;line-height:20px;height:20px;color:#000;letter-spacing:0.000px;">Z<sub>C</sub></span>
<span class="t" style="right:957.50px;top:1397.3px;font-size:15px;line-height:20px;height:20px;color:#000;letter-spacing:0.000px;">-11.717</span>
<span class="t" style="left:2891.5px;top:1397.5px;font-size:15px;line-height:20px;height:20px;color:#000;letter-spacing:0.000px;">m</span>
<svg class="a" style="left:2484px;top:1394px;width:18px;height:24px" viewBox="0 0 18 24"><path d="M1.500 0v12M1.500 12.500h14" stroke="#b0b0b0" stroke-width="1" stroke-dasharray="1 1" fill="none"/></svg>
<div class="a" style="left:2444px;top:1442px;width:532.8000000000002px;height:24px;background:#e2e2e2;"></div>
<svg class="a" style="left:2448px;top:1446px;width:28px;height:15px" viewBox="0 0 28 15"><rect x=".6" y=".6" width="12.800" height="12.800" rx="1.500" fill="#fff" stroke="#777" stroke-width="1.100"/><path d="M3.500 7h7" stroke="#444" stroke-width="1.200"/><path d="M15 7h6" stroke="#aaa" stroke-width="1" stroke-dasharray="1 1"/></svg>
<span class="t" style="left:2476.7px;top:1445.5px;font-size:15px;line-height:20px;height:20px;color:#000;letter-spacing:0.162px;">Gebäudeschwerpunkt</span>
<div class="a" style="left:2468px;top:1466px;width:508.8000000000002px;height:24px;background:#f9f9f4;"></div>
<div class="a" style="left:2743.0px;top:1466px;width:1px;height:24px;background:#dcdcdc;"></div>
<div class="a" style="left:2787.7px;top:1466px;width:1px;height:24px;background:#dcdcdc;"></div>
<div class="a" style="left:2886.1px;top:1466px;width:1px;height:24px;background:#dcdcdc;"></div>
<span class="t" style="left:2506.5px;top:1469.5px;font-size:15px;line-height:20px;height:20px;color:#000;letter-spacing:0.155px;">Schwerpunkt X</span>
<span class="t" style="left:2748px;top:1469.5px;font-size:15px;line-height:20px;height:20px;color:#000;letter-spacing:0.000px;">X<sub>C</sub></span>
<span class="t" style="right:957.50px;top:1469.3px;font-size:15px;line-height:20px;height:20px;color:#000;letter-spacing:0.000px;">10.000</span>
<span class="t" style="left:2891.5px;top:1469.5px;font-size:15px;line-height:20px;height:20px;color:#000;letter-spacing:0.000px;">m</span>
<svg class="a" style="left:2484px;top:1466px;width:18px;height:24px" viewBox="0 0 18 24"><path d="M1.500 0v24M1.500 12.500h14" stroke="#b0b0b0" stroke-width="1" stroke-dasharray="1 1" fill="none"/></svg>
<div class="a" style="left:2468px;top:1490px;width:508.8000000000002px;height:24px;background:#f9f9f4;"></div>
<div class="a" style="left:2743.0px;top:1490px;width:1px;height:24px;background:#dcdcdc;"></div>
<div class="a" style="left:2787.7px;top:1490px;width:1px;height:24px;background:#dcdcdc;"></div>
<div class="a" style="left:2886.1px;top:1490px;width:1px;height:24px;background:#dcdcdc;"></div>
<span class="t" style="left:2506.5px;top:1493.5px;font-size:15px;line-height:20px;height:20px;color:#000;letter-spacing:0.155px;">Schwerpunkt Y</span>
<span class="t" style="left:2748px;top:1493.5px;font-size:15px;line-height:20px;height:20px;color:#000;letter-spacing:0.000px;">Y<sub>C</sub></span>
<span class="t" style="right:957.50px;top:1493.3px;font-size:15px;line-height:20px;height:20px;color:#000;letter-spacing:0.000px;">3.823</span>
<span class="t" style="left:2891.5px;top:1493.5px;font-size:15px;line-height:20px;height:20px;color:#000;letter-spacing:0.000px;">m</span>
<svg class="a" style="left:2484px;top:1490px;width:18px;height:24px" viewBox="0 0 18 24"><path d="M1.500 0v24M1.500 12.500h14" stroke="#b0b0b0" stroke-width="1" stroke-dasharray="1 1" fill="none"/></svg>
<div class="a" style="left:2468px;top:1514px;width:508.8000000000002px;height:24px;background:#f9f9f4;"></div>
<div class="a" style="left:2743.0px;top:1514px;width:1px;height:24px;background:#dcdcdc;"></div>
<div class="a" style="left:2787.7px;top:1514px;width:1px;height:24px;background:#dcdcdc;"></div>
<div class="a" style="left:2886.1px;top:1514px;width:1px;height:24px;background:#dcdcdc;"></div>
<span class="t" style="left:2506.5px;top:1517.5px;font-size:15px;line-height:20px;height:20px;color:#000;letter-spacing:0.154px;">Schwerpunkt Z</span>
<span class="t" style="left:2748px;top:1517.5px;font-size:15px;line-height:20px;height:20px;color:#000;letter-spacing:0.000px;">Z<sub>C</sub></span>
<span class="t" style="right:957.50px;top:1517.3px;font-size:15px;line-height:20px;height:20px;color:#000;letter-spacing:0.000px;">-7.888</span>
<span class="t" style="left:2891.5px;top:1517.5px;font-size:15px;line-height:20px;height:20px;color:#000;letter-spacing:0.000px;">m</span>
<svg class="a" style="left:2484px;top:1514px;width:18px;height:24px" viewBox="0 0 18 24"><path d="M1.500 0v12M1.500 12.500h14" stroke="#b0b0b0" stroke-width="1" stroke-dasharray="1 1" fill="none"/></svg>
<svg class="a" style="left:2454px;top:620px;width:3px;height:834px" viewBox="0 0 3 834"><path d="M1.500 0v834" stroke="#b0b0b0" stroke-width="1" stroke-dasharray="1 1"/></svg>
<svg class="a" style="left:2448px;top:606px;width:15px;height:15px" viewBox="0 0 15 15"><rect x=".6" y=".6" width="12.800" height="12.800" rx="1.500" fill="#fff" stroke="#777" stroke-width="1.100"/><path d="M3.500 7h7" stroke="#444" stroke-width="1.200"/></svg>
<svg class="a" style="left:2448px;top:750px;width:15px;height:15px" viewBox="0 0 15 15"><rect x=".6" y=".6" width="12.800" height="12.800" rx="1.500" fill="#fff" stroke="#777" stroke-width="1.100"/><path d="M3.500 7h7" stroke="#444" stroke-width="1.200"/></svg>
<svg class="a" style="left:2448px;top:870px;width:15px;height:15px" viewBox="0 0 15 15"><rect x=".6" y=".6" width="12.800" height="12.800" rx="1.500" fill="#fff" stroke="#777" stroke-width="1.100"/><path d="M3.500 7h7" stroke="#444" stroke-width="1.200"/></svg>
<svg class="a" style="left:2448px;top:1110px;width:15px;height:15px" viewBox="0 0 15 15"><rect x=".6" y=".6" width="12.800" height="12.800" rx="1.500" fill="#fff" stroke="#777" stroke-width="1.100"/><path d="M3.500 7h7" stroke="#444" stroke-width="1.200"/></svg>
<svg class="a" style="left:2448px;top:1206px;width:15px;height:15px" viewBox="0 0 15 15"><rect x=".6" y=".6" width="12.800" height="12.800" rx="1.500" fill="#fff" stroke="#777" stroke-width="1.100"/><path d="M3.500 7h7" stroke="#444" stroke-width="1.200"/></svg>
<svg class="a" style="left:2448px;top:1326px;width:15px;height:15px" viewBox="0 0 15 15"><rect x=".6" y=".6" width="12.800" height="12.800" rx="1.500" fill="#fff" stroke="#777" stroke-width="1.100"/><path d="M3.500 7h7" stroke="#444" stroke-width="1.200"/></svg>
<svg class="a" style="left:2448px;top:1446px;width:15px;height:15px" viewBox="0 0 15 15"><rect x=".6" y=".6" width="12.800" height="12.800" rx="1.500" fill="#fff" stroke="#777" stroke-width="1.100"/><path d="M3.500 7h7" stroke="#444" stroke-width="1.200"/></svg>
<div class="a" style="left:2935px;top:1599.6px;width:34px;height:27.4px;background:#cce4f7;"></div>
<svg class="a" style="left:2939px;top:1601px;width:27px;height:25px" viewBox="0 0 27 25"><rect x="2" y="8" width="17" height="15" fill="#8fb0e0" stroke="#3d5f9a" stroke-width="1.200"/><path d="M2 13h17M2 18h17M7.500 8v15M13.500 8v15" stroke="#3d5f9a" stroke-width="1.100"/><path d="M21 1l-5 11h4l-2.500 10 7-13h-4l4-8z" fill="#f7d21a" stroke="#c79a10" stroke-width=".8"/></svg>
<div class="a" style="left:3240.3px;top:1756.3px;width:121.6px;height:31.7px;background:#fff;border:1.500px solid #0a64b8;border-radius:4px;box-sizing:border-box;"></div>
<div class="a" style="left:3376px;top:1756.3px;width:121.6px;height:31.7px;background:#fdfdfd;border:1px solid #cfcfcf;border-radius:4px;box-sizing:border-box;"></div>
<div class="a" style="left:3512.3px;top:1756.3px;width:121.6px;height:31.7px;background:#fafafa;border:1px solid #e2e2e2;border-radius:4px;box-sizing:border-box;"></div>
<span class="t" style="left:3290px;top:1762.8px;font-size:15px;line-height:20px;height:20px;color:#000;letter-spacing:-0.086px;">OK</span>
<span class="t" style="left:3398.5px;top:1762.8px;font-size:15px;line-height:20px;height:20px;color:#000;letter-spacing:0.271px;">Abbrechen</span>
<span class="t" style="left:3535.5px;top:1762.8px;font-size:15px;line-height:20px;height:20px;color:#9c9c9c;letter-spacing:0.326px;">Anwenden</span>
<svg class="a" style="left:3633px;top:1787px;width:12px;height:12px" viewBox="0 0 12 12"><g fill="#a8a8a8"><rect x="8" y="0" width="2" height="2"/><rect x="4" y="4" width="2" height="2"/><rect x="8" y="4" width="2" height="2"/><rect x="0" y="8" width="2" height="2"/><rect x="4" y="8" width="2" height="2"/><rect x="8" y="8" width="2" height="2"/></g></svg>
<!-- preview -->
<div class="a" style="left:2992.3px;top:1674.6px;width:629.5px;height:40.4px;background:#fff;"></div>
<svg class="a" style="left:2992.3px;top:574.9px;width:629.5px;height:1099.7px;overflow:hidden" viewBox="2992.3 574.9 629.5 1099.7">
<defs><pattern id="ht" width="5" height="5" patternUnits="userSpaceOnUse" patternTransform="rotate(14)"><rect width="5" height="5" fill="#3a3433"/><path d="M0 1h5" stroke="#74423c" stroke-width=".9" stroke-dasharray="1.2 .8"/></pattern><pattern id="ht2" width="5" height="5" patternUnits="userSpaceOnUse" patternTransform="rotate(-35)"><rect width="5" height="5" fill="#3d2a28"/><path d="M0 1h5" stroke="#8a3a32" stroke-width="1"/></pattern><linearGradient id="psl" gradientUnits="userSpaceOnUse" x1="3255" y1="1112" x2="3300" y2="930"><stop offset="0" stop-color="#dfe2e5"/><stop offset=".35" stop-color="#d2d5d8"/><stop offset="1" stop-color="#c9cdd0"/></linearGradient></defs>
<rect x="2992.3" y="574.9" width="629.5" height="1099.7" fill="#1f1f1f"/>
<rect x="2954.0" y="1385.7" width="22" height="115.5" fill="#3f3f3f"/><rect x="2969.4" y="1385.7" width="6.6" height="113.5" fill="#393939"/>
<rect x="3099.0" y="1422.1" width="22" height="117.5" fill="#3f3f3f"/><rect x="3114.4" y="1422.1" width="6.6" height="115.5" fill="#393939"/>
<rect x="3244.0" y="1458.5" width="22" height="119.5" fill="#3f3f3f"/><rect x="3259.4" y="1458.5" width="6.6" height="117.5" fill="#393939"/>
<rect x="3164.5" y="1376.0" width="22" height="115.5" fill="#3f3f3f"/><rect x="3179.9" y="1376.0" width="6.6" height="113.5" fill="#393939"/>
<rect x="3309.5" y="1412.4" width="22" height="117.5" fill="#3f3f3f"/><rect x="3324.9" y="1412.4" width="6.6" height="115.5" fill="#393939"/>
<rect x="3375.0" y="1366.3" width="22" height="115.5" fill="#3f3f3f"/><rect x="3390.4" y="1366.3" width="6.6" height="113.5" fill="#393939"/>
<rect x="3440.5" y="1320.2" width="22" height="113.5" fill="#3f3f3f"/><rect x="3455.9" y="1320.2" width="6.6" height="111.5" fill="#393939"/>
<polygon points="2747.5,1331.1 3255.0,1458.5 3451.5,1320.2 2944.0,1192.8" fill="url(#ht)" />
<path d="M2747.5 1331.1L3255.0 1458.5L3451.5 1320.2" stroke="#565c62" stroke-width="1" fill="none"/>
<rect x="2959.0" y="1270.2" width="12" height="115.5" fill="#433834"/>
<rect x="3104.0" y="1306.6" width="12" height="115.5" fill="#433834"/>
<rect x="3249.0" y="1343.0" width="12" height="115.5" fill="#433834"/>
<rect x="3314.5" y="1296.9" width="12" height="115.5" fill="#433834"/>
<rect x="3380.0" y="1250.8" width="12" height="115.5" fill="#433834"/>
<rect x="3445.5" y="1204.7" width="12" height="115.5" fill="#433834"/>
<rect x="3169.5" y="1260.5" width="12" height="115.5" fill="#433834"/>
<polygon points="2747.5,1215.6 3255.0,1343.0 3451.5,1204.7 2944.0,1077.3" fill="url(#ht)" />
<path d="M2747.5 1215.6L3255.0 1343.0L3451.5 1204.7" stroke="#565c62" stroke-width="1" fill="none"/>
<rect x="2959.0" y="1154.7" width="12" height="115.5" fill="#433834"/>
<rect x="3104.0" y="1191.1" width="12" height="115.5" fill="#433834"/>
<rect x="3249.0" y="1227.5" width="12" height="115.5" fill="#433834"/>
<rect x="3314.5" y="1181.4" width="12" height="115.5" fill="#433834"/>
<rect x="3380.0" y="1135.3" width="12" height="115.5" fill="#433834"/>
<rect x="3445.5" y="1089.2" width="12" height="115.5" fill="#433834"/>
<rect x="3169.5" y="1145.0" width="12" height="115.5" fill="#433834"/>
<polygon points="2747.5,1100.1 3255.0,1227.5 3451.5,1089.2 2944.0,961.8" fill="url(#ht)" />
<path d="M2747.5 1100.1L3255.0 1227.5L3451.5 1089.2" stroke="#565c62" stroke-width="1" fill="none"/>
<rect x="2959.0" y="1039.2" width="12" height="115.5" fill="#433834"/>
<rect x="3104.0" y="1075.6" width="12" height="115.5" fill="#433834"/>
<rect x="3249.0" y="1112.0" width="12" height="115.5" fill="#433834"/>
<rect x="3314.5" y="1065.9" width="12" height="115.5" fill="#433834"/>
<rect x="3380.0" y="1019.8" width="12" height="115.5" fill="#433834"/>
<rect x="3445.5" y="973.7" width="12" height="115.5" fill="#433834"/>
<rect x="3169.5" y="1029.5" width="12" height="115.5" fill="#433834"/>
<polygon points="3255.0,1112.0 3451.5,973.7 3451.5,1003.7 3255.0,1142.0" fill="#4f3631" />
<polygon points="2747.5,984.6 3255.0,1112.0 3255.0,1134.0 2747.5,1006.6" fill="#48332f" />
<polygon points="2992.0,655.0 3020.0,650.0 3024.0,652.0 3024.0,752.0 2992.0,745.0" fill="#3d3d3f" />
<polygon points="2992.0,758.0 3026.0,757.0 3060.0,764.0 2992.0,812.0" fill="#38383a" />
<polygon points="2992.0,636.0 3020.0,643.0 3022.0,650.0 2992.0,645.0" fill="#43342a" />
<circle cx="3021" cy="717" r="11" fill="#2b3b4c"/>
<polygon points="2965.0,933.7 3255.0,1006.5 3451.5,868.2 3161.5,795.4" fill="#3a2d28" />
<polygon points="3096.0,740.0 3161.5,693.9 3161.5,795.4 3096.0,841.5" fill="#3c3c3d" />
<polygon points="3101.8,741.5 3167.3,695.4 3167.3,766.9 3101.8,838.0" fill="#414143" />
<polygon points="3158.5,685.9 3306.5,722.3 3310.5,728.3 3306.5,735.3 3164.5,698.9" fill="#46362b" />
<rect x="3445.5" y="762.7" width="12" height="211.0" fill="#43332e"/>
<rect x="3380.0" y="808.8" width="12" height="211.0" fill="#43332e"/>
<rect x="3314.5" y="854.9" width="12" height="211.0" fill="#43332e"/>
<rect x="3249.0" y="901.0" width="12" height="211.0" fill="#43332e"/>
<rect x="3104.0" y="864.6" width="12" height="211.0" fill="#43332e"/>
<rect x="2959.0" y="828.2" width="12" height="211.0" fill="#43332e"/>
<rect x="3169.5" y="818.5" width="12" height="211.0" fill="#43332e"/>
<polygon points="2965.0,828.2 3255.0,901.0 3451.5,762.7 3306.5,726.3 3241.0,772.4 3096.0,736.0" fill="#3a2e29" />
<polygon points="2965.0,828.2 3255.0,901.0 3255.0,905.0 2965.0,832.2" fill="#2e2420" />
<path d="M3110.0 864.6L3241.0 772.4" stroke="#3f5a4a" stroke-width="1" stroke-dasharray="3 2"/>
<rect x="3169.0" y="1030.5" width="13" height="116.5" fill="#d9a577" rx="5.9"/><rect x="3178.1" y="1030.5" width="3.9" height="114.5" fill="#b98a62"/>
<polygon points="2747.5,984.6 3255.0,1112.0 3451.5,973.7 2944.0,846.3" fill="url(#psl)" />
<circle cx="3018" cy="859" r="2.2" fill="#ff1a1a"/>
<circle cx="3162" cy="896" r="2.2" fill="#ff1a1a"/>
<circle cx="3307" cy="933" r="2.2" fill="#ff1a1a"/>
<circle cx="3452" cy="972" r="2.2" fill="#ff1a1a"/>
<circle cx="3061" cy="934" r="2.2" fill="#ff1a1a"/>
<circle cx="3097" cy="943" r="2.2" fill="#ff1a1a"/>
<circle cx="3241" cy="981" r="2.2" fill="#ff1a1a"/>
<circle cx="3175" cy="1027" r="2.2" fill="#ff1a1a"/>
<circle cx="3110" cy="1074" r="2.2" fill="#ff1a1a"/>
<circle cx="3255" cy="1111" r="2.2" fill="#ff1a1a"/>
<circle cx="3320" cy="1065" r="2.2" fill="#ff1a1a"/>
<circle cx="3385" cy="1019" r="2.2" fill="#ff1a1a"/>
<circle cx="3307" cy="935" r="2.2" fill="#ff1a1a"/>
<path d="M3045 905v30h35v-25M3080 920l-40 20 45 12 40-20M3222 960v28h30v-26M3215 990l45 12 30-20M3156 1008v28h30v-26M3148 1038l45 12 30-20" stroke="#b9bcc0" stroke-width=".8" fill="none" stroke-dasharray="2 1.5"/>
<polygon points="3297.0,932.0 3312.0,928.0 3320.0,936.0 3305.0,941.0" fill="#f0b8a0" />
<path d="M2992 920a34 30 0 0 1 32 28a32 10 0 0 1 -32 8z" fill="#2e9be8"/>
<rect x="2992" y="958" width="51" height="27" fill="#6a6a6c"/><text x="3042" y="980" font-size="17" fill="#1e8fe8" text-anchor="end">7.125 t</text>
<path d="M2992 1112a30 26 0 0 1 26 10v30h-26z" fill="#3a2e30"/>
<path d="M2992 1158a30 24 0 0 1 24 16l-24 6z" fill="#1d3f63"/><path d="M2992 1274a30 24 0 0 1 24 16l-24 6z" fill="#1d3f63"/>
<rect x="2958.5" y="1040.2" width="13" height="116.5" fill="#d9a577" rx="5.9"/><rect x="2967.6" y="1040.2" width="3.9" height="114.5" fill="#b98a62"/>
<rect x="3103.5" y="1076.6" width="13" height="116.5" fill="#d9a577" rx="5.9"/><rect x="3112.6" y="1076.6" width="3.9" height="114.5" fill="#b98a62"/>
<rect x="3445.0" y="974.7" width="13" height="116.5" fill="#d9a577" rx="5.9"/><rect x="3454.1" y="974.7" width="3.9" height="114.5" fill="#b98a62"/>
<rect x="3379.5" y="1020.8" width="13" height="116.5" fill="#d9a577" rx="5.9"/><rect x="3388.6" y="1020.8" width="3.9" height="114.5" fill="#b98a62"/>
<rect x="3314.0" y="1066.9" width="13" height="116.5" fill="#d9a577" rx="5.9"/><rect x="3323.1" y="1066.9" width="3.9" height="114.5" fill="#b98a62"/>
<rect x="3248.5" y="1113.0" width="13" height="116.5" fill="#d9a577" rx="5.9"/><rect x="3257.6" y="1113.0" width="3.9" height="114.5" fill="#b98a62"/>
<rect x="3153.5" y="1103.5" width="44" height="24" fill="#4a3a2e" opacity=".55"/><text x="3175.5" y="1121.5" font-size="17" fill="#ff9a1e" text-anchor="middle" letter-spacing="-.3">NKL 1</text>
<rect x="3088.0" y="1149.6" width="44" height="24" fill="#4a3a2e" opacity=".55"/><text x="3110.0" y="1167.6" font-size="17" fill="#ff9a1e" text-anchor="middle" letter-spacing="-.3">NKL 1</text>
<rect x="3429.5" y="1047.7" width="44" height="24" fill="#4a3a2e" opacity=".55"/><text x="3451.5" y="1065.7" font-size="17" fill="#ff9a1e" text-anchor="middle" letter-spacing="-.3">NKL 1</text>
<rect x="3364.0" y="1093.8" width="44" height="24" fill="#4a3a2e" opacity=".55"/><text x="3386.0" y="1111.8" font-size="17" fill="#ff9a1e" text-anchor="middle" letter-spacing="-.3">NKL 1</text>
<rect x="3298.5" y="1139.9" width="44" height="24" fill="#4a3a2e" opacity=".55"/><text x="3320.5" y="1157.9" font-size="17" fill="#ff9a1e" text-anchor="middle" letter-spacing="-.3">NKL 1</text>
<rect x="3233.0" y="1186.0" width="44" height="24" fill="#4a3a2e" opacity=".55"/><text x="3255.0" y="1204.0" font-size="17" fill="#ff9a1e" text-anchor="middle" letter-spacing="-.3">NKL 1</text>
<rect x="3217.0" y="1055.4" width="48" height="27" fill="#6f6f71"/><text x="3241.0" y="1075.4" font-size="17" fill="#ff9a1e" text-anchor="middle" letter-spacing="-.3">NKL 1</text>
<path d="M3451.5 973.7L3524.5 992.7V1107.7" stroke="#2a8fe8" stroke-width="1.6" fill="none"/>
<circle cx="3524.5" cy="992.7" r="2.5" fill="#2a8fe8"/>
<path d="M3451.5 762.7L3524.5 781.7M3451.5 868.2L3524.5 887.2M3451.5 1089.2L3524.5 1108.2M3451.5 1204.7L3524.5 1223.7M3451.5 1320.2L3524.5 1339.2M3524.5 781.7V1454.7L3451.5 1435.7" stroke="#1e4466" stroke-width="1" fill="none"/>
<text x="3533" y="998.7" font-size="17.5" fill="#2a8fe8" letter-spacing="-.3">-12.000 m</text>
<path d="M3476 1446l22-11" stroke="#5a6670" stroke-width="4"/>
<polygon points="3543.9,590.9 3601.3,605.5 3565.1,631.6 3506.8,617.4" fill="#767678" /><polygon points="3506.8,617.4 3565.1,631.6 3565.1,693.8 3506.8,678.4" fill="#9b9a9e" /><polygon points="3565.1,631.6 3601.3,605.5 3601.3,666.0 3565.1,693.8" fill="#7d7d80" /><path d="M3558.3 594.6L3521.4 621.0M3534.6 597.5L3592.3 612.0M3587.0 601.9L3550.5 628.0M3516.1 610.8L3574.2 625.0M3543.9 590.9L3601.3 605.5M3601.3 605.5L3565.1 631.6M3565.1 631.6L3506.8 617.4M3506.8 617.4L3543.9 590.9M3521.4 621.0L3521.4 682.2M3506.8 632.7L3565.1 647.1M3550.5 628.0L3550.5 690.0M3506.8 663.1L3565.1 678.3M3506.8 617.4L3565.1 631.6M3565.1 631.6L3565.1 693.8M3565.1 693.8L3506.8 678.4M3506.8 678.4L3506.8 617.4M3574.2 625.0L3574.2 686.9M3565.1 647.1L3601.3 620.6M3592.3 612.0L3592.3 673.0M3565.1 678.3L3601.3 650.9M3565.1 631.6L3601.3 605.5M3601.3 605.5L3601.3 666.0M3601.3 666.0L3565.1 693.8M3565.1 693.8L3565.1 631.6" stroke="#5a5a5c" stroke-width="1.2" fill="none"/><text x="3529" y="664" font-size="14" font-weight="bold" fill="#10c010" transform="skewY(15)" style="transform-origin:3529px 664px">-Y</text><text x="3579" y="658" font-size="13" font-weight="bold" fill="#d01010" transform="skewY(-33)" style="transform-origin:3579px 658px">-X</text><text x="3544" y="617" font-size="8" font-weight="bold" fill="#4a90e0">+Z</text>
<path d="M3055.5 1611L3086 1618" stroke="#e81010" stroke-width="2.4"/><path d="M3090 1619l-10-6 1 9z" fill="#e81010"/><path d="M3055.5 1611L3038 1623" stroke="#10c810" stroke-width="3"/><path d="M3033 1626l11-2-5-7z" fill="#10c810"/><path d="M3055.500 1611V1640" stroke="#4a9ae8" stroke-width="1.600"/><path d="M3055.500 1647l-4.500-10h9z" fill="#4a9ae8"/><circle cx="3055.500" cy="1611" r="3.200" fill="#f0e020"/><text x="3092" y="1629" font-size="17" fill="#e81010">X</text><text x="3024" y="1636" font-size="17" fill="#10c810">Y</text><text x="3050" y="1664" font-size="17" fill="#4a9ae8">Z</text>
</svg>
<!-- icons -->
<div class="a" style="left:6px;top:68px;width:0;height:34px;border-left:2px dotted #c0c0c0"></div>
<div class="a" style="left:6px;top:110px;width:0;height:34px;border-left:2px dotted #c0c0c0"></div>
<svg class="a" style="left:17.0px;top:70.0px;width:28px;height:28px" viewBox="0 0 28 28"><path d="M9 4h11l5 5v16H9z" fill="#fff" stroke="#666" stroke-width="1.2"/><path d="M20 4v5h5" fill="none" stroke="#666"/><path d="M3 16c5-6 12-6 17-2l2 5c-5-3-10-2-14 3z" fill="#4a7ac8" stroke="#1d3f80" stroke-width=".7"/><path d="M7 18c4-4 9-4 13-1M10 13l3 7M15 12l3 6" stroke="#bcd3f2" stroke-width=".7" fill="none"/><polygon points="7.0,1.0 8.3,4.8 12.2,4.0 9.5,7.0 12.2,10.0 8.3,9.2 7.0,13.0 5.7,9.2 1.8,10.0 4.5,7.0 1.8,4.0 5.7,4.8" fill="#f7ee18" stroke="#a89a10" stroke-width=".6"/></svg>
<svg class="a" style="left:53.6px;top:70.0px;width:28px;height:28px" viewBox="0 0 28 28"><path d="M2 9h9l2 2h8v14H2z" fill="#f3e9a0" stroke="#b8a840" stroke-width="1"/><path d="M2 25l4-11h20l-4 11z" fill="#f7efb5" stroke="#b8a840" stroke-width="1"/><path d="M19 14V8h-3.500l5.500-6 5.500 6H23v6z" fill="#109a3a"/></svg>
<svg class="a" style="left:89.0px;top:70.0px;width:28px;height:28px" viewBox="0 0 28 28"><path d="M5 2h8a12 12 0 0 1 0 24H5z" fill="#12b4e8"/><path d="M17 10a5 5 0 1 0 0 8" fill="none" stroke="#fff" stroke-width="3"/></svg>
<svg class="a" style="left:125.0px;top:70.0px;width:28px;height:28px" viewBox="0 0 28 28"><path d="M3 1h8a11 11 0 0 1 9 5L12 24H3z" fill="#12b4e8"/><circle cx="9" cy="12" r="4" fill="#7fd6f5"/><path d="M10 14l7-4 8 3v9l-8 5-7-4z" fill="#bfeaf9" stroke="#12a4d8" stroke-width="1.2"/><path d="M10 14l8 4 7-5M18 18v9M13.500 12l8 3.500M21.500 15.500v9M10 18.500l8 4 7-4.500M14 16v9" stroke="#12a4d8" stroke-width="1" fill="none"/></svg>
<svg class="a" style="left:161.0px;top:70.0px;width:28px;height:28px" viewBox="0 0 28 28"><rect x="2" y="11" width="24" height="15" fill="#f4f4f4" stroke="#666" stroke-width="1.600"/><path d="M5 16h3M10 16h13M5 20h3M10 20h13M5 23.500h3M10 23.500h13" stroke="#666" stroke-width="1.500"/><path d="M4 8c3-4 8-5 12-4l6 1v5l-7 2c-2 2-5 1-5-1z" fill="#eab890" stroke="#9a6a48" stroke-width=".8"/><path d="M20 3l6-1v9l-5 1z" fill="#5a86d8"/><path d="M22 1.500c3-1 5 0 5 2v7" fill="none" stroke="#2a4a98" stroke-width="1"/></svg>
<svg class="a" style="left:197.0px;top:70.0px;width:28px;height:28px" viewBox="0 0 28 28"><path d="M2 2h20l4 4v20H2z" fill="#666"/><rect x="6" y="4" width="15" height="9" fill="#f4f4f4"/><path d="M8 7h11M8 10h11" stroke="#666" stroke-width="1.400"/><rect x="8" y="17" width="12" height="9" fill="#f4f4f4"/><rect x="10" y="19" width="3.500" height="7" fill="#666"/></svg>
<svg class="a" style="left:233.0px;top:70.0px;width:28px;height:28px" viewBox="0 0 28 28"><rect x="7" y="2" width="14" height="6" fill="#666"/><path d="M2 10a2 2 0 0 1 2-2h20a2 2 0 0 1 2 2v10H2z" fill="#666"/><rect x="6" y="15" width="16" height="11" fill="#f4f4f4" stroke="#666" stroke-width="1.600"/><path d="M9 19h10M9 22.500h10" stroke="#666" stroke-width="1.500"/><circle cx="22.500" cy="11.500" r="1.100" fill="#fff"/></svg>
<svg class="a" style="left:267px;top:81px;width:10px;height:6px" viewBox="0 0 10 6"><path d="M0 0h10L5 6z" fill="#111"/></svg>
<svg class="a" style="left:288.0px;top:70.0px;width:28px;height:28px" viewBox="0 0 28 28"><path d="M7 3h12l6 6v17H7z" fill="#fdfdfd" stroke="#555" stroke-width="1.400"/><path d="M19 3v6h6" fill="none" stroke="#555" stroke-width="1.200"/><path d="M10 13h12M10 16.500h12M10 20h12M10 23.500h12" stroke="#555" stroke-width="1.400"/><polygon points="7.0,0.5 8.4,4.6 12.6,3.8 9.7,7.0 12.6,10.2 8.4,9.4 7.0,13.5 5.6,9.4 1.4,10.3 4.3,7.0 1.4,3.8 5.6,4.6" fill="#f7ee18" stroke="#a89a10" stroke-width=".6"/></svg>
<svg class="a" style="left:325.0px;top:70.0px;width:28px;height:28px" viewBox="0 0 28 28"><path d="M4 2h14l6 6v18H4z" fill="#fdfdfd" stroke="#555" stroke-width="1.400"/><path d="M18 2v6h6" fill="none" stroke="#555" stroke-width="1.200"/><path d="M7 8h8M7 12h14M7 15.500h14M7 19h14M7 22.500h14" stroke="#555" stroke-width="1.400"/></svg>
<div class="a" style="left:358.5px;top:68px;width:1.2px;height:32px;background:#b4b4b4;"></div>
<svg class="a" style="left:370.0px;top:70.0px;width:28px;height:28px" viewBox="0 0 28 28"><path d="M5 16c3-7 13-9 19-1" fill="none" stroke="#b0b0b0" stroke-width="3.200"/><path d="M1 9l3 10 9-3z" fill="#b0b0b0"/></svg>
<svg class="a" style="left:403px;top:81px;width:10px;height:6px" viewBox="0 0 10 6"><path d="M0 0h10L5 6z" fill="#999"/></svg>
<svg class="a" style="left:423.0px;top:70.0px;width:28px;height:28px" viewBox="0 0 28 28"><path d="M23 16c-3-7-13-9-19-1" fill="none" stroke="#b0b0b0" stroke-width="3.200"/><path d="M27 9l-3 10-9-3z" fill="#b0b0b0"/></svg>
<svg class="a" style="left:458px;top:81px;width:10px;height:6px" viewBox="0 0 10 6"><path d="M0 0h10L5 6z" fill="#999"/></svg>
<div class="a" style="left:478.0px;top:68px;width:1.2px;height:32px;background:#b4b4b4;"></div>
<div class="a" style="left:486.5px;top:68px;width:33px;height:32px;background:#cce4f7;border:1px solid #99c9ef;border-radius:4px;box-sizing:border-box;"></div>
<svg class="a" style="left:489.0px;top:70.0px;width:28px;height:28px" viewBox="0 0 28 28"><rect x="5" y="2" width="18" height="25" fill="#fff" stroke="#555" stroke-width="1.500"/><rect x="5" y="2" width="18" height="4" fill="#2a3fa8"/><path d="M8 10h2M12 10h8M8 13.500h2M12 13.500h8M8 17h2M12 17h8M8 20.500h2M12 20.500h8M8 24h2M12 24h8" stroke="#444" stroke-width="1.600"/></svg>
<svg class="a" style="left:525.0px;top:70.0px;width:28px;height:28px" viewBox="0 0 28 28"><rect x="1" y="2" width="26" height="25" fill="#8a8a8a" stroke="#555" stroke-width="1.300"/><rect x="1" y="2" width="26" height="4" fill="#2a3fa8"/><path d="M1 10.500h26M1 14.500h26M1 18.500h26M1 22.500h26M6 6v21M13 6v21M20 6v21" stroke="#e8e8e8" stroke-width="1.100"/></svg>
<svg class="a" style="left:561.0px;top:70.0px;width:28px;height:28px" viewBox="0 0 28 28"><path d="M4 1v26M1 20h26" stroke="#444" stroke-width="1.500"/><path d="M1.500 5L4 1l2.500 4M23 17.500l4 2.500-4 2.500" fill="none" stroke="#444" stroke-width="1.300"/><path d="M5 25l7-12 5 6 9-16" fill="none" stroke="#5a9ae8" stroke-width="1.300"/></svg>
<svg class="a" style="left:597.0px;top:70.0px;width:28px;height:28px" viewBox="0 0 28 28"><rect x="4" y="2" width="16" height="22" fill="#c8c8c8" stroke="#909090" stroke-width="1.300"/><path d="M4 6h16M4 10h16M4 14h16M4 18h16M9 2v22M15 2v22" stroke="#f0f0f0" stroke-width="1.100"/><rect x="8" y="21" width="14" height="6" fill="#b0b0b0" stroke="#8a8a8a"/></svg>
<svg class="a" style="left:633.5px;top:70.0px;width:28px;height:28px" viewBox="0 0 28 28"><rect x="1" y="2" width="26" height="24" fill="#f4f4f4" stroke="#555" stroke-width="1.500"/><rect x="1" y="2" width="26" height="3.500" fill="#2a3fa8"/><path d="M4 9l4 3-4 3M10 9l4 3-4 3M16 16h5" fill="none" stroke="#222" stroke-width="1.700"/></svg>
<svg class="a" style="left:669.0px;top:70.0px;width:28px;height:28px" viewBox="0 0 28 28"><rect x="6" y="1" width="16" height="14" fill="#f4f4f4" stroke="#666" stroke-width="1.300"/><rect x="6" y="1" width="16" height="3" fill="#2a3fa8"/><path d="M9 8h10M9 11h10" stroke="#888" stroke-width="1.200"/><rect x="1" y="14" width="26" height="13" rx="3" fill="#c4c4c4"/><text x="14" y="25" font-size="11.500" font-weight="bold" text-anchor="middle" fill="#333" letter-spacing="-.5">&gt;SC</text></svg>
<svg class="a" style="left:705.0px;top:70.0px;width:28px;height:28px" viewBox="0 0 28 28"><rect x="5" y="1" width="18" height="26" fill="#fff" stroke="#555" stroke-width="1.500"/><rect x="5" y="1" width="18" height="3.500" fill="#2a3fa8"/><path d="M8 8h12M8 11.500h12M8 15h12M8 18.500h12M8 22h12" stroke="#555" stroke-width="1.500"/><path d="M8 11.500h12M8 18.500h12" stroke="#5a86d8" stroke-width="1.500"/></svg>
<svg class="a" style="left:741.0px;top:70.0px;width:28px;height:28px" viewBox="0 0 28 28"><circle cx="14" cy="13" r="9.500" fill="#e8e8e8" stroke="#8a8a8a" stroke-width="1.500"/><circle cx="10.500" cy="11" r="1.300" fill="#666"/><circle cx="17.500" cy="11" r="1.300" fill="#666"/><path d="M9.500 15.500c2 3 7 3 9 0" fill="none" stroke="#666" stroke-width="1.400"/><path d="M3 10v7M25 10v7" stroke="#777" stroke-width="3"/><path d="M24 18c0 4-3 7-8 7" fill="none" stroke="#777" stroke-width="1.300"/></svg>
<div class="a" style="left:776.6px;top:68px;width:0;height:32px;border-left:2px dotted #c0c0c0"></div>
<svg class="a" style="left:793.5px;top:70.0px;width:28px;height:28px" viewBox="0 0 28 28"><path d="M10 3h14l-6 20H3z" fill="#f7ee60" stroke="#222" stroke-width="1.500"/><circle cx="10" cy="3" r="1.8" fill="#e81818"/><circle cx="24" cy="3" r="1.8" fill="#e81818"/><circle cx="18" cy="23" r="1.8" fill="#e81818"/><circle cx="3" cy="23" r="1.8" fill="#e81818"/><path d="M16 10v14l3.500-3 2.500 6 2.500-1-2.500-6h4.500z" fill="#fff" stroke="#222" stroke-width="1"/></svg>
<svg class="a" style="left:826px;top:81px;width:10px;height:6px" viewBox="0 0 10 6"><path d="M0 0h10L5 6z" fill="#111"/></svg>
<svg class="a" style="left:846.0px;top:70.0px;width:28px;height:28px" viewBox="0 0 28 28"><rect x="2" y="5" width="22" height="18" fill="#f7ee60" stroke="#222" stroke-width="1.500"/><path d="M5 11h8M9 7v8M6 19h6" stroke="#222" stroke-width="1.800"/><path d="M16 11v13l3-2.500 2.500 5.500 2.500-1-2.500-5.500h4.500z" fill="#fff" stroke="#222" stroke-width="1"/></svg>
<div class="a" style="left:882.5px;top:68px;width:0;height:32px;border-left:2px dotted #c0c0c0"></div>
<svg class="a" style="left:894.0px;top:70.0px;width:28px;height:28px" viewBox="0 0 28 28"><rect x="13" y="1" width="13" height="9" fill="#fff" stroke="#777" stroke-width="1"/><rect x="13" y="1" width="13" height="3" fill="#2a3fa8"/><rect x="18" y="13" width="8" height="5" fill="#18b838" stroke="#555"/><rect x="2" y="11" width="9" height="5" fill="#fff" stroke="#555" stroke-width="1.200"/><rect x="2" y="21" width="9" height="5" fill="#fff" stroke="#555" stroke-width="1.200"/><path d="M12 24c6 0 9-2 10-5" fill="none" stroke="#444" stroke-width="1.800"/><path d="M24 16l-5 2 4 3z" fill="#444"/><polygon points="7.0,1.0 8.3,4.8 12.2,4.0 9.5,7.0 12.2,10.0 8.3,9.2 7.0,13.0 5.7,9.2 1.8,10.0 4.5,7.0 1.8,4.0 5.7,4.8" fill="#f7ee18" stroke="#a89a10" stroke-width=".6"/></svg>
<svg class="a" style="left:930.0px;top:70.0px;width:28px;height:28px" viewBox="0 0 28 28"><rect x="13" y="1" width="13" height="9" fill="#fff" stroke="#777" stroke-width="1"/><rect x="13" y="1" width="13" height="3" fill="#2a3fa8"/><rect x="18" y="13" width="8" height="5" fill="#18b838" stroke="#555"/><rect x="2" y="3" width="9" height="5" fill="#fff" stroke="#555" stroke-width="1.200"/><rect x="2" y="11" width="9" height="5" fill="#fff" stroke="#555" stroke-width="1.200"/><rect x="2" y="21" width="9" height="5" fill="#fff" stroke="#555" stroke-width="1.200"/><path d="M12 24c6 0 9-2 10-5" fill="none" stroke="#444" stroke-width="1.800"/><path d="M24 16l-5 2 4 3z" fill="#444"/></svg>
<svg class="a" style="left:1422.5px;top:70.0px;width:28px;height:28px" viewBox="0 0 28 28"><path d="M1 6h20l-8 9v11l-4-3v-8z" fill="#6a8fd8"/><path d="M14 2l9 9M23 2l-9 9" stroke="#e81010" stroke-width="3.200"/></svg>
<svg class="a" style="left:1456px;top:81px;width:10px;height:6px" viewBox="0 0 10 6"><path d="M0 0h10L5 6z" fill="#111"/></svg>
<svg class="a" style="left:1477.0px;top:70.0px;width:28px;height:28px" viewBox="0 0 28 28"><path d="M8 12c-3 5-1 11 4 14" fill="none" stroke="#10a040" stroke-width="2.200"/><path d="M10 12l5 13M13 11v14" stroke="#222" stroke-width="1.300" stroke-dasharray="2 1.500"/><path d="M12 7c4-6 10-6 14 0-4 6-10 6-14 0z" fill="#fff" stroke="#1d1d5a" stroke-width="1.3"/><circle cx="19" cy="7" r="3.2" fill="#3a62c8"/><circle cx="19" cy="7" r="1.5" fill="#0a0a30"/></svg>
<svg class="a" style="left:1513.0px;top:70.0px;width:28px;height:28px" viewBox="0 0 28 28"><text x="14" y="9" font-size="10" font-weight="bold" text-anchor="middle" fill="#777">x.xx</text><path d="M10 12c-2 5 0 10 5 13" fill="none" stroke="#888" stroke-width="1.500"/><path d="M12 12l5 13M16 11v14" stroke="#777" stroke-width="1.200" stroke-dasharray="2 1.500"/></svg>
<svg class="a" style="left:1548.0px;top:70.0px;width:28px;height:28px" viewBox="0 0 28 28"><path d="M1 25h26" stroke="#222" stroke-width="2"/><path d="M8 8v9" stroke="#4a7ac8" stroke-width="3"/><path d="M3 16l5 7 5-7z" fill="#4a7ac8"/><path d="M13 7c4-6 10-6 14 0-4 6-10 6-14 0z" fill="#fff" stroke="#1d1d5a" stroke-width="1.3"/><circle cx="20" cy="7" r="3.2" fill="#3a62c8"/><circle cx="20" cy="7" r="1.5" fill="#0a0a30"/></svg>
<svg class="a" style="left:1584.0px;top:70.0px;width:28px;height:28px" viewBox="0 0 28 28"><text x="14" y="9" font-size="10" font-weight="bold" text-anchor="middle" fill="#777">x.xx</text><path d="M1 26h26" stroke="#999" stroke-width="2"/><path d="M9 12v6" stroke="#b0b0b0" stroke-width="3"/><path d="M4 17l5 7 5-7z" fill="#b0b0b0"/></svg>
<svg class="a" style="left:1620.0px;top:70.0px;width:28px;height:28px" viewBox="0 0 28 28"><path d="M3 8l8-3v18l-8 3z" fill="#c8c8c8"/><path d="M11 5l6 2v18l-6-2z" fill="#a8a8a8"/><path d="M17 7l6-2v15l-6 5z" fill="#d4d4d4"/><path d="M12 7c4-5 10-5 14 0-4 5-10 5-14 0z" fill="#eee" stroke="#999" stroke-width="1.200"/><circle cx="19" cy="7" r="2.800" fill="#aaa"/></svg>
<svg class="a" style="left:1656.0px;top:70.0px;width:28px;height:28px" viewBox="0 0 28 28"><rect x="2" y="9" width="20" height="18" fill="#7fb0e8" stroke="#2d4f8a" stroke-width="1.200"/><path d="M2 15h20M2 21h20M8.500 9v18M15.500 9v18" stroke="#2d4f8a" stroke-width="1.200"/><path d="M12 6c4-6 10-6 14 0-4 6-10 6-14 0z" fill="#fff" stroke="#1d1d5a" stroke-width="1.3"/><circle cx="19" cy="6" r="3.2" fill="#3a62c8"/><circle cx="19" cy="6" r="1.5" fill="#0a0a30"/></svg>
<svg class="a" style="left:1690px;top:81px;width:10px;height:6px" viewBox="0 0 10 6"><path d="M0 0h10L5 6z" fill="#111"/></svg>
<svg class="a" style="left:1709.7px;top:70.0px;width:28px;height:28px" viewBox="0 0 28 28"><path d="M1 24L27 14v-3z" fill="#1d3f98"/><path d="M14 19l13-8v8z" fill="#e02818"/><path d="M12 6c4-6 10-6 14 0-4 6-10 6-14 0z" fill="#fff" stroke="#1d1d5a" stroke-width="1.3"/><circle cx="19" cy="6" r="3.2" fill="#3a62c8"/><circle cx="19" cy="6" r="1.5" fill="#0a0a30"/></svg>
<svg class="a" style="left:1747.0px;top:70.0px;width:28px;height:28px" viewBox="0 0 28 28"><text x="14" y="9" font-size="10" font-weight="bold" text-anchor="middle" fill="#777">x.xx</text><path d="M1 25L27 15v-3z" fill="#999"/><path d="M14 20l13-8v8z" fill="#c4c4c4"/></svg>
<div class="a" style="left:1782.5px;top:68px;width:1.2px;height:32px;background:#b4b4b4;"></div>
<svg class="a" style="left:1792.7px;top:70.0px;width:28px;height:28px" viewBox="0 0 28 28"><rect x="12" y="1" width="14" height="10" fill="#fff" stroke="#777" stroke-width="1"/><rect x="12" y="1" width="14" height="3" fill="#2a3fa8"/><path d="M1 20L22 12v-2z" fill="#1d3f98"/><path d="M11 16l11-6v5z" fill="#e02818"/><circle cx="20" cy="21" r="4.500" fill="none" stroke="#5a86e8" stroke-width="3" stroke-dasharray="2.400 1.300"/><circle cx="20" cy="21" r="2" fill="#fff" stroke="#5a86e8" stroke-width="1.200"/></svg>
<svg class="a" style="left:1829.0px;top:70.0px;width:28px;height:28px" viewBox="0 0 28 28"><path d="M2 3v24M26 3v24" stroke="#111" stroke-width="2.200"/><path d="M2 10h24M2 19h24" stroke="#111" stroke-width="1.200"/><circle cx="7" cy="10" r="3" fill="#c8b878" stroke="#555"/><circle cx="14" cy="10" r="3" fill="#c8b878" stroke="#555"/><circle cx="21" cy="10" r="3" fill="#c8b878" stroke="#555"/><circle cx="7" cy="19" r="3" fill="#3a5ac8" stroke="#223"/><circle cx="14" cy="19" r="3" fill="#3a5ac8" stroke="#223"/><circle cx="21" cy="19" r="3" fill="#3a5ac8" stroke="#223"/></svg>
<svg class="a" style="left:1864px;top:81px;width:10px;height:6px" viewBox="0 0 10 6"><path d="M0 0h10L5 6z" fill="#111"/></svg>
<div class="a" style="left:1882.7px;top:68px;width:0;height:32px;border-left:2px dotted #c0c0c0"></div>
<svg class="a" style="left:1898.0px;top:70.0px;width:28px;height:28px" viewBox="0 0 28 28"><circle cx="10" cy="11" r="7" fill="none" stroke="#666" stroke-width="3"/><path d="M15 16l9 9" stroke="#666" stroke-width="3.500"/><path d="M14 2l10 10M24 2L14 12" stroke="#e81010" stroke-width="3.200"/></svg>
<svg class="a" style="left:1933.0px;top:70.0px;width:28px;height:28px" viewBox="0 0 28 28"><path d="M3 9l15-5 7 3v14l-15 5-7-3z" fill="#c4cdea" stroke="#7a86b8" stroke-width="1.300"/><path d="M3 9l7 3 15-5M10 12v14" fill="none" stroke="#7a86b8" stroke-width="1.300"/><path d="M18 4v14l-15 5M18 18l7 3" fill="none" stroke="#9aa4cc" stroke-width="1"/></svg>
<svg class="a" style="left:1970.0px;top:70.0px;width:28px;height:28px" viewBox="0 0 28 28"><path d="M3 10l13-4 7 3v13l-13 4-7-3z" fill="#c4cdea" stroke="#7a86b8" stroke-width="1.300"/><path d="M3 10l7 3 13-4M10 13v13" fill="none" stroke="#7a86b8" stroke-width="1.300"/><path d="M14 15l9-12 4 3-9 12-5 2z" fill="#f0b040" stroke="#a87820" stroke-width=".8"/><path d="M23 3l4 3 1-2-3-2.500z" fill="#e890a8"/></svg>
<svg class="a" style="left:2006.0px;top:70.0px;width:28px;height:28px" viewBox="0 0 28 28"><path d="M2 14l8-3 5 2v9l-8 3-5-2z" fill="#dfe3f3" stroke="#7a86b8" stroke-width="1.300"/><path d="M10 11l12-8h5v9l-12 10" fill="#c4cdea" stroke="#7a86b8" stroke-width="1.300"/><path d="M22 3v9M15 13l7-1" fill="none" stroke="#7a86b8" stroke-width="1.100"/><path d="M2 14l5 2 8-3M7 16v9" fill="none" stroke="#7a86b8" stroke-width="1.200"/></svg>
<div class="a" style="left:2042.2px;top:68px;width:1.2px;height:32px;background:#b4b4b4;"></div>
<svg class="a" style="left:2051.0px;top:70.0px;width:28px;height:28px" viewBox="0 0 28 28"><path d="M6 5h17" stroke="#10a040" stroke-width="1.600"/><path d="M20 1.500l5 3.500-5 3.500z" fill="#10a040"/><path d="M6 5v17" stroke="#1030d0" stroke-width="1.600"/><path d="M2.500 19l3.500 6 3.500-6z" fill="#1030d0"/><circle cx="6" cy="5" r="3" fill="#f0d020" stroke="#555" stroke-width=".6"/><text x="19" y="25" font-size="14" font-weight="bold" text-anchor="middle" fill="#111" letter-spacing="-.5">X</text></svg>
<svg class="a" style="left:2087.0px;top:70.0px;width:28px;height:28px" viewBox="0 0 28 28"><path d="M6 5h17" stroke="#d04010" stroke-width="1.600"/><path d="M20 1.500l5 3.500-5 3.500z" fill="#d04010"/><path d="M6 5v17" stroke="#1030d0" stroke-width="1.600"/><path d="M2.500 19l3.500 6 3.500-6z" fill="#1030d0"/><circle cx="6" cy="5" r="3" fill="#10a040" stroke="#555" stroke-width=".6"/><text x="19" y="25" font-size="14" font-weight="bold" text-anchor="middle" fill="#111" letter-spacing="-.5">-Y</text></svg>
<svg class="a" style="left:2123.0px;top:70.0px;width:28px;height:28px" viewBox="0 0 28 28"><path d="M6 5h17" stroke="#d04010" stroke-width="1.600"/><path d="M20 1.500l5 3.500-5 3.500z" fill="#d04010"/><path d="M6 5v17" stroke="#10a040" stroke-width="1.600"/><path d="M2.500 19l3.500 6 3.500-6z" fill="#10a040"/><circle cx="6" cy="5" r="3" fill="#f0d020" stroke="#555" stroke-width=".6"/><text x="19" y="25" font-size="14" font-weight="bold" text-anchor="middle" fill="#111" letter-spacing="-.5">Z</text></svg>
<svg class="a" style="left:2159.0px;top:70.0px;width:28px;height:28px" viewBox="0 0 28 28"><path d="M5 5h17" stroke="#10a040" stroke-width="1.600"/><path d="M8 1.500L3 5l5 3.500z" fill="#10a040"/><path d="M22 5v17" stroke="#1030d0" stroke-width="1.600"/><path d="M18.500 19l3.500 6 3.500-6z" fill="#1030d0"/><circle cx="22" cy="5" r="3" fill="#c03010" stroke="#555" stroke-width=".6"/><text x="9" y="25" font-size="14" font-weight="bold" text-anchor="middle" fill="#111" letter-spacing="-.5">-X</text></svg>
<svg class="a" style="left:2194px;top:81px;width:10px;height:6px" viewBox="0 0 10 6"><path d="M0 0h10L5 6z" fill="#111"/></svg>
<svg class="a" style="left:2216.0px;top:70.0px;width:28px;height:28px" viewBox="0 0 28 28"><rect x="1" y="1" width="11" height="11" fill="#f7ee60" stroke="#999"/><path d="M14 14L23 3l3 2.500-9 11z" fill="#666"/><path d="M9 13l6 5M13 12l1 5-5 1" stroke="#666" stroke-width="1.300" fill="none"/><path d="M12 17c5 0 8 3 8 7H4" fill="none" stroke="#666" stroke-width="2.200"/><path d="M3 26h20" stroke="#666" stroke-width="2.400"/></svg>
<svg class="a" style="left:2249px;top:81px;width:10px;height:6px" viewBox="0 0 10 6"><path d="M0 0h10L5 6z" fill="#111"/></svg>
<div class="a" style="left:2268.3px;top:68px;width:1.2px;height:32px;background:#b4b4b4;"></div>
<svg class="a" style="left:2279.7px;top:70.0px;width:28px;height:28px" viewBox="0 0 28 28"><path d="M2 12l7-2V5l9-3 6 2v16l-15 6-7-3z" fill="#5a7fc8"/><path d="M2 12l7 3v11l-7-3zM9 10l6 2.500V7L9 5z" fill="#7fa0e0"/><path d="M9 15l6-2.500V7l9-3v16l-15 6z" fill="#3d5fa8"/><path d="M9 5l9-3 6 2-9 3zM2 12l7-2 6 2.500-6 2.500z" fill="#a9c5f0"/></svg>
<svg class="a" style="left:2313.5px;top:81px;width:10px;height:6px" viewBox="0 0 10 6"><path d="M0 0h10L5 6z" fill="#111"/></svg>
<svg class="a" style="left:2334.0px;top:70.0px;width:28px;height:28px" viewBox="0 0 28 28"><path d="M1 17l16-5 10 3-16 5z" fill="#6d9bd8" stroke="#3d5f9a" stroke-width=".8"/></svg>
<svg class="a" style="left:2367px;top:81px;width:10px;height:6px" viewBox="0 0 10 6"><path d="M0 0h10L5 6z" fill="#111"/></svg>
<svg class="a" style="left:2387.5px;top:70.0px;width:28px;height:28px" viewBox="0 0 28 28"><text x="14" y="11" font-size="13" font-weight="bold" text-anchor="middle" fill="#111">10</text><path d="M3 14v12M25 14v12M3 20h22" stroke="#777" stroke-width="1.500"/><path d="M3 20l4-2.500v5zM25 20l-4-2.500v5z" fill="#777"/></svg>
<svg class="a" style="left:2422px;top:81px;width:10px;height:6px" viewBox="0 0 10 6"><path d="M0 0h10L5 6z" fill="#111"/></svg>
<svg class="a" style="left:2441.0px;top:70.0px;width:28px;height:28px" viewBox="0 0 28 28"><path d="M2 10l14-8h10v4l-14 8z" fill="#d0d0d0"/><path d="M2 10h12v3h-4v9h4v3H2v-3h4v-9H2z" fill="#8a8a8a"/><path d="M14 10l12-8v3l-12 8zM10 13l12-7v9l-12 7z" fill="#b4b4b4"/><path d="M14 22l12-7v3l-12 7z" fill="#c8c8c8"/></svg>
<svg class="a" style="left:2475px;top:81px;width:10px;height:6px" viewBox="0 0 10 6"><path d="M0 0h10L5 6z" fill="#999"/></svg>
<svg class="a" style="left:2496.0px;top:70.0px;width:28px;height:28px" viewBox="0 0 28 28"><path d="M6 8l12-3v15l-12 3z" fill="#8fa8d8" stroke="#555" stroke-width=".8"/><path d="M3 6l6-3h16l-3 4v15l-6 4H3z" fill="none" stroke="#e81818" stroke-width="1" stroke-dasharray="2 1.500"/><path d="M7 14h12" stroke="#111" stroke-width="1.300" stroke-dasharray="1.500 1"/><circle cx="3" cy="6" r="1.8" fill="#e81818"/><circle cx="9" cy="3" r="1.8" fill="#e81818"/><circle cx="25" cy="3" r="1.8" fill="#e81818"/><circle cx="22" cy="7" r="1.8" fill="#e81818"/><circle cx="3" cy="25" r="1.8" fill="#e81818"/><circle cx="16" cy="26" r="1.8" fill="#e81818"/><circle cx="22" cy="22" r="1.8" fill="#e81818"/><circle cx="14" cy="3" r="1.8" fill="#e81818"/><circle cx="3" cy="15" r="1.8" fill="#e81818"/><circle cx="22" cy="14" r="1.8" fill="#e81818"/><circle cx="12" cy="26" r="1.8" fill="#e81818"/><circle cx="24" cy="12" r="1.8" fill="#e81818"/></svg>
<svg class="a" style="left:2529.6px;top:70.0px;width:28px;height:28px" viewBox="0 0 28 28"><path d="M2 3l24 3v21L2 24z" fill="#ffa040"/><path d="M5 3.500v21M8 4v21M11 4.300v21M14 4.700v21M17 5v21M20 5.400v21M23 5.800v21" stroke="#e07818" stroke-width="1.100"/></svg>
<svg class="a" style="left:13.0px;top:112.0px;width:28px;height:28px" viewBox="0 0 28 28"><polygon points="11.0,2.5 12.6,7.3 17.5,6.2 14.2,10.0 17.5,13.7 12.6,12.7 11.0,17.5 9.4,12.7 4.5,13.8 7.8,10.0 4.5,6.3 9.4,7.3" fill="#f7ee18" stroke="#a89a10" stroke-width=".6"/><circle cx="17" cy="19" r="2.6" fill="#e81818"/></svg>
<svg class="a" style="left:51px;top:123px;width:10px;height:6px" viewBox="0 0 10 6"><path d="M0 0h10L5 6z" fill="#111"/></svg>
<svg class="a" style="left:70.5px;top:112.0px;width:28px;height:28px" viewBox="0 0 28 28"><path d="M4 25L24 5" stroke="#111" stroke-width="1.800"/><circle cx="4" cy="25" r="2.4" fill="#e81818"/><circle cx="24" cy="5" r="2.4" fill="#e81818"/><polygon points="9.0,2.0 10.5,6.5 15.1,5.5 11.9,9.0 15.1,12.5 10.5,11.5 9.0,16.0 7.5,11.5 2.9,12.5 6.1,9.0 2.9,5.5 7.5,6.5" fill="#f7ee18" stroke="#a89a10" stroke-width=".6"/></svg>
<svg class="a" style="left:108.0px;top:112.0px;width:28px;height:28px" viewBox="0 0 28 28"><path d="M3 26L23 3" stroke="#8aa8dc" stroke-width="4.500"/><path d="M3 26L23 3" stroke="#d4e2f5" stroke-width="1.500"/><circle cx="3" cy="26" r="2.4" fill="#e81818"/><circle cx="23" cy="3" r="2.4" fill="#e81818"/><path d="M16 19h9M16 27h9M20.500 19v8" stroke="#8a96c8" stroke-width="2"/><polygon points="8.0,2.0 9.5,6.5 14.1,5.5 10.9,9.0 14.1,12.5 9.5,11.5 8.0,16.0 6.5,11.5 1.9,12.5 5.1,9.0 1.9,5.5 6.5,6.5" fill="#f7ee18" stroke="#a89a10" stroke-width=".6"/></svg>
<svg class="a" style="left:141.6px;top:123px;width:10px;height:6px" viewBox="0 0 10 6"><path d="M0 0h10L5 6z" fill="#111"/></svg>
<svg class="a" style="left:162.0px;top:112.0px;width:28px;height:28px" viewBox="0 0 28 28"><path d="M10 4h12v15l-10 8" fill="none" stroke="#111" stroke-width="1.800"/><path d="M10 4v9" stroke="#111" stroke-width="1.800"/><circle cx="10" cy="4" r="2.3" fill="#e81818"/><circle cx="22" cy="4" r="2.3" fill="#e81818"/><circle cx="22" cy="19" r="2.3" fill="#e81818"/><circle cx="12" cy="27" r="2.3" fill="#e81818"/><circle cx="10" cy="13" r="2.3" fill="#e81818"/><polygon points="6.0,2.5 7.4,6.6 11.6,5.8 8.7,9.0 11.6,12.2 7.4,11.4 6.0,15.5 4.6,11.4 0.4,12.3 3.3,9.0 0.4,5.8 4.6,6.6" fill="#f7ee18" stroke="#a89a10" stroke-width=".6"/></svg>
<svg class="a" style="left:195px;top:123px;width:10px;height:6px" viewBox="0 0 10 6"><path d="M0 0h10L5 6z" fill="#111"/></svg>
<div class="a" style="left:215.5px;top:110px;width:1.2px;height:32px;background:#b4b4b4;"></div>
<svg class="a" style="left:223.5px;top:112.0px;width:28px;height:28px" viewBox="0 0 28 28"><path d="M5 26l6-10h8l6 10z" fill="#28a848"/><path d="M11 16h8l6 10" fill="none" stroke="#0a6828" stroke-width=".8"/><circle cx="15" cy="14" r="5" fill="#18883a"/><circle cx="13.500" cy="12.500" r="1.800" fill="#7fe09a"/><circle cx="16" cy="4" r="2.4" fill="#e81818"/><polygon points="9.0,1.0 10.5,5.5 15.1,4.5 11.9,8.0 15.1,11.5 10.5,10.5 9.0,15.0 7.5,10.5 2.9,11.5 6.1,8.0 2.9,4.5 7.5,5.5" fill="#f7ee18" stroke="#a89a10" stroke-width=".6"/></svg>
<svg class="a" style="left:262.0px;top:112.0px;width:28px;height:28px" viewBox="0 0 28 28"><path d="M5 14h20" stroke="#111" stroke-width="1.800"/><circle cx="5" cy="14" r="2.4" fill="#e81818"/><circle cx="25" cy="14" r="2.4" fill="#e81818"/><path d="M3 27l4-6h5l3 6zM15 27l4-6h5l3 6z" fill="#28a848"/><circle cx="9.500" cy="19.500" r="3" fill="#18883a"/><circle cx="21.500" cy="19.500" r="3" fill="#18883a"/><polygon points="12.0,0.0 13.5,4.5 18.1,3.5 14.9,7.0 18.1,10.5 13.5,9.5 12.0,14.0 10.5,9.5 5.9,10.5 9.1,7.0 5.9,3.5 10.5,4.5" fill="#f7ee18" stroke="#a89a10" stroke-width=".6"/></svg>
<svg class="a" style="left:297.5px;top:112.0px;width:28px;height:28px" viewBox="0 0 28 28"><path d="M3 15l16-3 8 3-16 4z" fill="#7fa8dc" stroke="#3d5f9a" stroke-width=".8"/><path d="M5 19v6M9 20v6M13 20v6M17 19v6M21 18v6M25 17v6M3 22h5M7 24h5M11 24h5M15 23h5M19 22h5" stroke="#28b848" stroke-width="1.600"/><polygon points="10.0,0.0 11.5,4.5 16.1,3.5 12.9,7.0 16.1,10.5 11.5,9.5 10.0,14.0 8.5,9.5 3.9,10.5 7.1,7.0 3.9,3.5 8.5,4.5" fill="#f7ee18" stroke="#a89a10" stroke-width=".6"/></svg>
<div class="a" style="left:334.5px;top:110px;width:1.2px;height:32px;background:#b4b4b4;"></div>
<svg class="a" style="left:348.0px;top:112.0px;width:28px;height:28px" viewBox="0 0 28 28"><rect x="8" y="12" width="18" height="13" fill="#8fb0e0" stroke="#3d5f9a" stroke-width="1.200"/><circle cx="8" cy="12" r="2.3" fill="#e81818"/><circle cx="26" cy="25" r="2.3" fill="#e81818"/><polygon points="9.0,1.0 10.5,5.5 15.1,4.5 11.9,8.0 15.1,11.5 10.5,10.5 9.0,15.0 7.5,10.5 2.9,11.5 6.1,8.0 2.9,4.5 7.5,5.5" fill="#f7ee18" stroke="#a89a10" stroke-width=".6"/></svg>
<svg class="a" style="left:380px;top:123px;width:10px;height:6px" viewBox="0 0 10 6"><path d="M0 0h10L5 6z" fill="#111"/></svg>
<svg class="a" style="left:401.0px;top:112.0px;width:28px;height:28px" viewBox="0 0 28 28"><path d="M6 12c6-6 14-6 20 0l-4 12c-4-3-8-3-12 0z" fill="#8fb0e0" stroke="#3d5f9a" stroke-width="1.200"/><path d="M8 22c2-4 2-8 0-11" fill="none" stroke="#3d5f9a"/><circle cx="10" cy="14" r="2.3" fill="#e81818"/><circle cx="25" cy="15" r="2.3" fill="#e81818"/><circle cx="15" cy="19" r="2.3" fill="#e81818"/><circle cx="11" cy="24" r="2.3" fill="#e81818"/><polygon points="9.0,0.0 10.5,4.5 15.1,3.5 11.9,7.0 15.1,10.5 10.5,9.5 9.0,14.0 7.5,9.5 2.9,10.5 6.1,7.0 2.9,3.5 7.5,4.5" fill="#f7ee18" stroke="#a89a10" stroke-width=".6"/></svg>
<svg class="a" style="left:433px;top:123px;width:10px;height:6px" viewBox="0 0 10 6"><path d="M0 0h10L5 6z" fill="#111"/></svg>
<svg class="a" style="left:455.6px;top:112.0px;width:28px;height:28px" viewBox="0 0 28 28"><rect x="7" y="7" width="19" height="19" fill="#5f84c8" stroke="#2d4f8a" stroke-width="1"/><rect x="10.500" y="10.500" width="12" height="12" fill="#f8f8f8" stroke="#2d4f8a" stroke-width=".8"/><circle cx="8" cy="8" r="2.3" fill="#e81818"/><circle cx="25" cy="8" r="2.3" fill="#e81818"/><circle cx="8" cy="25" r="2.3" fill="#e81818"/><circle cx="25" cy="25" r="2.3" fill="#e81818"/><polygon points="8.0,0.0 9.3,3.8 13.2,3.0 10.5,6.0 13.2,9.0 9.3,8.2 8.0,12.0 6.7,8.2 2.8,9.0 5.5,6.0 2.8,3.0 6.7,3.8" fill="#f7ee18" stroke="#a89a10" stroke-width=".6"/></svg>
<svg class="a" style="left:487px;top:123px;width:10px;height:6px" viewBox="0 0 10 6"><path d="M0 0h10L5 6z" fill="#111"/></svg>
<svg class="a" style="left:509.0px;top:112.0px;width:28px;height:28px" viewBox="0 0 28 28"><path d="M4 12l8 3v11l-8-4zM12 15l12-6v11l-12 6z" fill="#7fa0dc" stroke="#3d5f9a" stroke-width=".8"/><path d="M4 12l12-5 8 2-12 6z" fill="#b8d0f0"/><path d="M6 16v-6M14 20v-7M24 12V3" stroke="#2d4f8a" stroke-width="1.400"/><path d="M4 11l2-4 2 4zM12 14l2-4 2 4zM22 5l2-4 2 4z" fill="#2d4f8a"/><circle cx="4" cy="22" r="2.2" fill="#e81818"/><circle cx="12" cy="26" r="2.2" fill="#e81818"/><circle cx="24" cy="18" r="2.2" fill="#e81818"/><polygon points="9.0,-0.5 10.4,3.6 14.6,2.8 11.7,6.0 14.6,9.2 10.4,8.4 9.0,12.5 7.6,8.4 3.4,9.3 6.3,6.0 3.4,2.8 7.6,3.6" fill="#f7ee18" stroke="#a89a10" stroke-width=".6"/></svg>
<svg class="a" style="left:541.6px;top:123px;width:10px;height:6px" viewBox="0 0 10 6"><path d="M0 0h10L5 6z" fill="#111"/></svg>
<svg class="a" style="left:562.0px;top:112.0px;width:28px;height:28px" viewBox="0 0 28 28"><path d="M4 13l14 1v13L4 25z" fill="#8fb0e0"/><path d="M18 14l7-3v12l-7 4z" fill="#5f84c8"/><path d="M4 13l8-3 13 1-7 3z" fill="#c4d8f4"/><rect x="14" y="2" width="13" height="9" fill="#fff" stroke="#777" stroke-width="1"/><rect x="14" y="2" width="13" height="3" fill="#2a3fa8"/><polygon points="8.0,1.0 9.5,5.5 14.1,4.5 10.9,8.0 14.1,11.5 9.5,10.5 8.0,15.0 6.5,10.5 1.9,11.5 5.1,8.0 1.9,4.5 6.5,5.5" fill="#f7ee18" stroke="#a89a10" stroke-width=".6"/></svg>
<div class="a" style="left:598.5px;top:110px;width:1.2px;height:32px;background:#b4b4b4;"></div>
<svg class="a" style="left:603.6px;top:112.0px;width:28px;height:28px" viewBox="0 0 28 28"><path d="M16 3v24" stroke="#8aa8dc" stroke-width="4"/><path d="M16 3v24" stroke="#d4e2f5" stroke-width="1.300"/><circle cx="16" cy="3" r="2.6" fill="#e81818"/><circle cx="16" cy="27" r="2.6" fill="#e81818"/><polygon points="9.0,3.0 10.5,7.5 15.1,6.5 11.9,10.0 15.1,13.5 10.5,12.5 9.0,17.0 7.5,12.5 2.9,13.5 6.1,10.0 2.9,6.5 7.5,7.5" fill="#f7ee18" stroke="#a89a10" stroke-width=".6"/></svg>
<svg class="a" style="left:642px;top:123px;width:10px;height:6px" viewBox="0 0 10 6"><path d="M0 0h10L5 6z" fill="#111"/></svg>
<div class="a" style="left:663.5px;top:110px;width:1.2px;height:32px;background:#b4b4b4;"></div>
<svg class="a" style="left:670.7px;top:112.0px;width:28px;height:28px" viewBox="0 0 28 28"><path d="M15 5V17" stroke="#5a86d8" stroke-width="2"/><path d="M12 16l3 5 3-5z" fill="#5a86d8"/><circle cx="15" cy="25" r="2.6" fill="#e81818"/><polygon points="10.0,0.0 11.5,4.5 16.1,3.5 12.9,7.0 16.1,10.5 11.5,9.5 10.0,14.0 8.5,9.5 3.9,10.5 7.1,7.0 3.9,3.5 8.5,4.5" fill="#f7ee18" stroke="#a89a10" stroke-width=".6"/></svg>
<svg class="a" style="left:707.5px;top:112.0px;width:28px;height:28px" viewBox="0 0 28 28"><path d="M5 10h18" stroke="#5a86d8" stroke-width="1.500"/><path d="M5 10V19" stroke="#5a86d8" stroke-width="2"/><path d="M2 18l3 5 3-5z" fill="#5a86d8"/><path d="M11 10V19" stroke="#5a86d8" stroke-width="2"/><path d="M8 18l3 5 3-5z" fill="#5a86d8"/><path d="M17 10V19" stroke="#5a86d8" stroke-width="2"/><path d="M14 18l3 5 3-5z" fill="#5a86d8"/><path d="M23 10V19" stroke="#5a86d8" stroke-width="2"/><path d="M20 18l3 5 3-5z" fill="#5a86d8"/><path d="M3 25h22" stroke="#111" stroke-width="1.800"/><circle cx="3" cy="25" r="2.4" fill="#e81818"/><circle cx="25" cy="25" r="2.4" fill="#e81818"/><polygon points="10.0,-0.5 11.4,3.6 15.6,2.8 12.7,6.0 15.6,9.2 11.4,8.4 10.0,12.5 8.6,8.4 4.4,9.3 7.3,6.0 4.4,2.8 8.6,3.6" fill="#f7ee18" stroke="#a89a10" stroke-width=".6"/></svg>
<svg class="a" style="left:742.8px;top:112.0px;width:28px;height:28px" viewBox="0 0 28 28"><path d="M5 10h18" stroke="#5a86d8" stroke-width="1.500"/><path d="M5 10V19" stroke="#5a86d8" stroke-width="2"/><path d="M2 18l3 5 3-5z" fill="#5a86d8"/><path d="M11 10V19" stroke="#5a86d8" stroke-width="2"/><path d="M8 18l3 5 3-5z" fill="#5a86d8"/><path d="M17 10V19" stroke="#5a86d8" stroke-width="2"/><path d="M14 18l3 5 3-5z" fill="#5a86d8"/><path d="M23 10V19" stroke="#5a86d8" stroke-width="2"/><path d="M20 18l3 5 3-5z" fill="#5a86d8"/><path d="M3 25h22" stroke="#8aa8dc" stroke-width="4"/><circle cx="3" cy="25" r="2.4" fill="#e81818"/><circle cx="25" cy="25" r="2.4" fill="#e81818"/><polygon points="10.0,-0.5 11.4,3.6 15.6,2.8 12.7,6.0 15.6,9.2 11.4,8.4 10.0,12.5 8.6,8.4 4.4,9.3 7.3,6.0 4.4,2.8 8.6,3.6" fill="#f7ee18" stroke="#a89a10" stroke-width=".6"/></svg>
<svg class="a" style="left:779.5px;top:112.0px;width:28px;height:28px" viewBox="0 0 28 28"><path d="M4 9l12-3 10 2v13l-12 5-10-3z" fill="none" stroke="#4a70b8" stroke-width="1.300"/><path d="M4 9l10 3 12-4M14 12v14" fill="none" stroke="#4a70b8" stroke-width="1.300"/><path d="M6 8V17" stroke="#5a86d8" stroke-width="2"/><path d="M3 16l3 5 3-5z" fill="#5a86d8"/><path d="M12 9V18" stroke="#5a86d8" stroke-width="2"/><path d="M9 17l3 5 3-5z" fill="#5a86d8"/><path d="M19 9V17" stroke="#5a86d8" stroke-width="2"/><path d="M16 16l3 5 3-5z" fill="#5a86d8"/><path d="M25 8V15" stroke="#5a86d8" stroke-width="2"/><path d="M22 14l3 5 3-5z" fill="#5a86d8"/><circle cx="4" cy="23" r="2" fill="#e81818"/><circle cx="14" cy="27" r="2" fill="#e81818"/><circle cx="26" cy="22" r="2" fill="#e81818"/><polygon points="9.0,-0.5 10.4,3.6 14.6,2.8 11.7,6.0 14.6,9.2 10.4,8.4 9.0,12.5 7.6,8.4 3.4,9.3 6.3,6.0 3.4,2.8 7.6,3.6" fill="#f7ee18" stroke="#a89a10" stroke-width=".6"/></svg>
<svg class="a" style="left:817.0px;top:112.0px;width:28px;height:28px" viewBox="0 0 28 28"><path d="M8 5c-3 8 0 17 8 21" fill="none" stroke="#10a040" stroke-width="2.200"/><path d="M11 4l7 20M17 3v22" stroke="#111" stroke-width="1.500" stroke-dasharray="3 1.500"/><path d="M19 21h8M19 28h8M23 21v7" stroke="#555" stroke-width="1.800"/><polygon points="8.0,1.5 9.4,5.6 13.6,4.8 10.7,8.0 13.6,11.2 9.4,10.4 8.0,14.5 6.6,10.4 2.4,11.3 5.3,8.0 2.4,4.8 6.6,5.6" fill="#f7ee18" stroke="#a89a10" stroke-width=".6"/></svg>
<svg class="a" style="left:850.7px;top:123px;width:10px;height:6px" viewBox="0 0 10 6"><path d="M0 0h10L5 6z" fill="#111"/></svg>
<svg class="a" style="left:869.5px;top:112.0px;width:28px;height:28px" viewBox="0 0 28 28"><path d="M3 18l18-5 4 9-18 5z" fill="none" stroke="#1a8ad8" stroke-width="2" stroke-dasharray="2.500 1.500"/><path d="M13 4V17" stroke="#5a86d8" stroke-width="2"/><path d="M10 16l3 5 3-5z" fill="#5a86d8"/><polygon points="9.0,0.0 10.5,4.5 15.1,3.5 11.9,7.0 15.1,10.5 10.5,9.5 9.0,14.0 7.5,9.5 2.9,10.5 6.1,7.0 2.9,3.5 7.5,4.5" fill="#f7ee18" stroke="#a89a10" stroke-width=".6"/></svg>
<svg class="a" style="left:905px;top:123px;width:10px;height:6px" viewBox="0 0 10 6"><path d="M0 0h10L5 6z" fill="#111"/></svg>
<div class="a" style="left:920.7px;top:110px;width:0;height:32px;border-left:2px dotted #c0c0c0"></div>
<svg class="a" style="left:937.5px;top:112.0px;width:28px;height:28px" viewBox="0 0 28 28"><path d="M1 9h20l-8 8v10l-4-3v-7z" fill="#6a8fd8"/><rect x="13" y="1" width="14" height="10" fill="#fff" stroke="#777" stroke-width="1"/><rect x="13" y="1" width="14" height="3" fill="#2a3fa8"/></svg>
<div class="a" style="left:975.5px;top:110px;width:1.2px;height:32px;background:#b4b4b4;"></div>
<svg class="a" style="left:984.8px;top:112.0px;width:28px;height:28px" viewBox="0 0 28 28"><path d="M4 3v23M1 23h26" stroke="#444" stroke-width="1.500"/><path d="M1.500 7L4 3l2.500 4M23 20.500l4 2.500-4 2.500" fill="none" stroke="#444" stroke-width="1.300"/><path d="M5 21l6-8 4 4 5-8" fill="none" stroke="#5a9ae8" stroke-width="1.300"/><rect x="14" y="1" width="13" height="9" fill="#fff" stroke="#777" stroke-width="1"/><rect x="14" y="1" width="13" height="3" fill="#2a3fa8"/></svg>
<svg class="a" style="left:1022.0px;top:112.0px;width:28px;height:28px" viewBox="0 0 28 28"><path d="M7 25V8h14v17" fill="none" stroke="#777" stroke-width="2.500"/><path d="M7 8c-5 4-5 12 0 16M21 8c5 4 5 12 0 16M7 8c4 4 10 4 14 0" fill="none" stroke="#777" stroke-width="1.200"/><path d="M4 26h6M18 26h6" stroke="#777" stroke-width="2"/></svg>
<svg class="a" style="left:1059.0px;top:112.0px;width:28px;height:28px" viewBox="0 0 28 28"><rect x="2" y="3" width="24" height="22" fill="#d8d8d8" stroke="#a0a0a0"/><path d="M2 6h24M2 22h24" stroke="#a0a0a0" stroke-width="3" stroke-dasharray="2 2"/><path d="M10 9l9 5-9 5z" fill="#a0a0a0"/><path d="M0 9h3M0 14h3M0 19h3M25 9h3M25 14h3M25 19h3" stroke="#a0a0a0" stroke-width="1.500"/></svg>
<div class="a" style="left:1095.1px;top:110px;width:1.2px;height:32px;background:#b4b4b4;"></div>
<svg class="a" style="left:1105.5px;top:112.0px;width:28px;height:28px" viewBox="0 0 28 28"><path d="M3 5c3 20 8 24 11 20s5-16 11-20" fill="#d8d8d8" stroke="#8a8a8a" stroke-width="1.500"/><path d="M3 5v12M25 5v12M2 17h24" stroke="#8a8a8a" stroke-width="1.500"/></svg>
<svg class="a" style="left:1141.0px;top:112.0px;width:28px;height:28px" viewBox="0 0 28 28"><path d="M1 18l16-10 10 4-14 10z" fill="#b0b0b0"/><path d="M6 17l12-7 6 2.500-11 7z" fill="#d4d4d4"/><path d="M10 16l8-4 3 1-8 5z" fill="#9a9a9a"/></svg>
<svg class="a" style="left:1177.0px;top:112.0px;width:28px;height:28px" viewBox="0 0 28 28"><path d="M2 8l16-5 8 3v15l-16 5-8-3z" fill="#9a9a9a"/><path d="M10 11l16-5v15l-16 5z" fill="#b8b8b8"/><path d="M2 8l16-5 8 3-16 5z" fill="#d0d0d0"/><circle cx="8" cy="17" r="4.500" fill="#e4e4e4" stroke="#777"/><circle cx="8" cy="17" r="1.800" fill="#777"/></svg>
<svg class="a" style="left:1213.0px;top:112.0px;width:28px;height:28px" viewBox="0 0 28 28"><circle cx="10" cy="7" r="4" fill="#9a9a9a"/><path d="M3 18l5-8h5l5 8z" fill="#b0b0b0"/><path d="M10 27v-5M6 23l4-4 4 4" stroke="#9a9a9a" stroke-width="2.400" fill="none"/><path d="M27 6h-7M23 3l-4 3 4 3" stroke="#9a9a9a" stroke-width="2.200" fill="none"/></svg>
<svg class="a" style="left:1249.0px;top:112.0px;width:28px;height:28px" viewBox="0 0 28 28"><path d="M2 22L26 6l-6 12z" fill="#c4c4c4"/><path d="M2 22l18-4 6-12" fill="none" stroke="#a0a0a0" stroke-width="1.200"/></svg>
<div class="a" style="left:1286.0px;top:110px;width:1.2px;height:32px;background:#b4b4b4;"></div>
<svg class="a" style="left:1295.8px;top:112.0px;width:28px;height:28px" viewBox="0 0 28 28"><path d="M2 23c5 6 8 6 12 0s8-6 12 0" fill="none" stroke="#8a8a8a" stroke-width="1.800"/><path d="M2 23h24" stroke="#8a8a8a" stroke-width="1.300"/><path d="M4 9h20" stroke="#8a8a8a" stroke-width="1.800"/><circle cx="4" cy="9" r="2.500" fill="#8a8a8a"/><circle cx="24" cy="9" r="2.500" fill="#8a8a8a"/></svg>
<svg class="a" style="left:1332.0px;top:112.0px;width:28px;height:28px" viewBox="0 0 28 28"><path d="M2 23c5 6 8 6 12 0s8-6 12 0" fill="none" stroke="#8a8a8a" stroke-width="1.800"/><path d="M2 23h24" stroke="#8a8a8a" stroke-width="1.300"/><path d="M4 9h20" stroke="#c4c4c4" stroke-width="5"/><circle cx="4" cy="9" r="2.500" fill="#8a8a8a"/><circle cx="24" cy="9" r="2.500" fill="#8a8a8a"/></svg>
<svg class="a" style="left:1367.9px;top:112.0px;width:28px;height:28px" viewBox="0 0 28 28"><path d="M2 23c5 6 8 6 12 0s8-6 12 0" fill="none" stroke="#8a8a8a" stroke-width="1.800"/><path d="M2 23h24" stroke="#8a8a8a" stroke-width="1.300"/><path d="M4 9h20" stroke="#c4c4c4" stroke-width="5"/><circle cx="4" cy="9" r="2.500" fill="#8a8a8a"/><circle cx="14" cy="9" r="2.500" fill="#8a8a8a"/><circle cx="24" cy="9" r="2.500" fill="#8a8a8a"/></svg>
<svg class="a" style="left:1404.0px;top:112.0px;width:28px;height:28px" viewBox="0 0 28 28"><path d="M2 23c5 6 8 6 12 0s8-6 12 0" fill="none" stroke="#8a8a8a" stroke-width="1.800"/><path d="M2 23h24" stroke="#8a8a8a" stroke-width="1.300"/><path d="M4 4h20" stroke="#8a8a8a" stroke-width="1.800"/><circle cx="4" cy="4" r="2.200" fill="#8a8a8a"/><circle cx="24" cy="4" r="2.200" fill="#8a8a8a"/><path d="M3 17l4-6h4l3 6zM15 17l4-6h4l3 6z" fill="#b0b0b0"/><circle cx="9" cy="9.500" r="2.800" fill="#9a9a9a"/><circle cx="21" cy="9.500" r="2.800" fill="#9a9a9a"/></svg>
<svg class="a" style="left:1440.0px;top:112.0px;width:28px;height:28px" viewBox="0 0 28 28"><path d="M2 23c5 6 8 6 12 0s8-6 12 0" fill="none" stroke="#8a8a8a" stroke-width="1.800"/><path d="M2 23h24" stroke="#8a8a8a" stroke-width="1.300"/><path d="M2 12l22-4 2 4-22 6z" fill="#c4c4c4"/><path d="M10 3h8v9h-8z" fill="#d4d4d4"/><path d="M4 16l20-3" stroke="#9a9a9a"/></svg>
<svg class="a" style="left:1476.0px;top:112.0px;width:28px;height:28px" viewBox="0 0 28 28"><path d="M2 23c5 6 8 6 12 0s8-6 12 0" fill="none" stroke="#8a8a8a" stroke-width="1.800"/><path d="M2 23h24" stroke="#8a8a8a" stroke-width="1.300"/><path d="M2 20L26 5l-8 11z" fill="#c4c4c4"/></svg>
<svg class="a" style="left:1513.0px;top:112.0px;width:28px;height:28px" viewBox="0 0 28 28"><path d="M3 26L26 10l-5 12z" fill="#5a86e8"/><path d="M3 26l18-14" stroke="#c4d4f4" stroke-width="2"/><rect x="13" y="1" width="14" height="10" fill="#fff" stroke="#777" stroke-width="1"/><rect x="13" y="1" width="14" height="3" fill="#2a3fa8"/><polygon points="8.0,2.0 9.5,6.5 14.1,5.5 10.9,9.0 14.1,12.5 9.5,11.5 8.0,16.0 6.5,11.5 1.9,12.5 5.1,9.0 1.9,5.5 6.5,6.5" fill="#f7ee18" stroke="#a89a10" stroke-width=".6"/></svg>
<svg class="a" style="left:1547.7px;top:112.0px;width:28px;height:28px" viewBox="0 0 28 28"><path d="M14 3v18" stroke="#e89030" stroke-width="1.800"/><circle cx="14" cy="22" r="4" fill="#e018c8"/><circle cx="13" cy="21" r="1.300" fill="#f8a0f0"/></svg>
<div class="a" style="left:1585.1px;top:110px;width:1.2px;height:32px;background:#b4b4b4;"></div>
<svg class="a" style="left:1596.4px;top:112.0px;width:28px;height:28px" viewBox="0 0 28 28"><path d="M3 3l22 22H3z" fill="#b8b8b8"/><path d="M7 12l8 9H7z" fill="#e8e8e8"/><path d="M25 3v22" stroke="#d8d8d8"/><path d="M13 17L23 4l3 2.500-10 13-4 1z" fill="#e4e4e4" stroke="#a0a0a0" stroke-width=".8"/></svg>
<svg class="a" style="left:1629px;top:123px;width:10px;height:6px" viewBox="0 0 10 6"><path d="M0 0h10L5 6z" fill="#999"/></svg>
<div class="a" style="left:1649.0px;top:110px;width:0;height:32px;border-left:2px dotted #c0c0c0"></div>
<svg class="a" style="left:1663.5px;top:112.0px;width:28px;height:28px" viewBox="0 0 28 28"><path d="M3 6h22M3 11h22M3 16h22M3 21h22M3 26h22" stroke="#777" stroke-width="2.600" stroke-dasharray="2.600 2.400"/><rect x="12" y="0" width="16" height="12" fill="#f8f8f8"/><rect x="13" y="1" width="14" height="10" fill="#fff" stroke="#777" stroke-width="1"/><rect x="13" y="1" width="14" height="3" fill="#2a3fa8"/></svg>
<svg class="a" style="left:1698.0px;top:112.0px;width:28px;height:28px" viewBox="0 0 28 28"><path d="M3 6h22M3 11h22M3 16h22M3 21h22M3 26h22" stroke="#777" stroke-width="2.600" stroke-dasharray="2.600 2.400"/><circle cx="14" cy="15" r="5.500" fill="#f8f8f8" stroke="#1020a0" stroke-width="1.800"/><path d="M14 4v22M3 15h22" stroke="#1020a0" stroke-width="1.800"/><circle cx="14" cy="15" r="3" fill="#f8f8f8"/></svg>
<div class="a" style="left:1732.1px;top:110px;width:33px;height:32px;background:#cce4f7;border:1px solid #99c9ef;border-radius:4px;box-sizing:border-box;"></div>
<svg class="a" style="left:1734.6px;top:112.0px;width:28px;height:28px" viewBox="0 0 28 28"><path d="M10 3l12 3v18l-12-3z" fill="#a9c5ec" stroke="#3d5f9a" stroke-width="1.200" opacity=".9"/><path d="M2 19l14-7 10 3-14 8z" fill="#f04040" stroke="#a01818" stroke-width=".8"/><path d="M10 14v7l12 3v-9" fill="#a9c5ec" opacity=".55"/><path d="M4 11l20 6" stroke="#3d5f9a" stroke-width="1.200"/><path d="M3 9l18-4v15l-18 5z" fill="none" stroke="#3d5f9a" stroke-width="1.100"/></svg>
<svg class="a" style="left:1771.0px;top:112.0px;width:28px;height:28px" viewBox="0 0 28 28"><path d="M3 9l18-4v15L3 25z" fill="#a9c5ec" stroke="#3d5f9a" stroke-width="1.200" opacity=".9"/><path d="M10 3l7 2v21l-7-3z" fill="#f04040" stroke="#a01818" stroke-width=".8"/><path d="M2 19l14-7 10 3-14 8z" fill="none" stroke="#3d5f9a" stroke-width="1.100"/></svg>
<svg class="a" style="left:1807.6px;top:112.0px;width:28px;height:28px" viewBox="0 0 28 28"><path d="M10 3l12 3v18l-12-3z" fill="#a9c5ec" stroke="#3d5f9a" stroke-width="1.200"/><path d="M3 9l18-4v15L3 25z" fill="#f04040" stroke="#a01818" stroke-width=".8" opacity=".92"/><path d="M2 19l14-7 10 3-14 8z" fill="none" stroke="#3d5f9a" stroke-width="1.100"/></svg>
<div class="a" style="left:1843.5px;top:110px;width:1.2px;height:32px;background:#b4b4b4;"></div>
<svg class="a" style="left:1853.8px;top:112.0px;width:28px;height:28px" viewBox="0 0 28 28"><circle cx="6" cy="6" r="3" fill="none" stroke="#777" stroke-width="1.500"/><path d="M11 5l9 9M20 8v6h-6" fill="none" stroke="#777" stroke-width="1.500"/><circle cx="17" cy="19" r="3.500" fill="none" stroke="#777" stroke-width="1.500"/><circle cx="21" cy="23" r="3.500" fill="none" stroke="#777" stroke-width="1.500"/></svg>
<svg class="a" style="left:1889.6px;top:112.0px;width:28px;height:28px" viewBox="0 0 28 28"><path d="M14 1v26" stroke="#555" stroke-width="1.300" stroke-dasharray="4 2 1 2"/><path d="M20 9c9 3 5 11-6 11S1 13 8 9" fill="none" stroke="#666" stroke-width="1.800"/><path d="M3 15l2 9 6-5z" fill="#666"/></svg>
<svg class="a" style="left:1925.0px;top:112.0px;width:28px;height:28px" viewBox="0 0 28 28"><path d="M14 1v26" stroke="#555" stroke-width="1.300" stroke-dasharray="4 2 1 2"/><path d="M11 4v21H2zM17 4v21h9z" fill="none" stroke="#777" stroke-width="1.600"/></svg>
<svg class="a" style="left:1961.6px;top:112.0px;width:28px;height:28px" viewBox="0 0 28 28"><path d="M3 3l22 22M25 3L3 25" stroke="#111" stroke-width="2"/><circle cx="3" cy="3" r="2.3" fill="#e81818"/><circle cx="25" cy="3" r="2.3" fill="#e81818"/><circle cx="3" cy="25" r="2.3" fill="#e81818"/><circle cx="25" cy="25" r="2.3" fill="#e81818"/><circle cx="14" cy="14" r="4" fill="#fff" stroke="#e81818" stroke-width="1.200"/><rect x="12" y="12" width="4" height="4" fill="#e81818"/></svg>
<svg class="a" style="left:1998.0px;top:112.0px;width:28px;height:28px" viewBox="0 0 28 28"><rect x="2" y="4" width="24" height="22" rx="3" fill="#f8f8f8" stroke="#555" stroke-width="1.800"/><path d="M2 9h24" stroke="#555" stroke-width="1.500"/><path d="M8 2v4M20 2v4" stroke="#555" stroke-width="2.500"/><circle cx="14" cy="17" r="4.500" fill="none" stroke="#555" stroke-width="3" stroke-dasharray="2.300 1.300"/><circle cx="14" cy="17" r="2" fill="#f8f8f8" stroke="#555" stroke-width="1.300"/></svg>
<div class="a" style="left:964px;top:70px;width:404.5px;height:27.5px;background:#e6e6f2;"></div>
<div class="a" style="left:1369.7px;top:70px;width:22.8px;height:27.5px;background:#e6e6f2;"></div>
<div class="a" style="left:1394px;top:70px;width:23px;height:27.5px;background:#e6e6f2;"></div>
<div class="a" style="left:969px;top:75px;width:17px;height:17px;background:#c8ffff;"></div>
<div class="a" style="left:990.8px;top:75px;width:17px;height:17px;background:#c8ffff;"></div>
<div class="a" style="left:1013px;top:73.7px;width:45px;height:20.3px;background:#cd6a6a;"></div>
<span class="t" style="left:1020.5px;top:74.1px;font-size:15px;line-height:20px;height:20px;color:#fff;letter-spacing:0.172px;">GZT</span>
<span class="t" style="left:1067px;top:74.1px;font-size:15px;line-height:20px;height:20px;color:#000;letter-spacing:-0.562px;">LK1</span>
<div class="a" style="left:1108px;top:73px;width:1px;height:21px;background:#d8d8e4;"></div>
<span class="t" style="left:1116.3px;top:74.1px;font-size:15px;line-height:20px;height:20px;color:#000;letter-spacing:0.059px;">1.35 * LF1 + 1.50 * LF2 + 0.75 *...</span>
<svg class="a" style="left:1351px;top:80px;width:14px;height:10px" viewBox="0 0 14 10"><path d="M1.500 2l5.500 5.500 5.500-5.500" fill="none" stroke="#555" stroke-width="1.400"/></svg>
<svg class="a" style="left:1377px;top:78px;width:34px;height:12px" viewBox="0 0 34 12"><path d="M7 0v12L0 6zM27 0v12l7-6z" fill="#111"/></svg>
<div class="a" style="left:0px;top:2098px;width:3840px;height:37px;background:#f8f8f8;"></div>
<div class="a" style="left:0px;top:2135px;width:3840px;height:25px;background:#e8e8f2;"></div>
<div class="a" style="left:34px;top:2104px;width:300px;height:27.7px;background:#e8e8f4;"></div>
<div class="a" style="left:39px;top:2109px;width:17px;height:17px;background:#c8ffff;"></div>
<span class="t" style="left:64.8px;top:2108.26px;font-size:16px;line-height:21px;height:21px;color:#000;letter-spacing:-0.501px;">1 - Global XYZ</span>
<svg class="a" style="left:315px;top:2113px;width:14px;height:10px" viewBox="0 0 14 10"><path d="M1.500 2l5.500 5.500 5.500-5.500" fill="none" stroke="#555" stroke-width="1.400"/></svg>
<svg class="a" style="left:4.0px;top:2104.5px;width:24px;height:24px" viewBox="0 0 28 28"><rect x="12" y="1" width="14" height="10" fill="#fff" stroke="#777" stroke-width="1"/><rect x="12" y="1" width="14" height="3" fill="#2a3fa8"/><path d="M11 20L3 25M11 20l12 4M11 20V9" stroke="#d04010" stroke-width="1.500"/><path d="M11 20L3 25" stroke="#10a040" stroke-width="1.800"/><path d="M11 20V9" stroke="#1030d0" stroke-width="1.500"/><path d="M1 26l6-1-3-4zM26 25l-6 1 1-5z" fill="#d04010"/><path d="M1 26l6-1-3-4z" fill="#10a040"/><circle cx="11" cy="20" r="2.500" fill="#f0d020"/></svg>
<div class="a" style="left:340.2px;top:2103px;width:1.2px;height:28px;background:#b4b4b4;"></div>
<svg class="a" style="left:348.8px;top:2105.0px;width:24px;height:24px" viewBox="0 0 28 28"><path d="M2 9V4h5M21 4h5v5M26 19v5h-5M7 24H2v-5" fill="none" stroke="#1030b0" stroke-width="1.800"/><path d="M6 12l10 1v11L6 22z" fill="#7090c0"/><path d="M16 13l7-3v10l-7 4z" fill="#4a6aa0"/><path d="M6 12l7-3 10 1-7 3z" fill="#a9c5ec"/><rect x="13" y="1" width="14" height="10" fill="#fff" stroke="#777" stroke-width="1"/><rect x="13" y="1" width="14" height="3" fill="#2a3fa8"/><polygon points="7.0,1.0 8.3,4.8 12.2,4.0 9.5,7.0 12.2,10.0 8.3,9.2 7.0,13.0 5.7,9.2 1.8,10.0 4.5,7.0 1.8,4.0 5.7,4.8" fill="#f7ee18" stroke="#a89a10" stroke-width=".6"/></svg>
<svg class="a" style="left:383.0px;top:2105.0px;width:24px;height:24px" viewBox="0 0 28 28"><path d="M3 8l3-3h16l3 3" fill="none" stroke="#1030b0" stroke-width="1.800" stroke-dasharray="6 4"/><path d="M9 10l8 1v15l-8-2z" fill="#7090c0"/><path d="M17 11l5-2v13l-5 4z" fill="#4a6aa0"/><path d="M9 10l5-2 8 1-5 2z" fill="#a9c5ec"/><path d="M1 8l4-3v6zM27 8l-4-3v6z" fill="#1030b0"/></svg>
<svg class="a" style="left:416.0px;top:2105.0px;width:24px;height:24px" viewBox="0 0 28 28"><path d="M24 2v24" stroke="#1030b0" stroke-width="1.800" stroke-dasharray="5 3"/><path d="M3 11l14 1v9L3 19z" fill="#7090c0"/><path d="M17 12l5-2v8l-5 3z" fill="#4a6aa0"/><path d="M3 11l5-2 14 1-5 2z" fill="#a9c5ec"/><ellipse cx="21" cy="15" rx="2.500" ry="6" fill="none" stroke="#1030b0" stroke-width="1.300"/><path d="M24 1l-3 4h6zM24 27l-3-4h6z" fill="#1030b0"/></svg>
<svg class="a" style="left:450.5px;top:2105.0px;width:24px;height:24px" viewBox="0 0 28 28"><path d="M2 9V4h5M21 4h5v5M26 19v5h-5M7 24H2v-5" fill="none" stroke="#1030b0" stroke-width="1.800"/><path d="M8 12l8 1v9l-8-2z" fill="#7090c0"/><path d="M16 13l9-8v9l-9 8z" fill="#a9c5ec" stroke="#4a6aa0" stroke-width=".8"/><path d="M8 12l9-8 8 1-9 8z" fill="#c4d8f4" stroke="#4a6aa0" stroke-width=".6"/></svg>
<svg class="a" style="left:483.0px;top:2105.0px;width:24px;height:24px" viewBox="0 0 28 28"><path d="M2 9V4h5M21 4h5v5M26 19v5h-5M7 24H2v-5" fill="none" stroke="#1030b0" stroke-width="1.800"/><path d="M9 8l7 1v17l-7-2z" fill="#7090c0"/><path d="M16 9l5-2v15l-5 4z" fill="#4a6aa0"/><path d="M16 12h9v10l-9 4z" fill="#a9c5ec" opacity=".8"/><rect x="13" y="1" width="14" height="10" fill="#fff" stroke="#777" stroke-width="1"/><rect x="13" y="1" width="14" height="3" fill="#2a3fa8"/><polygon points="6.0,2.0 7.0,5.2 10.3,4.5 8.1,7.0 10.3,9.5 7.1,8.8 6.0,12.0 5.0,8.8 1.7,9.5 3.9,7.0 1.7,4.5 4.9,5.2" fill="#f7ee18" stroke="#a89a10" stroke-width=".6"/></svg>
<div class="a" style="left:515.5px;top:2103px;width:1.2px;height:28px;background:#b4b4b4;"></div>
<svg class="a" style="left:525.0px;top:2105.0px;width:24px;height:24px" viewBox="0 0 28 28"><path d="M3 21l5-4h14l-5 4zM3 25l5-4h14l-5 4z" fill="#9a9a9a" stroke="#555" stroke-width=".8"/><path d="M3 17l5-5h14l-5 5z" fill="#f0e080" stroke="#555" stroke-width=".8"/><circle cx="8" cy="15" r="1.3" fill="#e81818"/><circle cx="19" cy="14" r="1.3" fill="#e81818"/><rect x="13" y="1" width="14" height="10" fill="#fff" stroke="#777" stroke-width="1"/><rect x="13" y="1" width="14" height="3" fill="#2a3fa8"/><polygon points="7.0,0.5 8.4,4.6 12.6,3.8 9.7,7.0 12.6,10.2 8.4,9.4 7.0,13.5 5.6,9.4 1.4,10.3 4.3,7.0 1.4,3.8 5.6,4.6" fill="#f7ee18" stroke="#a89a10" stroke-width=".6"/><path d="M17 12v13l3-2.500 2.500 5.500 2.500-1-2.500-5.500h4.500z" fill="#fff" stroke="#222" stroke-width="1"/></svg>
<svg class="a" style="left:556.8px;top:2105.0px;width:24px;height:24px" viewBox="0 0 28 28"><path d="M3 21l5-4h14l-5 4zM3 25l5-4h14l-5 4zM3 17l5-5h14l-5 5z" fill="#f0e8b0" stroke="#888" stroke-width=".8" stroke-dasharray="1.500 1"/><circle cx="10" cy="15" r="1.5" fill="#e81818"/><circle cx="10" cy="19" r="1.5" fill="#e81818"/><circle cx="10" cy="23" r="1.5" fill="#e81818"/><rect x="13" y="1" width="14" height="10" fill="#fff" stroke="#777" stroke-width="1"/><rect x="13" y="1" width="14" height="3" fill="#2a3fa8"/><polygon points="7.0,0.5 8.4,4.6 12.6,3.8 9.7,7.0 12.6,10.2 8.4,9.4 7.0,13.5 5.6,9.4 1.4,10.3 4.3,7.0 1.4,3.8 5.6,4.6" fill="#f7ee18" stroke="#a89a10" stroke-width=".6"/><path d="M17 12v13l3-2.500 2.500 5.500 2.500-1-2.500-5.500h4.500z" fill="#fff" stroke="#777" stroke-width="1"/></svg>
<svg class="a" style="left:591.0px;top:2105.0px;width:24px;height:24px" viewBox="0 0 28 28"><text x="17" y="14" font-size="12" font-weight="bold" fill="#111">x</text><path d="M3 18v9M27 18v9M3 23h24" stroke="#111" stroke-width="1.500"/><path d="M3 23l4-2.500v5zM27 23l-4-2.500v5z" fill="#111"/><polygon points="9.0,0.0 10.5,4.5 15.1,3.5 11.9,7.0 15.1,10.5 10.5,9.5 9.0,14.0 7.5,9.5 2.9,10.5 6.1,7.0 2.9,3.5 7.5,4.5" fill="#f7ee18" stroke="#a89a10" stroke-width=".6"/></svg>
<svg class="a" style="left:623px;top:2114px;width:10px;height:6px" viewBox="0 0 10 6"><path d="M0 0h10L5 6z" fill="#111"/></svg>
<svg class="a" style="left:641.0px;top:2105.0px;width:24px;height:24px" viewBox="0 0 28 28"><text x="19" y="16" font-size="12" font-weight="bold" text-anchor="middle" fill="#111">xx</text><path d="M10 19h17" stroke="#111" stroke-width="1.500"/><path d="M12 19L3 26" stroke="#111" stroke-width="1.500"/><path d="M2 27l2-6 4 5z" fill="#111"/><polygon points="9.0,0.0 10.5,4.5 15.1,3.5 11.9,7.0 15.1,10.5 10.5,9.5 9.0,14.0 7.5,9.5 2.9,10.5 6.1,7.0 2.9,3.5 7.5,4.5" fill="#f7ee18" stroke="#a89a10" stroke-width=".6"/></svg>
<svg class="a" style="left:674.6px;top:2105.0px;width:24px;height:24px" viewBox="0 0 28 28"><rect x="13" y="1" width="14" height="10" fill="#fff" stroke="#777" stroke-width="1"/><rect x="13" y="1" width="14" height="3" fill="#2a3fa8"/><circle cx="12" cy="8" r="3" fill="#7a7a9a"/><path d="M6 12h12l-2 7-1 8h-2l-1-7-1 7H9l-1-8z" fill="#7a7a9a"/><polygon points="7.0,1.0 8.3,4.8 12.2,4.0 9.5,7.0 12.2,10.0 8.3,9.2 7.0,13.0 5.7,9.2 1.8,10.0 4.5,7.0 1.8,4.0 5.7,4.8" fill="#f7ee18" stroke="#a89a10" stroke-width=".6"/></svg>
<svg class="a" style="left:709.0px;top:2105.0px;width:24px;height:24px" viewBox="0 0 28 28"><path d="M3 10h8l2-2h8v4h4v14H3z" fill="#fff" stroke="#555" stroke-width="1.500"/><path d="M3 13h22" stroke="#555"/><rect x="13" y="1" width="14" height="9" fill="#fff" stroke="#777" stroke-width="1"/><rect x="13" y="1" width="14" height="3" fill="#2a3fa8"/><path d="M9 7v4a2 2 0 0 0 4 0V7" fill="none" stroke="#222" stroke-width="1.300"/><polygon points="8.0,0.0 9.3,3.8 13.2,3.0 10.5,6.0 13.2,9.0 9.3,8.2 8.0,12.0 6.7,8.2 2.8,9.0 5.5,6.0 2.8,3.0 6.7,3.8" fill="#f7ee18" stroke="#a89a10" stroke-width=".6"/></svg>
<div class="a" style="left:743.5px;top:2103px;width:1.2px;height:28px;background:#b4b4b4;"></div>
<svg class="a" style="left:749.0px;top:2105.0px;width:24px;height:24px" viewBox="0 0 28 28"><path d="M5 22L21 8" stroke="#111" stroke-width="1.800"/><path d="M3 24l2-6 4 4zM23 6l-2 6-4-4z" fill="#111"/><path d="M2 22l4 5M19 4l5 5" stroke="#111" stroke-width="1.300"/><circle cx="24" cy="8" r="2" fill="#e81818"/><circle cx="10" cy="24" r="2" fill="#e81818"/></svg>
<svg class="a" style="left:784px;top:2114px;width:10px;height:6px" viewBox="0 0 10 6"><path d="M0 0h10L5 6z" fill="#111"/></svg>
<svg class="a" style="left:802.7px;top:2105.0px;width:24px;height:24px" viewBox="0 0 28 28"><text x="6" y="10" font-size="12" font-weight="bold" text-anchor="middle" fill="#111">2</text><text x="22" y="27" font-size="12" font-weight="bold" text-anchor="middle" fill="#111">6</text><rect x="3" y="15" width="7" height="11" fill="#4a7ac8"/><path d="M11 5c8-1 11 4 11 9" fill="none" stroke="#4a7ac8" stroke-width="2.200"/><path d="M18 12l4 5 4-5z" fill="#4a7ac8"/></svg>
<svg class="a" style="left:835.6px;top:2114px;width:10px;height:6px" viewBox="0 0 10 6"><path d="M0 0h10L5 6z" fill="#111"/></svg>
<div class="a" style="left:855.5px;top:2103px;width:1.2px;height:28px;background:#b4b4b4;"></div>
<svg class="a" style="left:864.0px;top:2105.0px;width:24px;height:24px" viewBox="0 0 28 28"><path d="M4 3v22M24 3v22" stroke="#777" stroke-width="1.500"/><path d="M14 3v22" stroke="#111" stroke-width="2"/><circle cx="14" cy="3" r="2.3" fill="#e81818"/><circle cx="14" cy="25" r="2.3" fill="#e81818"/></svg>
<svg class="a" style="left:898.7px;top:2105.0px;width:24px;height:24px" viewBox="0 0 28 28"><path d="M3 3l6 22M25 3l-6 22" stroke="#777" stroke-width="1.500"/><path d="M14 3v22" stroke="#111" stroke-width="2"/><circle cx="14" cy="3" r="2.3" fill="#e81818"/><circle cx="14" cy="25" r="2.3" fill="#e81818"/></svg>
<svg class="a" style="left:930.0px;top:2105.0px;width:24px;height:24px" viewBox="0 0 28 28"><path d="M4 25L20 8" stroke="#111" stroke-width="1.800" stroke-dasharray="5 2 1 2"/><path d="M6 2l20 7" stroke="#555" stroke-width="1.300"/><circle cx="4" cy="25" r="2.3" fill="#e81818"/><circle cx="21" cy="7" r="2.3" fill="#e81818"/></svg>
<svg class="a" style="left:963px;top:2114px;width:10px;height:6px" viewBox="0 0 10 6"><path d="M0 0h10L5 6z" fill="#111"/></svg>
<svg class="a" style="left:983.7px;top:2105.0px;width:24px;height:24px" viewBox="0 0 28 28"><path d="M6 27V19L20 5h6" fill="none" stroke="#111" stroke-width="2"/><circle cx="6" cy="19" r="2.3" fill="#e81818"/><circle cx="20" cy="5" r="2.3" fill="#e81818"/></svg>
<svg class="a" style="left:1016.5px;top:2105.0px;width:24px;height:24px" viewBox="0 0 28 28"><path d="M6 27V19C6 10 14 5 26 5" fill="none" stroke="#111" stroke-width="2"/><circle cx="6" cy="19" r="2.3" fill="#e81818"/><circle cx="18" cy="6" r="2.3" fill="#e81818"/></svg>
<svg class="a" style="left:1048.0px;top:2105.0px;width:24px;height:24px" viewBox="0 0 28 28"><path d="M3 19L19 3M9 25L25 9" stroke="#111" stroke-width="1.800"/><path d="M10 8l6 10M14 6l6 10" stroke="#555" stroke-width="1.100"/><circle cx="3" cy="19" r="2.3" fill="#e81818"/><circle cx="19" cy="3" r="2.3" fill="#e81818"/></svg>
<svg class="a" style="left:1082.5px;top:2105.0px;width:24px;height:24px" viewBox="0 0 28 28"><path d="M4 24L24 4" stroke="#111" stroke-width="1.800"/><path d="M9 13l8 8M14 8l8 8" stroke="#111" stroke-width="1.600"/><circle cx="4" cy="24" r="2.3" fill="#e81818"/><circle cx="24" cy="4" r="2.3" fill="#e81818"/></svg>
<svg class="a" style="left:1115.0px;top:2105.0px;width:24px;height:24px" viewBox="0 0 28 28"><path d="M4 24L24 4" stroke="#111" stroke-width="1.800"/><path d="M5 15L17 5M17 5l-5 1M17 5l-1 5M14 11l8 7" stroke="#111" stroke-width="1.400" fill="none"/><circle cx="4" cy="24" r="2.3" fill="#e81818"/><circle cx="24" cy="4" r="2.3" fill="#e81818"/></svg>
<svg class="a" style="left:1148.6px;top:2105.0px;width:24px;height:24px" viewBox="0 0 28 28"><path d="M3 8l7-3 6 6 8-5 1 8-6 4 2 6-9-2-6-4z" fill="none" stroke="#999" stroke-width="1.600"/><circle cx="3" cy="8" r="2.2" fill="#9a9a9a"/><circle cx="10" cy="5" r="2.2" fill="#9a9a9a"/><circle cx="16" cy="11" r="2.2" fill="#9a9a9a"/><circle cx="24" cy="6" r="2.2" fill="#9a9a9a"/><circle cx="25" cy="14" r="2.2" fill="#9a9a9a"/><circle cx="19" cy="18" r="2.2" fill="#9a9a9a"/><circle cx="21" cy="24" r="2.2" fill="#9a9a9a"/><circle cx="12" cy="22" r="2.2" fill="#9a9a9a"/><circle cx="6" cy="18" r="2.2" fill="#9a9a9a"/><path d="M8 11v5M22 9v5" stroke="#888" stroke-width="1.200"/></svg>
<svg class="a" style="left:1181.0px;top:2105.0px;width:24px;height:24px" viewBox="0 0 28 28"><path d="M3 9l8-2 7 4 7-7M3 20l8 2 6 3 8-8" fill="none" stroke="#e81818" stroke-width="1.800"/><path d="M14 10v8" stroke="#111" stroke-width="1.300"/><path d="M11.500 16l2.500 4 2.500-4z" fill="#111"/><circle cx="3" cy="9" r="2.2" fill="#e81818"/><circle cx="11" cy="7" r="2.2" fill="#e81818"/><circle cx="18" cy="11" r="2.2" fill="#e81818"/><circle cx="25" cy="4" r="2.2" fill="#e81818"/><circle cx="3" cy="20" r="2.2" fill="#e81818"/><circle cx="11" cy="22" r="2.2" fill="#e81818"/><circle cx="17" cy="25" r="2.2" fill="#e81818"/><circle cx="25" cy="17" r="2.2" fill="#e81818"/></svg>
<svg class="a" style="left:1214.7px;top:2105.0px;width:24px;height:24px" viewBox="0 0 28 28"><path d="M4 25L12 14l4 2 4-6" fill="none" stroke="#111" stroke-width="1.600" stroke-dasharray="2 1.500"/><path d="M10 2l16 16" stroke="#555" stroke-width="1.300"/><circle cx="4" cy="25" r="2.2" fill="#e81818"/><circle cx="20" cy="9" r="2.2" fill="#e81818"/></svg>
<div class="a" style="left:1247.5px;top:2103px;width:1.2px;height:28px;background:#b4b4b4;"></div>
<svg class="a" style="left:1257.7px;top:2105.0px;width:24px;height:24px" viewBox="0 0 28 28"><path d="M3 19L15 5" stroke="#111" stroke-width="1.600"/><path d="M2 21l2-5 3 3zM17 3l-2 5-3-3z" fill="#111"/><path d="M1 17l5 6M13 2l5 5" stroke="#111" stroke-width="1.200"/><path d="M8 25L20 12" stroke="#a9c5ec" stroke-width="4"/><circle cx="8" cy="25" r="2.2" fill="#e81818"/><circle cx="22" cy="9" r="2.2" fill="#e81818"/><path d="M17 18h8M17 25h8M21 18v7" stroke="#555" stroke-width="1.800"/></svg>
<svg class="a" style="left:1289.5px;top:2114px;width:10px;height:6px" viewBox="0 0 10 6"><path d="M0 0h10L5 6z" fill="#111"/></svg>
<svg class="a" style="left:1307.7px;top:2105.0px;width:24px;height:24px" viewBox="0 0 28 28"><path d="M4 21L22 4M9 26L27 9" stroke="#a9c5ec" stroke-width="3.500"/><path d="M11 8l5 9M15 6l5 9" stroke="#777" stroke-width="1.100"/><path d="M9 24h6M9 28h6M12 24v4" stroke="#777" stroke-width="1.300"/><circle cx="4" cy="21" r="2.2" fill="#e81818"/><circle cx="22" cy="4" r="2.2" fill="#e81818"/></svg>
<svg class="a" style="left:1341.0px;top:2105.0px;width:24px;height:24px" viewBox="0 0 28 28"><path d="M4 24L24 4" stroke="#a9c5ec" stroke-width="4"/><path d="M9 12l9 9" stroke="#111" stroke-width="1.600"/><circle cx="4" cy="24" r="2.2" fill="#e81818"/><circle cx="24" cy="4" r="2.2" fill="#e81818"/></svg>
<svg class="a" style="left:1374.0px;top:2105.0px;width:24px;height:24px" viewBox="0 0 28 28"><path d="M4 24L24 4" stroke="#a9c5ec" stroke-width="4"/><path d="M5 15L16 6M16 6l-5 1M16 6l-1 5M13 10l8 8" stroke="#111" stroke-width="1.400" fill="none"/><circle cx="4" cy="24" r="2.2" fill="#e81818"/><circle cx="24" cy="4" r="2.2" fill="#e81818"/></svg>
<svg class="a" style="left:1407.0px;top:2105.0px;width:24px;height:24px" viewBox="0 0 28 28"><path d="M3 8l9-1 5 4 8-7M3 21l8 3 6-2 8-6" fill="none" stroke="#d89aa8" stroke-width="4"/><path d="M14 9v8" stroke="#111" stroke-width="1.300"/><path d="M11.500 15l2.500 4 2.500-4z" fill="#111"/><circle cx="3" cy="8" r="2.2" fill="#e81818"/><circle cx="12" cy="7" r="2.2" fill="#e81818"/><circle cx="17" cy="11" r="2.2" fill="#e81818"/><circle cx="25" cy="4" r="2.2" fill="#e81818"/><circle cx="3" cy="21" r="2.2" fill="#e81818"/><circle cx="11" cy="24" r="2.2" fill="#e81818"/><circle cx="17" cy="22" r="2.2" fill="#e81818"/><circle cx="25" cy="16" r="2.2" fill="#e81818"/></svg>
<div class="a" style="left:2960.0px;top:2103px;width:31px;height:29px;background:#cce8ff;border:1px solid #99d1ff;border-radius:4px;box-sizing:border-box;"></div>
<svg class="a" style="left:2964.5px;top:2106.5px;width:22px;height:22px" viewBox="0 0 28 28"><path d="M4 5h20M4 10h20M4 15h20M4 20h20M4 25h20" stroke="#777" stroke-width="2.400" stroke-dasharray="2.400 2.600"/><rect x="10" y="0" width="18" height="12" fill="#cce8ff"/><path d="M12 6c4-6 10-6 14 0-4 6-10 6-14 0z" fill="#fff" stroke="#1d1d5a" stroke-width="1.3"/><circle cx="19" cy="6" r="3.2" fill="#3a62c8"/><circle cx="19" cy="6" r="1.5" fill="#0a0a30"/></svg>
<svg class="a" style="left:3007.6px;top:2106.5px;width:22px;height:22px" viewBox="0 0 28 28"><path d="M4 5h20M4 10h20M4 15h20M4 20h20M4 25h20" stroke="#777" stroke-width="2.400" stroke-dasharray="2.400 2.600"/><rect x="0" y="0" width="28" height="13" fill="#f8f8f8"/><rect x="13" y="1" width="14" height="10" fill="#fff" stroke="#777" stroke-width="1"/><rect x="13" y="1" width="14" height="3" fill="#2a3fa8"/><polygon points="7.0,0.5 8.4,4.6 12.6,3.8 9.7,7.0 12.6,10.2 8.4,9.4 7.0,13.5 5.6,9.4 1.4,10.3 4.3,7.0 1.4,3.8 5.6,4.6" fill="#f7ee18" stroke="#a89a10" stroke-width=".6"/></svg>
<div class="a" style="left:3037.0px;top:2103px;width:31px;height:29px;background:#cce8ff;border:1px solid #99d1ff;border-radius:4px;box-sizing:border-box;"></div>
<svg class="a" style="left:3041.5px;top:2106.5px;width:22px;height:22px" viewBox="0 0 28 28"><path d="M4 5h20M4 10h20M4 15h20M4 20h20M4 25h20" stroke="#777" stroke-width="2.400" stroke-dasharray="2.400 2.600"/><rect x="6" y="7" width="16" height="16" fill="#cce8ff"/><rect x="10" y="0" width="18" height="12" fill="#cce8ff"/><path d="M12 6c4-6 10-6 14 0-4 6-10 6-14 0z" fill="#fff" stroke="#1d1d5a" stroke-width="1.3"/><circle cx="19" cy="6" r="3.2" fill="#3a62c8"/><circle cx="19" cy="6" r="1.5" fill="#0a0a30"/></svg>
<svg class="a" style="left:3084.0px;top:2106.5px;width:22px;height:22px" viewBox="0 0 28 28"><path d="M6 5v22M22 5v22M2 9h24M2 23h24" stroke="#555" stroke-width="1.800" stroke-dasharray="1.800 2.200"/><polygon points="8.0,0.0 9.5,4.5 14.1,3.5 10.9,7.0 14.1,10.5 9.5,9.5 8.0,14.0 6.5,9.5 1.9,10.5 5.1,7.0 1.9,3.5 6.5,4.5" fill="#f7ee18" stroke="#a89a10" stroke-width=".6"/></svg>
<div class="a" style="left:3114.5px;top:2103px;width:31px;height:29px;background:#cce8ff;border:1px solid #99d1ff;border-radius:4px;box-sizing:border-box;"></div>
<svg class="a" style="left:3119.0px;top:2106.5px;width:22px;height:22px" viewBox="0 0 28 28"><path d="M5 5v22M2 23h24" stroke="#555" stroke-width="1.800" stroke-dasharray="1.800 2.200"/><path d="M23 14v12" stroke="#555" stroke-width="1.800" stroke-dasharray="1.800 2.200"/><path d="M12 7c4-6 10-6 14 0-4 6-10 6-14 0z" fill="#fff" stroke="#1d1d5a" stroke-width="1.3"/><circle cx="19" cy="7" r="3.2" fill="#3a62c8"/><circle cx="19" cy="7" r="1.5" fill="#0a0a30"/></svg>
<svg class="a" style="left:3170.0px;top:2106.5px;width:22px;height:22px" viewBox="0 0 28 28"><path d="M5 2v22h20M5 14h9v10" fill="none" stroke="#666" stroke-width="1.800"/></svg>
<div class="a" style="left:3211.1px;top:2103px;width:31px;height:29px;background:#cce8ff;border:1px solid #99d1ff;border-radius:4px;box-sizing:border-box;"></div>
<svg class="a" style="left:3215.6px;top:2106.5px;width:22px;height:22px" viewBox="0 0 28 28"><path d="M4 5h20M4 10h20M4 15h20M4 20h20M4 25h20" stroke="#777" stroke-width="2.400" stroke-dasharray="2.400 2.600"/><path d="M14 16v-4a5 5 0 0 1 10 0v4" fill="none" stroke="#8a8aa8" stroke-width="3.500"/><rect x="12" y="14" width="4" height="3.500" fill="#d83020"/><rect x="22" y="14" width="4" height="3.500" fill="#1050c8"/></svg>
<div class="a" style="left:3243.9px;top:2103px;width:31px;height:29px;background:#cce8ff;border:1px solid #99d1ff;border-radius:4px;box-sizing:border-box;"></div>
<svg class="a" style="left:3248.4px;top:2106.5px;width:22px;height:22px" viewBox="0 0 28 28"><path d="M6 22v-9a8 8 0 0 1 16 0v9" fill="none" stroke="#8a8aa8" stroke-width="5"/><rect x="3.500" y="19" width="5" height="5" fill="#d83020"/><rect x="19.500" y="19" width="5" height="5" fill="#1050c8"/></svg>
<div class="a" style="left:3276.5px;top:2103px;width:31px;height:29px;background:#cce8ff;border:1px solid #99d1ff;border-radius:4px;box-sizing:border-box;"></div>
<svg class="a" style="left:3281.0px;top:2106.5px;width:22px;height:22px" viewBox="0 0 28 28"><rect x="7" y="8" width="14" height="14" fill="none" stroke="#555" stroke-width="1.800"/></svg>
<div class="a" style="left:3309.5px;top:2103px;width:31px;height:29px;background:#cce8ff;border:1px solid #99d1ff;border-radius:4px;box-sizing:border-box;"></div>
<svg class="a" style="left:3314.0px;top:2106.5px;width:22px;height:22px" viewBox="0 0 28 28"><circle cx="14" cy="15" r="8" fill="none" stroke="#555" stroke-width="1.800"/><path d="M8 9l12 12M20 9L8 21" stroke="#555" stroke-width="1.800"/></svg>
<svg class="a" style="left:3346.0px;top:2106.5px;width:22px;height:22px" viewBox="0 0 28 28"><rect x="7" y="8" width="14" height="14" fill="none" stroke="#555" stroke-width="1.800"/><path d="M7 8l14 14M21 8L7 22" stroke="#555" stroke-width="1.800"/></svg>
<div class="a" style="left:3376.0px;top:2103px;width:31px;height:29px;background:#cce8ff;border:1px solid #99d1ff;border-radius:4px;box-sizing:border-box;"></div>
<svg class="a" style="left:3380.5px;top:2106.5px;width:22px;height:22px" viewBox="0 0 28 28"><path d="M7 6v17h16M7 14h9v9" fill="none" stroke="#666" stroke-width="2"/></svg>
<svg class="a" style="left:3412.0px;top:2106.5px;width:22px;height:22px" viewBox="0 0 28 28"><path d="M5 24L22 8" stroke="#666" stroke-width="1.600"/><path d="M15 12l4 4" stroke="#666" stroke-width="1.300"/><path d="M20 6l3 3" stroke="#666" stroke-width="1.300" stroke-dasharray="1.500 1"/></svg>
<svg class="a" style="left:3444.8px;top:2106.5px;width:22px;height:22px" viewBox="0 0 28 28"><path d="M4 18L18 7M10 24L24 13" stroke="#666" stroke-width="1.800"/></svg>
<svg class="a" style="left:3477.6px;top:2106.5px;width:22px;height:22px" viewBox="0 0 28 28"><circle cx="14" cy="17" r="6.500" fill="none" stroke="#555" stroke-width="1.800"/><path d="M5 7h18" stroke="#555" stroke-width="1.800"/></svg>
<svg class="a" style="left:3511.0px;top:2106.5px;width:22px;height:22px" viewBox="0 0 28 28"><circle cx="14" cy="15" r="9" fill="none" stroke="#555" stroke-width="1.500"/><path d="M14 7l8 8-8 8-8-8z" fill="none" stroke="#555" stroke-width="1.500"/></svg>
<svg class="a" style="left:3544.0px;top:2106.5px;width:22px;height:22px" viewBox="0 0 28 28"><path d="M6 21L22 9M8 10l9 12M12 7l9 12" stroke="#555" stroke-width="1.800"/></svg>
<svg class="a" style="left:3576.8px;top:2106.5px;width:22px;height:22px" viewBox="0 0 28 28"><path d="M5 23L22 8M22 8l-6 1M22 8l-1 6M11 9l9 12" stroke="#555" stroke-width="1.600" fill="none"/></svg>
<svg class="a" style="left:3609.7px;top:2106.5px;width:22px;height:22px" viewBox="0 0 28 28"><path d="M5 22L23 9M11 9l8 12" stroke="#555" stroke-width="1.600"/><path d="M4 12l8-5M4 12l2-4M4 12l4 1" stroke="#555" stroke-width="1.100" stroke-dasharray="1.500 1"/></svg>
<svg class="a" style="left:3642.5px;top:2106.5px;width:22px;height:22px" viewBox="0 0 28 28"><circle cx="8" cy="22" r="1" fill="#666"/><circle cx="12" cy="14" r="1" fill="#666"/><circle cx="17" cy="20" r="1" fill="#666"/><circle cx="21" cy="10" r="1" fill="#666"/><circle cx="10" cy="9" r="1" fill="#666"/><circle cx="19" cy="25" r="1" fill="#666"/><circle cx="23" cy="18" r="1" fill="#666"/><circle cx="15" cy="6" r="1" fill="#666"/><circle cx="6" cy="16" r="1" fill="#666"/><circle cx="14" cy="24" r="1" fill="#666"/></svg>
<div class="a" style="left:3672.5px;top:2103px;width:31px;height:29px;background:#cce8ff;border:1px solid #99d1ff;border-radius:4px;box-sizing:border-box;"></div>
<svg class="a" style="left:3677.0px;top:2106.5px;width:22px;height:22px" viewBox="0 0 28 28"><path d="M4 5h20M4 10h20M4 15h20M4 20h20M4 25h20" stroke="#777" stroke-width="2.400" stroke-dasharray="2.400 2.600"/></svg>
<div class="a" style="left:3705.5px;top:2103px;width:31px;height:29px;background:#cce8ff;border:1px solid #99d1ff;border-radius:4px;box-sizing:border-box;"></div>
<svg class="a" style="left:3710.0px;top:2106.5px;width:22px;height:22px" viewBox="0 0 28 28"><path d="M6 3v24M22 3v24M2 7h24M2 23h24" stroke="#555" stroke-width="2" stroke-dasharray="2 2.200"/></svg>
<div class="a" style="left:3739.1px;top:2103px;width:31px;height:29px;background:#cce8ff;border:1px solid #99d1ff;border-radius:4px;box-sizing:border-box;"></div>
<svg class="a" style="left:3743.6px;top:2106.5px;width:22px;height:22px" viewBox="0 0 28 28"><path d="M4 19l5-5h15l-5 5zM4 23l5-5h15l-5 5z" fill="#cce8ff" stroke="#555" stroke-width="1.500"/><path d="M4 15l5-6h15l-5 6z" fill="#cce8ff" stroke="#555" stroke-width="1.500"/></svg>
<div class="a" style="left:3772.0px;top:2103px;width:31px;height:29px;background:#cce8ff;border:1px solid #99d1ff;border-radius:4px;box-sizing:border-box;"></div>
<svg class="a" style="left:3776.5px;top:2106.5px;width:22px;height:22px" viewBox="0 0 28 28"><rect x="6" y="12" width="16" height="6" fill="#555"/><circle cx="5" cy="11" r="1.3" fill="#e81818"/><circle cx="23" cy="11" r="1.3" fill="#e81818"/><circle cx="5" cy="19" r="1.3" fill="#e81818"/><circle cx="23" cy="19" r="1.3" fill="#e81818"/></svg>
<div class="a" style="left:3804.5px;top:2103px;width:31px;height:29px;background:#cce8ff;border:1px solid #99d1ff;border-radius:4px;box-sizing:border-box;"></div>
<svg class="a" style="left:3809.0px;top:2106.5px;width:22px;height:22px" viewBox="0 0 28 28"><path d="M14 4v10" stroke="#555" stroke-width="1.600"/><path d="M10.500 11l3.500 5 3.500-5z" fill="#555"/><rect x="10" y="17" width="8" height="8" fill="none" stroke="#555" stroke-width="1.800"/></svg>
<div class="a" style="left:2949px;top:2138px;width:1px;height:20px;background:#c8c8d0;"></div>
<div class="a" style="left:3105.4px;top:2138px;width:1px;height:20px;background:#c8c8d0;"></div>
<div class="a" style="left:3410.9px;top:2138px;width:1px;height:20px;background:#c8c8d0;"></div>
<div class="a" style="left:3507px;top:2138px;width:1px;height:20px;background:#c8c8d0;"></div>
<div class="a" style="left:3618px;top:2138px;width:1px;height:20px;background:#c8c8d0;"></div>
<div class="a" style="left:3729.6px;top:2138px;width:1px;height:20px;background:#c8c8d0;"></div>
<span class="t" style="left:3110px;top:2137.8px;font-size:15px;line-height:20px;height:20px;color:#000;letter-spacing:-0.288px;">KS: Global XYZ</span>
<span class="t" style="left:3416px;top:2137.8px;font-size:15px;line-height:20px;height:20px;color:#000;letter-spacing:-0.524px;">Ebene: XY</span>
<svg class="a" style="left:1484.0px;top:1693.7px;width:26px;height:26px" viewBox="0 0 28 28"><rect x="8" y="3" width="15" height="23" fill="#fff" stroke="#555" stroke-width="1.200"/><rect x="9" y="5" width="13" height="3.200" fill="#e8601a"/><rect x="9" y="10.5" width="13" height="3.200" fill="#8a8f98"/><rect x="9" y="16" width="13" height="3.200" fill="#8a8f98"/><rect x="9" y="21.5" width="13" height="3.200" fill="#8a8f98"/><polygon points="8.0,1.5 9.2,5.0 12.8,4.2 10.3,7.0 12.8,9.8 9.2,9.0 8.0,12.5 6.8,9.0 3.2,9.8 5.7,7.0 3.2,4.3 6.8,5.0" fill="#f7ee18" stroke="#a89a10" stroke-width=".6"/></svg>
<svg class="a" style="left:1522.7px;top:1693.7px;width:26px;height:26px" viewBox="0 0 28 28"><rect x="8" y="3" width="15" height="23" fill="#fff" stroke="#555" stroke-width="1.200"/><rect x="9" y="5" width="13" height="3.200" fill="#e8601a"/><rect x="9" y="10.5" width="13" height="3.200" fill="#e8601a"/><rect x="9" y="16" width="13" height="3.200" fill="#8a8f98"/><rect x="9" y="21.5" width="13" height="3.200" fill="#8a8f98"/><polygon points="8.0,1.5 9.2,5.0 12.8,4.2 10.3,7.0 12.8,9.8 9.2,9.0 8.0,12.5 6.8,9.0 3.2,9.8 5.7,7.0 3.2,4.3 6.8,5.0" fill="#f7ee18" stroke="#a89a10" stroke-width=".6"/></svg>
<svg class="a" style="left:1561.7px;top:1693.7px;width:26px;height:26px" viewBox="0 0 28 28"><rect x="8" y="3" width="15" height="23" fill="#fff" stroke="#555" stroke-width="1.200"/><rect x="9" y="5" width="13" height="3.200" fill="#8a8f98"/><rect x="9" y="10.5" width="13" height="3.200" fill="#e8601a"/><rect x="9" y="16" width="13" height="3.200" fill="#e8601a"/><rect x="9" y="21.5" width="13" height="3.200" fill="#8a8f98"/><polygon points="8.0,1.5 9.2,5.0 12.8,4.2 10.3,7.0 12.8,9.8 9.2,9.0 8.0,12.5 6.8,9.0 3.2,9.8 5.7,7.0 3.2,4.3 6.8,5.0" fill="#f7ee18" stroke="#a89a10" stroke-width=".6"/></svg>
<svg class="a" style="left:1600.7px;top:1693.7px;width:26px;height:26px" viewBox="0 0 28 28"><rect x="8" y="3" width="15" height="23" fill="#fff" stroke="#555" stroke-width="1.200"/><rect x="9" y="5" width="13" height="3.200" fill="#8a8f98"/><rect x="9" y="10.5" width="13" height="3.200" fill="#8a8f98"/><rect x="9" y="16" width="13" height="3.200" fill="#e8601a"/><rect x="9" y="21.5" width="13" height="3.200" fill="#e8601a"/><polygon points="8.0,1.5 9.2,5.0 12.8,4.2 10.3,7.0 12.8,9.8 9.2,9.0 8.0,12.5 6.8,9.0 3.2,9.8 5.7,7.0 3.2,4.3 6.8,5.0" fill="#f7ee18" stroke="#a89a10" stroke-width=".6"/></svg>
<svg class="a" style="left:1649.7px;top:1693.7px;width:26px;height:26px" viewBox="0 0 28 28"><rect x="8" y="3" width="15" height="23" fill="#fff" stroke="#555" stroke-width="1.200"/><rect x="9" y="5" width="13" height="3.200" fill="#8a8f98"/><rect x="9" y="10.5" width="13" height="3.200" fill="#8a8f98"/><rect x="9" y="16" width="13" height="3.200" fill="#8a8f98"/><rect x="9" y="21.5" width="13" height="3.200" fill="#8a8f98"/><path d="M10 1L4 13h4l-3 11 9-14H9l5-9z" fill="#f7d21a" stroke="#c79a10" stroke-width=".8"/></svg>
<svg class="a" style="left:1828.7px;top:1693.7px;width:26px;height:26px" viewBox="0 0 28 28"><path d="M7 7l14 14M21 7L7 21" stroke="#e81010" stroke-width="3.600"/></svg>
<svg class="a" style="left:1475.7px;top:1755.7px;width:26px;height:26px" viewBox="0 0 28 28"><path d="M3 25c1-2 3-4 4-5a9.500 9 0 1 1 5 3c-3 1-6 2-9 2z" fill="#555"/><text x="15.500" y="19" font-size="15" font-weight="bold" text-anchor="middle" fill="#cce4f7">?</text></svg>
<svg class="a" style="left:1524.7px;top:1755.7px;width:26px;height:26px" viewBox="0 0 28 28"><rect x="5" y="2" width="19" height="6" fill="#90d090"/><path d="M7 5v3M10 6v2M13 5v3M16 6v2M19 5v3M22 6v2" stroke="#509050" stroke-width=".8"/><text x="14" y="23" font-size="13" fill="#111" text-anchor="middle" letter-spacing="-.8">0.<tspan fill="#2a5ad8" text-decoration="underline">00</tspan></text></svg>
<svg class="a" style="left:1573.7px;top:1755.7px;width:26px;height:26px" viewBox="0 0 28 28"><rect x="4" y="3" width="4" height="4" fill="#e02020"/><rect x="8" y="3" width="4" height="4" fill="#f0e020"/><rect x="4" y="7" width="4" height="4" fill="#2030d0"/><rect x="8" y="7" width="4" height="4" fill="#20b030"/><text x="9" y="23" font-size="12" font-weight="bold" text-anchor="middle" fill="#111">A</text><path d="M4 26h3M8 26h3M12 26h3" stroke="#333" stroke-width="1.500"/><rect x="12" y="12" width="14" height="10" fill="#fff" stroke="#777" stroke-width="1"/><rect x="12" y="12" width="14" height="3" fill="#2a3fa8"/></svg>
<svg class="a" style="left:1622.7px;top:1755.7px;width:26px;height:26px" viewBox="0 0 28 28"><text x="11" y="22" font-size="19" font-style="italic" font-family="Liberation Serif,serif" text-anchor="middle" fill="#111">fx</text><path d="M13 6c4-6 10-6 14 0-4 6-10 6-14 0z" fill="#fff" stroke="#1d1d5a" stroke-width="1.3"/><circle cx="20" cy="6" r="3.2" fill="#3a62c8"/><circle cx="20" cy="6" r="1.5" fill="#0a0a30"/></svg>
<div class="a" style="left:2999.5px;top:1681px;width:34.90000000000009px;height:28px;background:#cce4f7;border:1.300px solid #1a4a9a;box-sizing:border-box;"></div>
<svg class="a" style="left:3005.9px;top:1684.0px;width:22px;height:22px" viewBox="0 0 28 28"><rect x="4" y="3" width="9" height="9" fill="#3a5ac8"/><rect x="6" y="5" width="3" height="3" fill="#fff"/><path d="M17 4c4 0 6 3 6 6M21 8l2 3 3-3" fill="none" stroke="#444" stroke-width="1.500"/><path d="M8 24c-3 0-4-3-4-6M2 19l2-3 3 3" fill="none" stroke="#444" stroke-width="1.500"/><path d="M12 17l7 1v8l-7-1z" fill="#7090c0"/><path d="M19 18l5-2v7l-5 3z" fill="#4a6aa0"/><path d="M12 17l5-2 7 1-5 2z" fill="#a9c5ec"/></svg>
<div class="a" style="left:3140.9px;top:1681px;width:50.40000000000009px;height:28px;background:#cce4f7;"></div>
<svg class="a" style="left:3146.9px;top:1684.0px;width:22px;height:22px" viewBox="0 0 28 28"><text x="4" y="12" font-size="9" font-weight="bold" fill="#e81818" text-anchor="middle">1</text><text x="13" y="12" font-size="9" font-weight="bold" fill="#e81818" text-anchor="middle">2</text><text x="22" y="12" font-size="9" font-weight="bold" fill="#e81818" text-anchor="middle">3</text><path d="M3 19h20" stroke="#e81818" stroke-width="1.300"/><circle cx="3" cy="19" r="1.5" fill="#e81818"/><circle cx="13" cy="19" r="1.5" fill="#e81818"/><circle cx="23" cy="19" r="1.5" fill="#e81818"/></svg>
<svg class="a" style="left:3175.3px;top:1692px;width:10px;height:6px" viewBox="0 0 10 6"><path d="M0 0h10L5 6z" fill="#111"/></svg>
<div class="a" style="left:3196.9px;top:1681px;width:34.29999999999973px;height:28px;background:#cce4f7;border:1.300px solid #1a4a9a;box-sizing:border-box;"></div>
<svg class="a" style="left:3203.1px;top:1684.0px;width:22px;height:22px" viewBox="0 0 28 28"><path d="M4 3v17h17z" fill="#a0e090" stroke="#444" stroke-width="1.200"/><path d="M8 12v5h5z" fill="#fff" stroke="#444" stroke-width=".8"/><rect x="3" y="21" width="22" height="5" fill="#fff" stroke="#444" stroke-width="1"/><path d="M6 21v2.500M9 21v2.500M12 21v2.500M15 21v2.500M18 21v2.500M21 21v2.500" stroke="#444" stroke-width=".8"/><path d="M12 7c4-6 10-6 14 0-4 6-10 6-14 0z" fill="#fff" stroke="#1d1d5a" stroke-width="1.3"/><circle cx="19" cy="7" r="3.2" fill="#3a62c8"/><circle cx="19" cy="7" r="1.5" fill="#0a0a30"/></svg>
<div class="a" style="left:3246.3px;top:1681px;width:33.29999999999973px;height:28px;background:#cce4f7;"></div>
<svg class="a" style="left:3251.9px;top:1684.0px;width:22px;height:22px" viewBox="0 0 28 28"><path d="M6 5h17" stroke="#10a040" stroke-width="1.600"/><path d="M20 1.500l5 3.500-5 3.500z" fill="#10a040"/><path d="M6 5v17" stroke="#1030d0" stroke-width="1.600"/><path d="M2.500 19l3.500 6 3.500-6z" fill="#1030d0"/><circle cx="6" cy="5" r="3" fill="#f0d020" stroke="#555" stroke-width=".6"/><text x="19" y="25" font-size="14" font-weight="bold" text-anchor="middle" fill="#111" letter-spacing="-.5">X</text></svg>
<div class="a" style="left:3285.2px;top:1681px;width:33.30000000000018px;height:28px;background:#cce4f7;"></div>
<svg class="a" style="left:3290.8px;top:1684.0px;width:22px;height:22px" viewBox="0 0 28 28"><path d="M6 5h17" stroke="#d04010" stroke-width="1.600"/><path d="M20 1.500l5 3.500-5 3.500z" fill="#d04010"/><path d="M6 5v17" stroke="#1030d0" stroke-width="1.600"/><path d="M2.500 19l3.500 6 3.500-6z" fill="#1030d0"/><circle cx="6" cy="5" r="3" fill="#10a040" stroke="#555" stroke-width=".6"/><text x="19" y="25" font-size="14" font-weight="bold" text-anchor="middle" fill="#111" letter-spacing="-.5">-Y</text></svg>
<div class="a" style="left:3324px;top:1681px;width:33.40000000000009px;height:28px;background:#cce4f7;"></div>
<svg class="a" style="left:3329.7px;top:1684.0px;width:22px;height:22px" viewBox="0 0 28 28"><path d="M6 5h17" stroke="#d04010" stroke-width="1.600"/><path d="M20 1.500l5 3.500-5 3.500z" fill="#d04010"/><path d="M6 5v17" stroke="#10a040" stroke-width="1.600"/><path d="M2.500 19l3.500 6 3.500-6z" fill="#10a040"/><circle cx="6" cy="5" r="3" fill="#f0d020" stroke="#555" stroke-width=".6"/><text x="19" y="25" font-size="14" font-weight="bold" text-anchor="middle" fill="#111" letter-spacing="-.5">Z</text></svg>
<div class="a" style="left:3362.9px;top:1681px;width:33.79999999999973px;height:28px;background:#cce4f7;"></div>
<svg class="a" style="left:3368.8px;top:1684.0px;width:22px;height:22px" viewBox="0 0 28 28"><path d="M6 23h17" stroke="#d04010" stroke-width="1.600"/><path d="M20 19.500l5 3.500-5 3.500z" fill="#d04010"/><path d="M6 23V6" stroke="#10a040" stroke-width="1.600"/><path d="M2.500 9L6 3l3.500 6z" fill="#10a040"/><circle cx="6" cy="23" r="3" fill="#1030d0"/><text x="18" y="14" font-size="13" font-weight="bold" text-anchor="middle" fill="#111" letter-spacing="-.5">-Z</text></svg>
<div class="a" style="left:3402.3px;top:1681px;width:50.399999999999636px;height:28px;background:#cce4f7;"></div>
<svg class="a" style="left:3408.3px;top:1684.0px;width:22px;height:22px" viewBox="0 0 28 28"><path d="M2 12l7-2V5l9-3 6 2v16l-15 6-7-3z" fill="#5a7fc8"/><path d="M2 12l7 3v11l-7-3zM9 10l6 2.500V7L9 5z" fill="#7fa0e0"/><path d="M9 15l6-2.500V7l9-3v16l-15 6z" fill="#3d5fa8"/><path d="M9 5l9-3 6 2-9 3zM2 12l7-2 6 2.500-6 2.500z" fill="#a9c5f0"/></svg>
<svg class="a" style="left:3436.7px;top:1692px;width:10px;height:6px" viewBox="0 0 10 6"><path d="M0 0h10L5 6z" fill="#111"/></svg>
<div class="a" style="left:3458.3px;top:1681px;width:50.5px;height:28px;background:#cce4f7;"></div>
<svg class="a" style="left:3464.3px;top:1684.0px;width:22px;height:22px" viewBox="0 0 28 28"><path d="M3 9l15-5 7 3v14l-15 5-7-3z" fill="#c4cdea" stroke="#7a86b8" stroke-width="1.300"/><path d="M3 9l7 3 15-5M10 12v14" fill="none" stroke="#7a86b8" stroke-width="1.300"/><path d="M18 4v14l-15 5M18 18l7 3" fill="none" stroke="#9aa4cc" stroke-width="1"/></svg>
<svg class="a" style="left:3492.8px;top:1692px;width:10px;height:6px" viewBox="0 0 10 6"><path d="M0 0h10L5 6z" fill="#111"/></svg>
<div class="a" style="left:3514.3px;top:1681px;width:50.5px;height:28px;background:#cce4f7;"></div>
<svg class="a" style="left:3520.3px;top:1684.0px;width:22px;height:22px" viewBox="0 0 28 28"><rect x="7" y="2" width="14" height="6" fill="#666"/><path d="M2 10a2 2 0 0 1 2-2h20a2 2 0 0 1 2 2v10H2z" fill="#666"/><rect x="6" y="15" width="16" height="11" fill="#f4f4f4" stroke="#666" stroke-width="1.600"/><path d="M9 19h10M9 22.500h10" stroke="#666" stroke-width="1.500"/><circle cx="22.500" cy="11.500" r="1.100" fill="#fff"/></svg>
<svg class="a" style="left:3548.8px;top:1692px;width:10px;height:6px" viewBox="0 0 10 6"><path d="M0 0h10L5 6z" fill="#111"/></svg>
<div class="a" style="left:3579.9px;top:1681px;width:33.79999999999973px;height:28px;background:#cce4f7;"></div>
<svg class="a" style="left:3585.8px;top:1684.0px;width:22px;height:22px" viewBox="0 0 28 28"><circle cx="10" cy="11" r="7" fill="none" stroke="#666" stroke-width="3"/><path d="M15 16l9 9" stroke="#666" stroke-width="3.500"/><path d="M14 2l10 10M24 2L14 12" stroke="#e81010" stroke-width="3.200"/></svg>
</body></html>
